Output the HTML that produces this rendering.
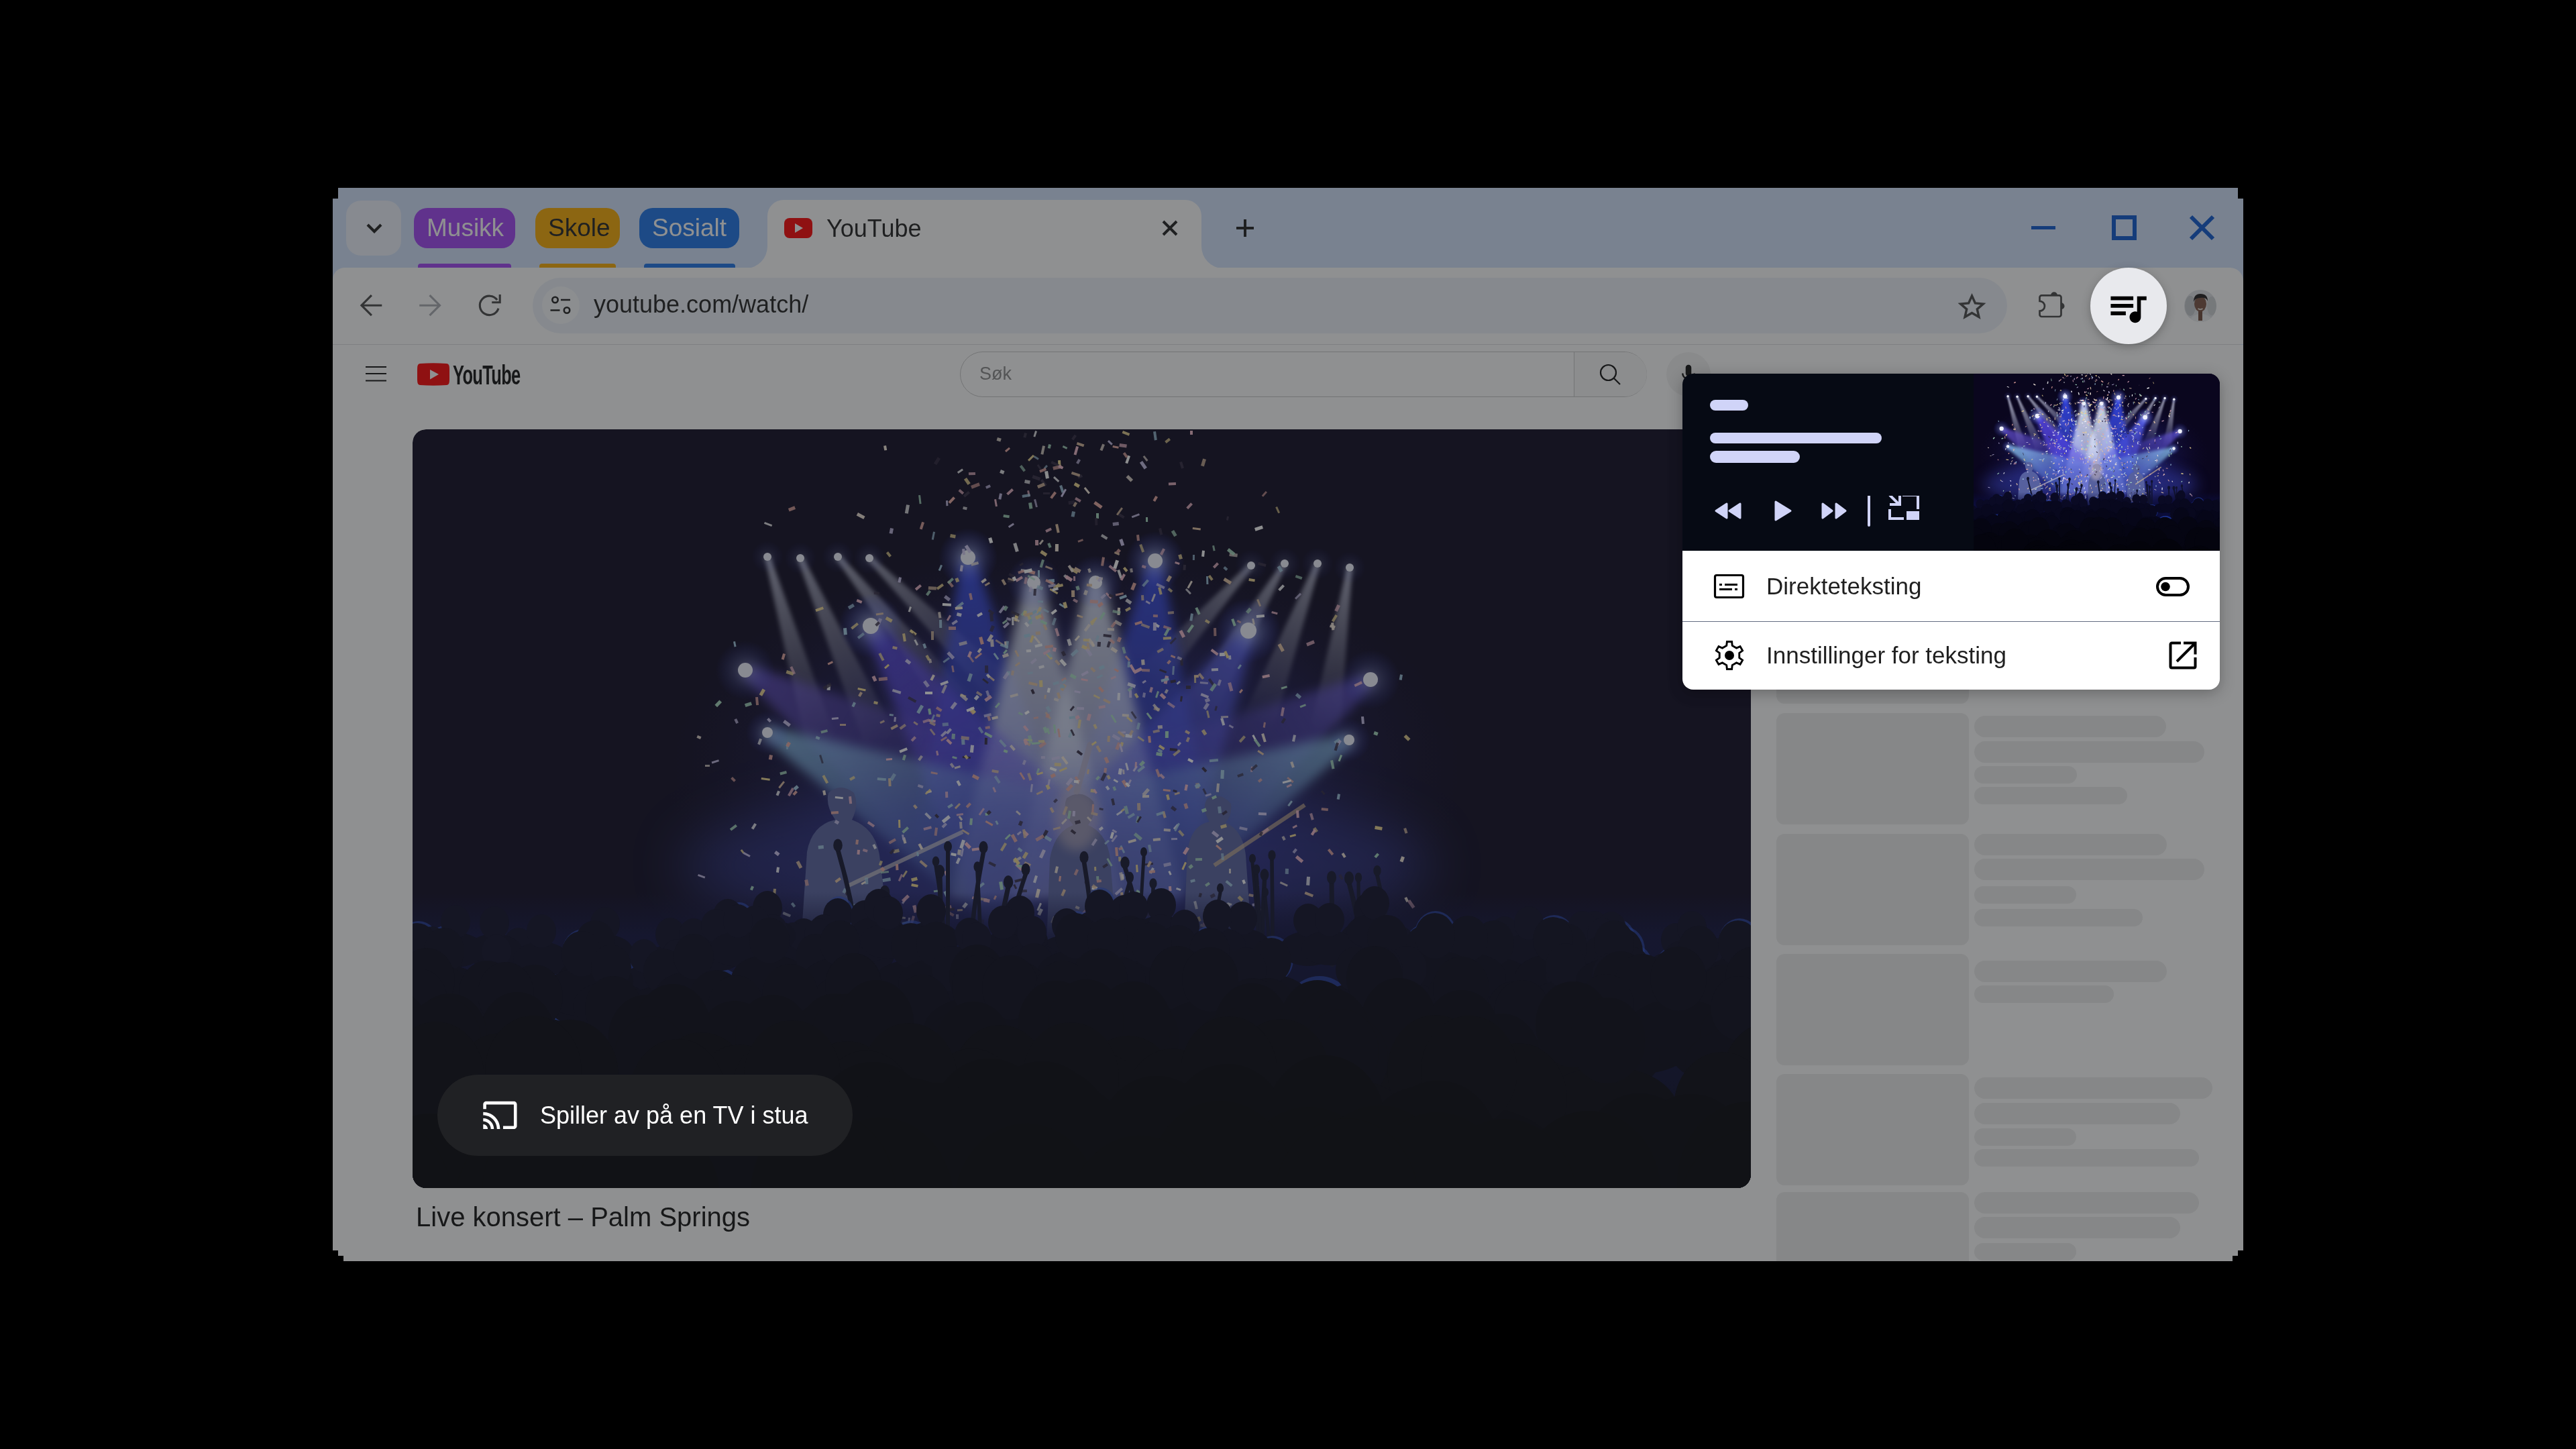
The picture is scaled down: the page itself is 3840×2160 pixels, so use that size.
<!DOCTYPE html>
<html><head><meta charset="utf-8"><style>
html,body{margin:0;padding:0;background:#000;-webkit-font-smoothing:antialiased;}
body{width:3840px;height:2160px;overflow:hidden;position:relative;}
#win{position:absolute;left:0;top:0;width:3840px;height:2160px;clip-path:polygon(504px 280px,3336px 280px,3336px 296px,3344px 296px,3344px 1864px,3336px 1864px,3336px 1872px,3328px 1872px,3328px 1880px,512px 1880px,512px 1872px,504px 1872px,504px 1864px,496px 1864px,496px 296px,504px 296px);}
</style></head><body>
<div id="win">
<div style="position:absolute;left:496px;top:280px;width:2848px;height:1600px;background:#d3e3fd"></div>
<div style="position:absolute;left:516px;top:299px;width:82px;height:82px;background:#eef2fc;border-radius:22px"></div>
<svg style="position:absolute;left:546px;top:333px;" width="24" height="16" viewBox="0 0 24 16"><path d="M2 2 L12 12 L22 2" fill="none" stroke="#1f1f1f" stroke-width="4.2"/></svg>
<div style="position:absolute;left:617px;top:310px;width:151px;height:60px;background:#a142f4;border-radius:20px"></div>
<div style="position:absolute;left:636px;top:321.18px;font-family:'Liberation Sans', sans-serif;font-size:37px;line-height:37px;color:#ffffff;font-weight:400;white-space:nowrap;will-change:transform;">Musikk</div>
<div style="position:absolute;left:623px;top:393px;width:139px;height:8px;background:#a142f4;border-radius:4px 4px 0 0"></div>
<div style="position:absolute;left:798px;top:310px;width:126px;height:60px;background:#f9ab00;border-radius:20px"></div>
<div style="position:absolute;left:817px;top:321.18px;font-family:'Liberation Sans', sans-serif;font-size:37px;line-height:37px;color:#1f1f1f;font-weight:400;white-space:nowrap;will-change:transform;">Skole</div>
<div style="position:absolute;left:804px;top:393px;width:114px;height:8px;background:#f9ab00;border-radius:4px 4px 0 0"></div>
<div style="position:absolute;left:953px;top:310px;width:149px;height:60px;background:#1a73e8;border-radius:20px"></div>
<div style="position:absolute;left:972px;top:321.18px;font-family:'Liberation Sans', sans-serif;font-size:37px;line-height:37px;color:#ffffff;font-weight:400;white-space:nowrap;will-change:transform;">Sosialt</div>
<div style="position:absolute;left:960px;top:393px;width:136px;height:8px;background:#1a73e8;border-radius:4px 4px 0 0"></div>
<svg style="position:absolute;left:1112px;top:298px;" width="711" height="102" viewBox="0 0 711 102"><path d="M0 102 A32 33 0 0 0 32 69 V24 A24 24 0 0 1 56 0 H655 A24 24 0 0 1 679 24 V69 A32 33 0 0 0 711 102 Z" fill="#ffffff"/></svg>
<svg style="position:absolute;left:1169px;top:325px;" width="42" height="30" viewBox="0 0 42 30"><rect x="0" y="0" width="42" height="30" rx="8" fill="#ff0000"/><path d="M16 8 L28 15 L16 22 Z" fill="#fff"/></svg>
<div style="position:absolute;left:1232px;top:322.53px;font-family:'Liberation Sans', sans-serif;font-size:36px;line-height:36px;color:#1f1f1f;font-weight:400;white-space:nowrap;will-change:transform;">YouTube</div>
<svg style="position:absolute;left:1732px;top:328px;" width="24" height="24" viewBox="0 0 24 24"><path d="M2 2 L22 22 M22 2 L2 22" stroke="#1f1f1f" stroke-width="4" fill="none"/></svg>
<svg style="position:absolute;left:1842px;top:326px;" width="28" height="28" viewBox="0 0 28 28"><path d="M14 1 V27 M1 14 H27" stroke="#1f1f1f" stroke-width="4" fill="none"/></svg>
<div style="position:absolute;left:3028px;top:337px;width:36px;height:5px;background:#0b57d0"></div>
<div style="position:absolute;left:3148px;top:321px;width:37px;height:37px;box-sizing:border-box;border:6px solid #0b57d0"></div>
<svg style="position:absolute;left:3263px;top:320px;" width="39" height="39" viewBox="0 0 39 39"><path d="M3 3 L36 36 M36 3 L3 36" stroke="#0b57d0" stroke-width="6" fill="none"/></svg>
<div style="position:absolute;left:496px;top:399px;width:2848px;height:114px;background:#ffffff;border-radius:18px 20px 0 0"></div>
<div style="position:absolute;left:496px;top:512.5px;width:2844px;height:1.5px;background:#dedfe0"></div>
<svg style="position:absolute;left:525px;top:430px;" width="240" height="50" viewBox="525 430 240 50"><path d="M569.3 455.2 H539 M553.9 440.2 L538.9 455.2 L553.9 470.1" fill="none" stroke="#474747" stroke-width="3.1"/><path d="M625.2 455.2 H655 M640.5 440.2 L655.5 455.2 L640.5 470.1" fill="none" stroke="#a8abb0" stroke-width="3.1"/><path d="M741.1 447.2 A14.2 14.2 0 1 0 743.0 459.7" fill="none" stroke="#474747" stroke-width="3.1"/><path d="M733.2 450.8 H745.2 V439" fill="none" stroke="#474747" stroke-width="3.1"/></svg>
<div style="position:absolute;left:794px;top:414px;width:2198px;height:83px;background:#ecf1f8;border-radius:41.5px"></div>
<div style="position:absolute;left:808px;top:427px;width:56px;height:56px;background:#f8fafd;border-radius:50%"></div>
<svg style="position:absolute;left:816px;top:435px;" width="40" height="40" viewBox="0 0 40 40"><circle cx="11.5" cy="12" r="4.2" fill="none" stroke="#1f1f1f" stroke-width="2.6"/><path d="M20 12 H34" stroke="#1f1f1f" stroke-width="2.6"/><path d="M4.5 27.5 H18.5" stroke="#1f1f1f" stroke-width="2.6"/><circle cx="29" cy="27.5" r="4.2" fill="none" stroke="#1f1f1f" stroke-width="2.6"/></svg>
<div style="position:absolute;left:885px;top:435.53px;font-family:'Liberation Sans', sans-serif;font-size:36px;line-height:36px;color:#1f1f1f;font-weight:400;white-space:nowrap;will-change:transform;">youtube.com/watch/</div>
<svg style="position:absolute;left:2918px;top:436px;" width="43" height="43" viewBox="0 0 24 24"><path d="M12 2.8l2.75 6.1 6.65.6-5.05 4.4 1.5 6.5L12 17 6.15 20.4l1.5-6.5L2.6 9.5l6.65-.6z" fill="none" stroke="#474747" stroke-width="1.9" stroke-linejoin="miter"/></svg>
<svg style="position:absolute;left:3030px;top:425px;" width="60" height="60" viewBox="0 0 60 60"><path d="M13.5 15.3 H39.5 A3 3 0 0 1 42.5 18.3 V44 A3 3 0 0 1 39.5 47 H13.5 A3 3 0 0 1 10.5 44 V38.7 A7.45 7.45 0 0 0 10.5 23.8 V18.3 A3 3 0 0 1 13.5 15.3 Z" fill="none" stroke="#474747" stroke-width="2.7"/><path d="M27 15.3 A5 5 0 0 1 37 15.3 Z" fill="#474747"/><path d="M42.5 26.2 A5 5 0 0 1 42.5 36.2 Z" fill="#474747"/></svg>
<svg style="position:absolute;left:3256px;top:432px;" width="48" height="48" viewBox="0 0 48 48"><defs><clipPath id="avc"><circle cx="24" cy="24" r="24"/></clipPath></defs><g clip-path="url(#avc)"><rect width="48" height="48" fill="#dfe1e4"/><ellipse cx="9" cy="24" rx="8" ry="15" fill="#c4c8cc"/><ellipse cx="41" cy="24" rx="7" ry="14" fill="#ccd0d3"/><path d="M6 48 Q10 38 22 36 L28 36 Q40 38 44 48 Z" fill="#eceef0"/><rect x="21" y="32" width="6" height="14" fill="#6e4838"/><ellipse cx="24" cy="21" rx="9" ry="11.5" fill="#7a5242"/><path d="M14 18 Q14 6 24 6 Q35 6 35 17 Q33 11 24 12 Q16 12 14 18 Z" fill="#1e1a1a"/><path d="M20.5 28 Q24 30.5 27.5 28" stroke="#e8e0d8" stroke-width="1.8" fill="none"/></g></svg>
<div style="position:absolute;left:496px;top:514px;width:2848px;height:1366px;background:#ffffff"></div>
<svg style="position:absolute;left:545px;top:545px;" width="31" height="24" viewBox="0 0 31 24"><path d="M0 2H31M0 12H31M0 22.4H31" stroke="#0f0f0f" stroke-width="2"/></svg>
<svg style="position:absolute;left:622px;top:541px;" width="48" height="34" viewBox="0 0 48 34"><path d="M4 1 Q24 -0.5 44 1 Q47.5 1.5 47.8 6 Q48.5 17 47.8 28 Q47.5 32.5 44 33 Q24 34.5 4 33 Q0.5 32.5 0.2 28 Q-0.5 17 0.2 6 Q0.5 1.5 4 1Z" fill="#ff0000"/><path d="M19 10 L32 17 L19 24.6Z" fill="#fff"/></svg>
<div style="position:absolute;left:675px;top:538.5px;font-family:'Liberation Sans', sans-serif;font-weight:700;font-size:41px;line-height:41px;color:#0f0f0f;transform:scaleX(0.62);transform-origin:0 0;letter-spacing:-1px;white-space:nowrap">YouTube</div>
<div style="position:absolute;left:1431px;top:524px;width:1024px;height:68px;box-sizing:border-box;border:1.5px solid #c6c6c6;border-radius:34px;background:#ffffff"></div>
<div style="position:absolute;left:2346px;top:525px;width:108px;height:66px;background:#f8f8f8;border-left:1.5px solid #c6c6c6;border-radius:0 33px 33px 0"></div>
<div style="position:absolute;left:1460px;top:544.14px;font-family:'Liberation Sans', sans-serif;font-size:27px;line-height:27px;color:#888888;font-weight:400;white-space:nowrap;will-change:transform;">Søk</div>
<svg style="position:absolute;left:2383px;top:541px;" width="34" height="34" viewBox="0 0 34 34"><circle cx="14.5" cy="14.5" r="11.5" fill="none" stroke="#0f0f0f" stroke-width="2.2"/><path d="M23 23 L32 32" stroke="#0f0f0f" stroke-width="2.2"/></svg>
<div style="position:absolute;left:2484px;top:525px;width:66px;height:66px;background:#f2f2f2;border-radius:50%"></div>
<svg style="position:absolute;left:2500px;top:541px;" width="34" height="34" viewBox="0 0 24 24"><path d="M12 14c1.66 0 3-1.34 3-3V5c0-1.66-1.34-3-3-3S9 3.34 9 5v6c0 1.66 1.34 3 3 3zm5.3-3c0 3-2.54 5.1-5.3 5.1S6.7 14 6.7 11H5c0 3.41 2.72 6.23 6 6.72V21h2v-3.28c3.28-.48 6-3.3 6-6.72h-1.7z" fill="#0f0f0f"/></svg>
<svg style="position:absolute;left:615px;top:640px;border-radius:20px" width="1995" height="1131" viewBox="0 0 1995 1131"><defs><clipPath id="vclip"><rect width="1995" height="1131" rx="20"/></clipPath><g id="scene"><defs><filter id="b3" x="-50%" y="-50%" width="200%" height="200%"><feGaussianBlur stdDeviation="3"/></filter><filter id="b8" x="-50%" y="-50%" width="200%" height="200%"><feGaussianBlur stdDeviation="8"/></filter><filter id="b16" x="-50%" y="-50%" width="200%" height="200%"><feGaussianBlur stdDeviation="16"/></filter><filter id="b40" x="-50%" y="-50%" width="200%" height="200%"><feGaussianBlur stdDeviation="40"/></filter><radialGradient id="haze" cx="50%" cy="50%" r="50%"><stop offset="0" stop-color="#4a54d8" stop-opacity="0.6"/><stop offset="0.6" stop-color="#3030a8" stop-opacity="0.3"/><stop offset="1" stop-color="#1a1250" stop-opacity="0"/></radialGradient><radialGradient id="glw" cx="50%" cy="50%" r="50%"><stop offset="0" stop-color="#ffffff" stop-opacity="1"/><stop offset="0.3" stop-color="#a0b0ff" stop-opacity="0.7"/><stop offset="1" stop-color="#3040ff" stop-opacity="0"/></radialGradient><linearGradient id="crowdg" x1="0" y1="0" x2="0" y2="1"><stop offset="0" stop-color="#0c0e40" stop-opacity="0"/><stop offset="0.15" stop-color="#0c0e40" stop-opacity="0.85"/><stop offset="0.5" stop-color="#090b34" stop-opacity="1"/><stop offset="1" stop-color="#05071e" stop-opacity="1"/></linearGradient><linearGradient id="bm0" gradientUnits="userSpaceOnUse" x1="529" y1="190" x2="610" y2="470"><stop offset="0" stop-color="#d8dcf4" stop-opacity="0.75"/><stop offset="1" stop-color="#d8dcf4" stop-opacity="0.0"/></linearGradient><linearGradient id="bm1" gradientUnits="userSpaceOnUse" x1="578" y1="192" x2="700" y2="470"><stop offset="0" stop-color="#d8dcf4" stop-opacity="0.7"/><stop offset="1" stop-color="#d8dcf4" stop-opacity="0.0"/></linearGradient><linearGradient id="bm2" gradientUnits="userSpaceOnUse" x1="634" y1="190" x2="820" y2="420"><stop offset="0" stop-color="#d8dcf4" stop-opacity="0.7"/><stop offset="1" stop-color="#d8dcf4" stop-opacity="0.0"/></linearGradient><linearGradient id="bm3" gradientUnits="userSpaceOnUse" x1="681" y1="192" x2="880" y2="390"><stop offset="0" stop-color="#d8dcf4" stop-opacity="0.65"/><stop offset="1" stop-color="#d8dcf4" stop-opacity="0.0"/></linearGradient><linearGradient id="bm4" gradientUnits="userSpaceOnUse" x1="1250" y1="203" x2="1090" y2="380"><stop offset="0" stop-color="#d8dcf4" stop-opacity="0.65"/><stop offset="1" stop-color="#d8dcf4" stop-opacity="0.0"/></linearGradient><linearGradient id="bm5" gradientUnits="userSpaceOnUse" x1="1300" y1="200" x2="1170" y2="420"><stop offset="0" stop-color="#d8dcf4" stop-opacity="0.7"/><stop offset="1" stop-color="#d8dcf4" stop-opacity="0.0"/></linearGradient><linearGradient id="bm6" gradientUnits="userSpaceOnUse" x1="1349" y1="200" x2="1260" y2="440"><stop offset="0" stop-color="#d8dcf4" stop-opacity="0.7"/><stop offset="1" stop-color="#d8dcf4" stop-opacity="0.0"/></linearGradient><linearGradient id="bm7" gradientUnits="userSpaceOnUse" x1="1397" y1="206" x2="1360" y2="450"><stop offset="0" stop-color="#d8dcf4" stop-opacity="0.75"/><stop offset="1" stop-color="#d8dcf4" stop-opacity="0.0"/></linearGradient><linearGradient id="bm8" gradientUnits="userSpaceOnUse" x1="828" y1="191" x2="860" y2="600"><stop offset="0" stop-color="#3a50ff" stop-opacity="0.85"/><stop offset="1" stop-color="#3a50ff" stop-opacity="0.15"/></linearGradient><linearGradient id="bm9" gradientUnits="userSpaceOnUse" x1="1107" y1="196" x2="1080" y2="600"><stop offset="0" stop-color="#3a50ff" stop-opacity="0.85"/><stop offset="1" stop-color="#3a50ff" stop-opacity="0.15"/></linearGradient><linearGradient id="bm10" gradientUnits="userSpaceOnUse" x1="926" y1="228" x2="930" y2="700"><stop offset="0" stop-color="#e4ecff" stop-opacity="0.9"/><stop offset="1" stop-color="#e4ecff" stop-opacity="0.35"/></linearGradient><linearGradient id="bm11" gradientUnits="userSpaceOnUse" x1="1018" y1="228" x2="1020" y2="700"><stop offset="0" stop-color="#e4ecff" stop-opacity="0.9"/><stop offset="1" stop-color="#e4ecff" stop-opacity="0.35"/></linearGradient><linearGradient id="bm12" gradientUnits="userSpaceOnUse" x1="683" y1="293" x2="950" y2="680"><stop offset="0" stop-color="#5a48f0" stop-opacity="0.85"/><stop offset="1" stop-color="#5a48f0" stop-opacity="0.15"/></linearGradient><linearGradient id="bm13" gradientUnits="userSpaceOnUse" x1="1246" y1="300" x2="1030" y2="680"><stop offset="0" stop-color="#5058f0" stop-opacity="0.8"/><stop offset="1" stop-color="#5058f0" stop-opacity="0.15"/></linearGradient><linearGradient id="bm14" gradientUnits="userSpaceOnUse" x1="496" y1="359" x2="820" y2="560"><stop offset="0" stop-color="#7058e8" stop-opacity="0.7"/><stop offset="1" stop-color="#7058e8" stop-opacity="0.05"/></linearGradient><linearGradient id="bm15" gradientUnits="userSpaceOnUse" x1="1428" y1="373" x2="1130" y2="560"><stop offset="0" stop-color="#6858e8" stop-opacity="0.7"/><stop offset="1" stop-color="#6858e8" stop-opacity="0.05"/></linearGradient><linearGradient id="bm16" gradientUnits="userSpaceOnUse" x1="529" y1="452" x2="950" y2="660"><stop offset="0" stop-color="#88c0f0" stop-opacity="0.85"/><stop offset="1" stop-color="#88c0f0" stop-opacity="0.1"/></linearGradient><linearGradient id="bm17" gradientUnits="userSpaceOnUse" x1="1396" y1="463" x2="1020" y2="650"><stop offset="0" stop-color="#88c0f0" stop-opacity="0.8"/><stop offset="1" stop-color="#88c0f0" stop-opacity="0.1"/></linearGradient></defs><rect width="1995" height="1131" fill="#0a061e"/><ellipse cx="975" cy="500" rx="600" ry="330" fill="url(#haze)"/><polygon points="525,191 588,476 632,464 533,189" fill="url(#bm0)" filter="url(#b3)"/><polygon points="574,194 677,480 723,460 582,190" fill="url(#bm1)" filter="url(#b3)"/><polygon points="631,193 801,436 839,404 637,187" fill="url(#bm2)" filter="url(#b3)"/><polygon points="678,195 864,406 896,374 684,189" fill="url(#bm3)" filter="url(#b3)"/><polygon points="1247,200 1073,365 1107,395 1253,206" fill="url(#bm4)" filter="url(#b3)"/><polygon points="1297,198 1148,407 1192,433 1303,202" fill="url(#bm5)" filter="url(#b3)"/><polygon points="1345,199 1237,431 1283,449 1353,201" fill="url(#bm6)" filter="url(#b3)"/><polygon points="1393,205 1338,447 1382,453 1401,207" fill="url(#bm7)" filter="url(#b3)"/><polygon points="818,192 750,609 970,591 838,190" fill="url(#bm8)" filter="url(#b8)"/><polygon points="1097,195 970,593 1190,607 1117,197" fill="url(#bm9)" filter="url(#b8)"/><polygon points="914,228 800,701 1060,699 938,228" fill="url(#bm10)" filter="url(#b8)"/><polygon points="1006,228 890,701 1150,699 1030,228" fill="url(#bm11)" filter="url(#b8)"/><polygon points="674,299 851,748 1049,612 692,287" fill="url(#bm12)" filter="url(#b8)"/><polygon points="1236,295 926,621 1134,739 1256,305" fill="url(#bm13)" filter="url(#b8)"/><polygon points="491,367 767,645 873,475 501,351" fill="url(#bm14)" filter="url(#b8)"/><polygon points="1423,365 1077,475 1183,645 1433,381" fill="url(#bm15)" filter="url(#b8)"/><polygon points="525,461 897,768 1003,552 533,443" fill="url(#bm16)" filter="url(#b8)"/><polygon points="1392,454 967,543 1073,757 1400,472" fill="url(#bm17)" filter="url(#b8)"/><circle cx="529" cy="190" r="24" fill="url(#glw)" opacity="0.21"/><circle cx="529" cy="190" r="6" fill="#f0f2ff"/><circle cx="578" cy="192" r="24" fill="url(#glw)" opacity="0.21"/><circle cx="578" cy="192" r="6" fill="#f0f2ff"/><circle cx="634" cy="190" r="24" fill="url(#glw)" opacity="0.21"/><circle cx="634" cy="190" r="6" fill="#f0f2ff"/><circle cx="681" cy="192" r="24" fill="url(#glw)" opacity="0.21"/><circle cx="681" cy="192" r="6" fill="#f0f2ff"/><circle cx="828" cy="191" r="44" fill="url(#glw)" opacity="0.70"/><circle cx="828" cy="191" r="11" fill="#f0f2ff"/><circle cx="926" cy="228" r="40" fill="url(#glw)" opacity="0.56"/><circle cx="926" cy="228" r="10" fill="#f0f2ff"/><circle cx="1018" cy="228" r="40" fill="url(#glw)" opacity="0.56"/><circle cx="1018" cy="228" r="10" fill="#f0f2ff"/><circle cx="1107" cy="196" r="44" fill="url(#glw)" opacity="0.70"/><circle cx="1107" cy="196" r="11" fill="#f0f2ff"/><circle cx="1250" cy="203" r="24" fill="url(#glw)" opacity="0.21"/><circle cx="1250" cy="203" r="6" fill="#f0f2ff"/><circle cx="1300" cy="200" r="24" fill="url(#glw)" opacity="0.21"/><circle cx="1300" cy="200" r="6" fill="#f0f2ff"/><circle cx="1349" cy="200" r="24" fill="url(#glw)" opacity="0.21"/><circle cx="1349" cy="200" r="6" fill="#f0f2ff"/><circle cx="1397" cy="206" r="24" fill="url(#glw)" opacity="0.21"/><circle cx="1397" cy="206" r="6" fill="#f0f2ff"/><circle cx="683" cy="293" r="48" fill="url(#glw)" opacity="0.70"/><circle cx="683" cy="293" r="12" fill="#f0f2ff"/><circle cx="1246" cy="300" r="48" fill="url(#glw)" opacity="0.70"/><circle cx="1246" cy="300" r="12" fill="#f0f2ff"/><circle cx="496" cy="359" r="44" fill="url(#glw)" opacity="0.42"/><circle cx="496" cy="359" r="11" fill="#f0f2ff"/><circle cx="1428" cy="373" r="44" fill="url(#glw)" opacity="0.42"/><circle cx="1428" cy="373" r="11" fill="#f0f2ff"/><circle cx="529" cy="452" r="32" fill="url(#glw)" opacity="0.42"/><circle cx="529" cy="452" r="8" fill="#f0f2ff"/><circle cx="1396" cy="463" r="32" fill="url(#glw)" opacity="0.42"/><circle cx="1396" cy="463" r="8" fill="#f0f2ff"/><ellipse cx="960" cy="650" rx="560" ry="120" fill="#3c48c8" opacity="0.45" filter="url(#b40)"/><g fill="#56609e"><g transform="translate(110,-10)"><path d="M470 760 L478 640 Q485 600 520 592 Q505 570 510 552 Q528 536 548 552 Q556 570 545 592 Q580 605 586 645 L600 760 Z"/></g><g transform="translate(105,-10)"><path d="M840 780 L845 650 Q852 610 880 600 Q862 580 870 560 Q892 545 910 565 Q914 585 902 600 Q930 612 935 650 L945 780 Z"/></g><g transform="translate(30,-10)"><path d="M1120 760 L1125 640 Q1130 600 1158 595 Q1145 575 1155 560 Q1175 550 1190 568 Q1192 585 1182 596 Q1208 608 1212 645 L1220 760 Z"/></g></g><ellipse cx="990" cy="580" rx="34" ry="48" fill="#c8b8c0" opacity="0.55" filter="url(#b8)"/><path d="M990 540 L1010 470" stroke="#b0a8c0" stroke-width="9" stroke-linecap="round" opacity="0.7"/><path d="M650 680 L820 600" stroke="#e0d8d0" stroke-width="6" opacity="0.6"/><path d="M1195 650 L1330 560" stroke="#e0c090" stroke-width="6" opacity="0.6"/><g><rect x="556" y="335" width="9" height="4" fill="#e8a8a0" opacity="0.94" transform="rotate(106 556 335)"/><rect x="806" y="352" width="10" height="3" fill="#e8a8a0" opacity="0.73" transform="rotate(80 806 352)"/><rect x="948" y="599" width="13" height="5" fill="#302840" opacity="0.90" transform="rotate(118 948 599)"/><rect x="912" y="461" width="12" height="3" fill="#f0d890" opacity="0.88" transform="rotate(6 912 461)"/><rect x="816" y="576" width="7" height="3" fill="#f2e6d8" opacity="0.90" transform="rotate(53 816 576)"/><rect x="1211" y="338" width="8" height="5" fill="#ffffff" opacity="0.91" transform="rotate(179 1211 338)"/><rect x="993" y="233" width="6" height="5" fill="#a8dcc0" opacity="0.82" transform="rotate(72 993 233)"/><rect x="1213" y="709" width="12" height="3" fill="#f2e6d8" opacity="0.84" transform="rotate(38 1213 709)"/><rect x="883" y="725" width="10" height="5" fill="#ffffff" opacity="0.79" transform="rotate(49 883 725)"/><rect x="1271" y="683" width="6" height="4" fill="#e0c0a0" opacity="0.76" transform="rotate(88 1271 683)"/><rect x="1220" y="377" width="13" height="5" fill="#f0b8c8" opacity="0.73" transform="rotate(75 1220 377)"/><rect x="1010" y="311" width="13" height="5" fill="#f2e6d8" opacity="0.76" transform="rotate(55 1010 311)"/><rect x="1120" y="292" width="12" height="4" fill="#e8a8a0" opacity="0.76" transform="rotate(18 1120 292)"/><rect x="988" y="431" width="9" height="4" fill="#a0c8e0" opacity="0.95" transform="rotate(173 988 431)"/><rect x="913" y="464" width="10" height="4" fill="#e0c0a0" opacity="0.76" transform="rotate(29 913 464)"/><rect x="1168" y="703" width="12" height="4" fill="#ffffff" opacity="0.73" transform="rotate(76 1168 703)"/><rect x="964" y="379" width="9" height="4" fill="#a0c8e0" opacity="0.79" transform="rotate(163 964 379)"/><rect x="1217" y="130" width="6" height="3" fill="#302840" opacity="0.88" transform="rotate(101 1217 130)"/><rect x="1073" y="207" width="6" height="4" fill="#f2e6d8" opacity="0.71" transform="rotate(80 1073 207)"/><rect x="919" y="209" width="10" height="5" fill="#e8a8a0" opacity="0.97" transform="rotate(17 919 209)"/><rect x="725" y="726" width="10" height="3" fill="#f2e6d8" opacity="0.84" transform="rotate(6 725 726)"/><rect x="744" y="265" width="8" height="3" fill="#ffffff" opacity="0.84" transform="rotate(108 744 265)"/><rect x="574" y="541" width="7" height="4" fill="#e8a8a0" opacity="0.94" transform="rotate(133 574 541)"/><rect x="822" y="260" width="12" height="4" fill="#a0c8e0" opacity="0.87" transform="rotate(142 822 260)"/><rect x="521" y="462" width="9" height="4" fill="#ffffff" opacity="0.73" transform="rotate(110 521 462)"/><rect x="1272" y="691" width="11" height="4" fill="#e0c0a0" opacity="0.73" transform="rotate(83 1272 691)"/><rect x="1312" y="555" width="9" height="3" fill="#a0c8e0" opacity="0.93" transform="rotate(126 1312 555)"/><rect x="1035" y="488" width="9" height="5" fill="#e8a8a0" opacity="0.90" transform="rotate(66 1035 488)"/><rect x="1135" y="150" width="9" height="5" fill="#a8dcc0" opacity="0.76" transform="rotate(59 1135 150)"/><rect x="1345" y="319" width="12" height="5" fill="#f0b8c8" opacity="0.77" transform="rotate(158 1345 319)"/><rect x="1013" y="681" width="8" height="5" fill="#ffffff" opacity="0.99" transform="rotate(7 1013 681)"/><rect x="1062" y="205" width="7" height="4" fill="#f0d890" opacity="0.95" transform="rotate(50 1062 205)"/><rect x="700" y="283" width="11" height="5" fill="#d0c8f0" opacity="0.72" transform="rotate(112 700 283)"/><rect x="952" y="23" width="6" height="4" fill="#a8dcc0" opacity="0.89" transform="rotate(103 952 23)"/><rect x="834" y="417" width="7" height="5" fill="#e8a8a0" opacity="0.94" transform="rotate(48 834 417)"/><rect x="742" y="728" width="7" height="3" fill="#d0c8f0" opacity="0.99" transform="rotate(96 742 728)"/><rect x="1061" y="507" width="7" height="3" fill="#f2e6d8" opacity="0.75" transform="rotate(85 1061 507)"/><rect x="1153" y="202" width="8" height="4" fill="#302840" opacity="1.00" transform="rotate(94 1153 202)"/><rect x="734" y="304" width="12" height="4" fill="#f0d890" opacity="0.89" transform="rotate(81 734 304)"/><rect x="713" y="673" width="12" height="5" fill="#a0c8e0" opacity="0.80" transform="rotate(170 713 673)"/><rect x="1243" y="727" width="7" height="5" fill="#ffffff" opacity="0.76" transform="rotate(144 1243 727)"/><rect x="903" y="397" width="12" height="4" fill="#f2e6d8" opacity="0.80" transform="rotate(164 903 397)"/><rect x="821" y="61" width="9" height="3" fill="#ffffff" opacity="0.83" transform="rotate(146 821 61)"/><rect x="1210" y="508" width="13" height="5" fill="#a0c8e0" opacity="0.98" transform="rotate(93 1210 508)"/><rect x="858" y="365" width="13" height="3" fill="#e0c0a0" opacity="0.87" transform="rotate(40 858 365)"/><rect x="826" y="615" width="10" height="5" fill="#f0b8c8" opacity="0.99" transform="rotate(46 826 615)"/><rect x="913" y="644" width="10" height="4" fill="#e0c0a0" opacity="0.86" transform="rotate(25 913 644)"/><rect x="1058" y="424" width="10" height="4" fill="#f2e6d8" opacity="0.85" transform="rotate(5 1058 424)"/><rect x="1198" y="296" width="12" height="4" fill="#e8a8a0" opacity="0.72" transform="rotate(88 1198 296)"/><rect x="515" y="399" width="12" height="4" fill="#e8a8a0" opacity="0.80" transform="rotate(85 515 399)"/><rect x="1338" y="667" width="13" height="5" fill="#ffffff" opacity="0.76" transform="rotate(94 1338 667)"/><rect x="1082" y="457" width="11" height="3" fill="#f0d890" opacity="0.70" transform="rotate(35 1082 457)"/><rect x="935" y="210" width="11" height="3" fill="#a0c8e0" opacity="0.92" transform="rotate(90 935 210)"/><rect x="964" y="392" width="9" height="4" fill="#e0c0a0" opacity="0.88" transform="rotate(74 964 392)"/><rect x="1148" y="398" width="8" height="3" fill="#302840" opacity="0.96" transform="rotate(98 1148 398)"/><rect x="827" y="172" width="12" height="5" fill="#d0c8f0" opacity="0.97" transform="rotate(57 827 172)"/><rect x="795" y="658" width="7" height="3" fill="#f0b8c8" opacity="0.95" transform="rotate(70 795 658)"/><rect x="1000" y="312" width="9" height="4" fill="#f0d890" opacity="0.87" transform="rotate(3 1000 312)"/><rect x="884" y="265" width="12" height="4" fill="#d0c8f0" opacity="0.85" transform="rotate(127 884 265)"/><rect x="1009" y="507" width="7" height="3" fill="#e0c0a0" opacity="0.97" transform="rotate(99 1009 507)"/><rect x="1047" y="356" width="7" height="3" fill="#e8a8a0" opacity="1.00" transform="rotate(31 1047 356)"/><rect x="1059" y="686" width="13" height="4" fill="#d0c8f0" opacity="0.82" transform="rotate(138 1059 686)"/><rect x="1014" y="316" width="8" height="3" fill="#f2e6d8" opacity="0.95" transform="rotate(67 1014 316)"/><rect x="1416" y="379" width="12" height="4" fill="#f0b8c8" opacity="0.87" transform="rotate(155 1416 379)"/><rect x="986" y="252" width="7" height="4" fill="#f0b8c8" opacity="0.74" transform="rotate(29 986 252)"/><rect x="833" y="244" width="10" height="4" fill="#e8a8a0" opacity="0.82" transform="rotate(78 833 244)"/><rect x="1180" y="535" width="9" height="3" fill="#302840" opacity="0.71" transform="rotate(64 1180 535)"/><rect x="1040" y="202" width="13" height="4" fill="#f0b8c8" opacity="0.87" transform="rotate(39 1040 202)"/><rect x="1025" y="519" width="6" height="4" fill="#a8dcc0" opacity="0.83" transform="rotate(133 1025 519)"/><rect x="953" y="563" width="8" height="4" fill="#e0c0a0" opacity="0.85" transform="rotate(61 953 563)"/><rect x="940" y="716" width="10" height="5" fill="#ffffff" opacity="0.86" transform="rotate(115 940 716)"/><rect x="1201" y="495" width="13" height="4" fill="#a0c8e0" opacity="0.86" transform="rotate(175 1201 495)"/><rect x="913" y="441" width="9" height="4" fill="#f0b8c8" opacity="0.88" transform="rotate(51 913 441)"/><rect x="916" y="271" width="10" height="4" fill="#a8dcc0" opacity="0.71" transform="rotate(129 916 271)"/><rect x="1341" y="572" width="10" height="4" fill="#f0b8c8" opacity="0.72" transform="rotate(74 1341 572)"/><rect x="792" y="233" width="11" height="4" fill="#f0d890" opacity="0.83" transform="rotate(144 792 233)"/><rect x="1136" y="353" width="13" height="3" fill="#a0c8e0" opacity="0.74" transform="rotate(94 1136 353)"/><rect x="989" y="710" width="6" height="4" fill="#f2e6d8" opacity="0.81" transform="rotate(21 989 710)"/><rect x="809" y="103" width="11" height="4" fill="#e8a8a0" opacity="0.99" transform="rotate(134 809 103)"/><rect x="1144" y="543" width="8" height="3" fill="#e0c0a0" opacity="0.89" transform="rotate(161 1144 543)"/><rect x="938" y="266" width="10" height="4" fill="#f0d890" opacity="0.76" transform="rotate(114 938 266)"/><rect x="1218" y="184" width="12" height="5" fill="#f2e6d8" opacity="0.70" transform="rotate(7 1218 184)"/><rect x="983" y="206" width="11" height="5" fill="#f0d890" opacity="0.89" transform="rotate(29 983 206)"/><rect x="850" y="276" width="8" height="4" fill="#ffffff" opacity="0.94" transform="rotate(151 850 276)"/><rect x="993" y="331" width="12" height="5" fill="#a0c8e0" opacity="0.83" transform="rotate(138 993 331)"/><rect x="1032" y="191" width="13" height="4" fill="#e8a8a0" opacity="0.83" transform="rotate(99 1032 191)"/><rect x="812" y="273" width="7" height="5" fill="#ffffff" opacity="0.83" transform="rotate(14 812 273)"/><rect x="1073" y="420" width="12" height="3" fill="#302840" opacity="0.72" transform="rotate(56 1073 420)"/><rect x="800" y="225" width="11" height="4" fill="#e8a8a0" opacity="0.77" transform="rotate(51 800 225)"/><rect x="736" y="486" width="8" height="4" fill="#a8dcc0" opacity="0.83" transform="rotate(107 736 486)"/><rect x="1481" y="594" width="8" height="4" fill="#e0c0a0" opacity="0.77" transform="rotate(72 1481 594)"/><rect x="860" y="268" width="9" height="4" fill="#302840" opacity="0.81" transform="rotate(35 860 268)"/><rect x="1108" y="289" width="7" height="4" fill="#ffffff" opacity="0.93" transform="rotate(32 1108 289)"/><rect x="963" y="652" width="10" height="4" fill="#f2e6d8" opacity="0.90" transform="rotate(102 963 652)"/><rect x="1030" y="595" width="6" height="4" fill="#ffffff" opacity="0.80" transform="rotate(142 1030 595)"/><rect x="1088" y="202" width="6" height="4" fill="#f0b8c8" opacity="0.77" transform="rotate(18 1088 202)"/><rect x="1058" y="163" width="10" height="5" fill="#d0c8f0" opacity="0.94" transform="rotate(71 1058 163)"/><rect x="1108" y="246" width="12" height="3" fill="#f2e6d8" opacity="0.82" transform="rotate(111 1108 246)"/><rect x="1209" y="611" width="11" height="5" fill="#ffffff" opacity="0.97" transform="rotate(145 1209 611)"/><rect x="750" y="709" width="11" height="5" fill="#f0b8c8" opacity="0.97" transform="rotate(76 750 709)"/><rect x="893" y="470" width="9" height="4" fill="#f2e6d8" opacity="0.84" transform="rotate(49 893 470)"/><rect x="774" y="541" width="8" height="3" fill="#f2e6d8" opacity="0.93" transform="rotate(166 774 541)"/><rect x="771" y="435" width="10" height="4" fill="#f0b8c8" opacity="0.75" transform="rotate(161 771 435)"/><rect x="806" y="561" width="8" height="4" fill="#a0c8e0" opacity="0.96" transform="rotate(147 806 561)"/><rect x="558" y="359" width="11" height="5" fill="#f0d890" opacity="0.82" transform="rotate(17 558 359)"/><rect x="1435" y="591" width="11" height="5" fill="#f0d890" opacity="0.97" transform="rotate(10 1435 591)"/><rect x="901" y="647" width="12" height="4" fill="#f0b8c8" opacity="0.88" transform="rotate(44 901 647)"/><rect x="1177" y="643" width="10" height="4" fill="#a8dcc0" opacity="0.85" transform="rotate(179 1177 643)"/><rect x="898" y="678" width="7" height="3" fill="#302840" opacity="0.91" transform="rotate(63 898 678)"/><rect x="826" y="72" width="10" height="5" fill="#f0d890" opacity="0.83" transform="rotate(55 826 72)"/><rect x="1015" y="678" width="7" height="5" fill="#e0c0a0" opacity="0.82" transform="rotate(38 1015 678)"/><rect x="1476" y="366" width="8" height="4" fill="#a0c8e0" opacity="0.90" transform="rotate(100 1476 366)"/><rect x="870" y="104" width="11" height="3" fill="#f0b8c8" opacity="0.91" transform="rotate(80 870 104)"/><rect x="711" y="352" width="8" height="3" fill="#f0d890" opacity="0.97" transform="rotate(139 711 352)"/><rect x="741" y="113" width="13" height="5" fill="#ffffff" opacity="0.78" transform="rotate(100 741 113)"/><rect x="717" y="148" width="8" height="5" fill="#d0c8f0" opacity="0.83" transform="rotate(101 717 148)"/><rect x="1183" y="283" width="7" height="4" fill="#f0d890" opacity="0.82" transform="rotate(32 1183 283)"/><rect x="1199" y="619" width="10" height="3" fill="#e8a8a0" opacity="1.00" transform="rotate(41 1199 619)"/><rect x="999" y="321" width="12" height="5" fill="#f0d890" opacity="0.93" transform="rotate(25 999 321)"/><rect x="734" y="608" width="9" height="4" fill="#f2e6d8" opacity="0.92" transform="rotate(74 734 608)"/><rect x="809" y="454" width="8" height="5" fill="#a8dcc0" opacity="0.80" transform="rotate(95 809 454)"/><rect x="1261" y="253" width="11" height="3" fill="#e0c0a0" opacity="0.80" transform="rotate(68 1261 253)"/><rect x="1189" y="217" width="8" height="4" fill="#f0d890" opacity="0.81" transform="rotate(54 1189 217)"/><rect x="1172" y="370" width="7" height="4" fill="#e0c0a0" opacity="1.00" transform="rotate(178 1172 370)"/><rect x="1267" y="523" width="6" height="4" fill="#e8a8a0" opacity="0.77" transform="rotate(140 1267 523)"/><rect x="863" y="427" width="11" height="4" fill="#d0c8f0" opacity="0.78" transform="rotate(167 863 427)"/><rect x="547" y="653" width="8" height="4" fill="#ffffff" opacity="0.87" transform="rotate(98 547 653)"/><rect x="1053" y="196" width="13" height="5" fill="#ffffff" opacity="0.98" transform="rotate(108 1053 196)"/><rect x="931" y="3" width="9" height="3" fill="#ffffff" opacity="0.84" transform="rotate(108 931 3)"/><rect x="810" y="299" width="11" height="5" fill="#e8a8a0" opacity="0.79" transform="rotate(180 810 299)"/><rect x="957" y="497" width="10" height="5" fill="#f0d890" opacity="0.82" transform="rotate(3 957 497)"/><rect x="1056" y="181" width="6" height="5" fill="#e8a8a0" opacity="0.82" transform="rotate(130 1056 181)"/><rect x="1127" y="368" width="12" height="5" fill="#f0b8c8" opacity="0.93" transform="rotate(102 1127 368)"/><rect x="1088" y="359" width="13" height="5" fill="#f0b8c8" opacity="0.95" transform="rotate(154 1088 359)"/><rect x="1304" y="385" width="9" height="3" fill="#a8dcc0" opacity="0.92" transform="rotate(163 1304 385)"/><rect x="932" y="666" width="11" height="4" fill="#ffffff" opacity="0.77" transform="rotate(107 932 666)"/><rect x="613" y="625" width="8" height="5" fill="#a0c8e0" opacity="0.91" transform="rotate(175 613 625)"/><rect x="987" y="389" width="9" height="3" fill="#d0c8f0" opacity="0.96" transform="rotate(12 987 389)"/><rect x="1139" y="312" width="12" height="3" fill="#302840" opacity="0.74" transform="rotate(134 1139 312)"/><rect x="908" y="53" width="10" height="4" fill="#a8dcc0" opacity="0.71" transform="rotate(53 908 53)"/><rect x="868" y="333" width="11" height="3" fill="#a0c8e0" opacity="0.97" transform="rotate(55 868 333)"/><rect x="957" y="228" width="9" height="5" fill="#a0c8e0" opacity="0.96" transform="rotate(176 957 228)"/><rect x="769" y="234" width="12" height="5" fill="#e0c0a0" opacity="0.76" transform="rotate(3 769 234)"/><rect x="1146" y="468" width="6" height="3" fill="#d0c8f0" opacity="0.99" transform="rotate(131 1146 468)"/><rect x="1293" y="203" width="9" height="5" fill="#a0c8e0" opacity="0.82" transform="rotate(60 1293 203)"/><rect x="1023" y="125" width="8" height="4" fill="#a8dcc0" opacity="0.94" transform="rotate(90 1023 125)"/><rect x="904" y="276" width="11" height="5" fill="#f0d890" opacity="0.99" transform="rotate(106 904 276)"/><rect x="1060" y="663" width="7" height="4" fill="#ffffff" opacity="0.83" transform="rotate(83 1060 663)"/><rect x="1113" y="391" width="10" height="3" fill="#a8dcc0" opacity="0.86" transform="rotate(108 1113 391)"/><rect x="870" y="313" width="13" height="3" fill="#e0c0a0" opacity="0.71" transform="rotate(32 870 313)"/><rect x="910" y="585" width="7" height="5" fill="#302840" opacity="0.82" transform="rotate(112 910 585)"/><rect x="795" y="688" width="10" height="4" fill="#a0c8e0" opacity="0.93" transform="rotate(65 795 688)"/><rect x="975" y="382" width="10" height="5" fill="#e0c0a0" opacity="0.92" transform="rotate(123 975 382)"/><rect x="671" y="393" width="7" height="4" fill="#e0c0a0" opacity="0.93" transform="rotate(120 671 393)"/><rect x="727" y="582" width="12" height="3" fill="#f0d890" opacity="0.96" transform="rotate(88 727 582)"/><rect x="964" y="446" width="13" height="3" fill="#e8a8a0" opacity="0.80" transform="rotate(81 964 446)"/><rect x="1127" y="450" width="10" height="5" fill="#a8dcc0" opacity="0.96" transform="rotate(91 1127 450)"/><rect x="1032" y="23" width="10" height="4" fill="#f2e6d8" opacity="0.79" transform="rotate(112 1032 23)"/><rect x="797" y="460" width="10" height="3" fill="#e8a8a0" opacity="0.81" transform="rotate(148 797 460)"/><rect x="761" y="488" width="8" height="4" fill="#f2e6d8" opacity="0.74" transform="rotate(126 761 488)"/><rect x="817" y="559" width="10" height="3" fill="#e0c0a0" opacity="0.92" transform="rotate(134 817 559)"/><rect x="1368" y="291" width="8" height="4" fill="#f2e6d8" opacity="0.90" transform="rotate(14 1368 291)"/><rect x="1311" y="531" width="8" height="3" fill="#f0b8c8" opacity="0.84" transform="rotate(154 1311 531)"/><rect x="916" y="690" width="9" height="4" fill="#302840" opacity="0.77" transform="rotate(177 916 690)"/><rect x="571" y="119" width="10" height="5" fill="#e8a8a0" opacity="0.84" transform="rotate(159 571 119)"/><rect x="665" y="291" width="12" height="4" fill="#f0d890" opacity="0.83" transform="rotate(141 665 291)"/><rect x="647" y="296" width="10" height="5" fill="#a0c8e0" opacity="1.00" transform="rotate(85 647 296)"/><rect x="1081" y="503" width="9" height="3" fill="#d0c8f0" opacity="0.98" transform="rotate(124 1081 503)"/><rect x="857" y="460" width="10" height="4" fill="#302840" opacity="0.98" transform="rotate(92 857 460)"/><rect x="948" y="529" width="7" height="5" fill="#f0d890" opacity="0.92" transform="rotate(65 948 529)"/><rect x="1240" y="671" width="6" height="4" fill="#ffffff" opacity="0.96" transform="rotate(69 1240 671)"/><rect x="960" y="282" width="11" height="4" fill="#a0c8e0" opacity="0.71" transform="rotate(109 960 282)"/><rect x="1111" y="101" width="8" height="4" fill="#e8a8a0" opacity="0.96" transform="rotate(120 1111 101)"/><rect x="689" y="618" width="7" height="4" fill="#ffffff" opacity="0.79" transform="rotate(64 689 618)"/><rect x="932" y="255" width="8" height="3" fill="#a0c8e0" opacity="0.87" transform="rotate(4 932 255)"/><rect x="1194" y="598" width="11" height="5" fill="#d0c8f0" opacity="0.90" transform="rotate(39 1194 598)"/><rect x="938" y="707" width="12" height="3" fill="#ffffff" opacity="0.94" transform="rotate(114 938 707)"/><rect x="816" y="89" width="8" height="4" fill="#f0b8c8" opacity="0.76" transform="rotate(40 816 89)"/><rect x="988" y="569" width="8" height="4" fill="#d0c8f0" opacity="0.97" transform="rotate(94 988 569)"/><rect x="774" y="595" width="12" height="4" fill="#f0b8c8" opacity="0.74" transform="rotate(165 774 595)"/><rect x="1005" y="673" width="12" height="4" fill="#302840" opacity="0.79" transform="rotate(68 1005 673)"/><rect x="1047" y="532" width="6" height="4" fill="#a8dcc0" opacity="0.78" transform="rotate(67 1047 532)"/><rect x="915" y="494" width="7" height="4" fill="#d0c8f0" opacity="0.71" transform="rotate(111 915 494)"/><rect x="995" y="523" width="6" height="4" fill="#ffffff" opacity="0.78" transform="rotate(110 995 523)"/><rect x="1079" y="614" width="12" height="4" fill="#f2e6d8" opacity="0.94" transform="rotate(164 1079 614)"/><rect x="935" y="506" width="9" height="3" fill="#a8dcc0" opacity="0.77" transform="rotate(109 935 506)"/><rect x="1253" y="503" width="8" height="3" fill="#f0b8c8" opacity="0.70" transform="rotate(98 1253 503)"/><rect x="1189" y="405" width="7" height="5" fill="#d0c8f0" opacity="0.78" transform="rotate(159 1189 405)"/><rect x="1044" y="596" width="7" height="3" fill="#d0c8f0" opacity="0.89" transform="rotate(29 1044 596)"/><rect x="1174" y="363" width="10" height="4" fill="#e0c0a0" opacity="0.85" transform="rotate(51 1174 363)"/><rect x="738" y="478" width="12" height="4" fill="#ffffff" opacity="0.95" transform="rotate(158 738 478)"/><rect x="1306" y="655" width="8" height="5" fill="#a0c8e0" opacity="0.71" transform="rotate(92 1306 655)"/><rect x="751" y="460" width="8" height="4" fill="#f0b8c8" opacity="0.78" transform="rotate(133 751 460)"/><rect x="1114" y="470" width="9" height="4" fill="#f0d890" opacity="0.95" transform="rotate(33 1114 470)"/><rect x="721" y="613" width="11" height="4" fill="#e8a8a0" opacity="0.74" transform="rotate(150 721 613)"/><rect x="896" y="279" width="11" height="3" fill="#f2e6d8" opacity="0.84" transform="rotate(33 896 279)"/><rect x="1116" y="513" width="8" height="4" fill="#f0b8c8" opacity="0.82" transform="rotate(45 1116 513)"/><rect x="443" y="503" width="7" height="3" fill="#f2e6d8" opacity="0.76" transform="rotate(180 443 503)"/><rect x="659" y="264" width="9" height="5" fill="#a0c8e0" opacity="0.75" transform="rotate(150 659 264)"/><rect x="860" y="644" width="11" height="4" fill="#302840" opacity="0.82" transform="rotate(26 860 644)"/><rect x="836" y="514" width="10" height="5" fill="#e8a8a0" opacity="0.95" transform="rotate(26 836 514)"/><rect x="1332" y="412" width="9" height="3" fill="#a8dcc0" opacity="0.87" transform="rotate(159 1332 412)"/><rect x="798" y="106" width="8" height="3" fill="#d0c8f0" opacity="0.87" transform="rotate(87 798 106)"/><rect x="990" y="414" width="11" height="4" fill="#d0c8f0" opacity="0.85" transform="rotate(1 990 414)"/><rect x="1004" y="738" width="7" height="5" fill="#f0b8c8" opacity="0.81" transform="rotate(87 1004 738)"/><rect x="833" y="414" width="10" height="5" fill="#f0d890" opacity="0.98" transform="rotate(45 833 414)"/><rect x="908" y="640" width="13" height="4" fill="#f2e6d8" opacity="0.75" transform="rotate(150 908 640)"/><rect x="1055" y="266" width="11" height="4" fill="#f2e6d8" opacity="0.97" transform="rotate(93 1055 266)"/><rect x="1181" y="181" width="9" height="4" fill="#ffffff" opacity="0.98" transform="rotate(96 1181 181)"/><rect x="1087" y="357" width="12" height="4" fill="#e8a8a0" opacity="0.77" transform="rotate(2 1087 357)"/><rect x="813" y="287" width="9" height="4" fill="#d0c8f0" opacity="0.89" transform="rotate(146 813 287)"/><rect x="947" y="333" width="11" height="4" fill="#f0d890" opacity="0.92" transform="rotate(48 947 333)"/><rect x="1028" y="156" width="10" height="4" fill="#ffffff" opacity="0.75" transform="rotate(32 1028 156)"/><rect x="991" y="276" width="9" height="3" fill="#e0c0a0" opacity="0.95" transform="rotate(17 991 276)"/><rect x="1024" y="564" width="6" height="3" fill="#302840" opacity="0.73" transform="rotate(12 1024 564)"/><rect x="1061" y="522" width="11" height="5" fill="#e8a8a0" opacity="0.93" transform="rotate(58 1061 522)"/><rect x="1127" y="389" width="6" height="4" fill="#f2e6d8" opacity="0.76" transform="rotate(119 1127 389)"/><rect x="1317" y="456" width="10" height="4" fill="#ffffff" opacity="0.74" transform="rotate(102 1317 456)"/><rect x="654" y="547" width="11" height="4" fill="#f0b8c8" opacity="0.85" transform="rotate(84 654 547)"/><rect x="922" y="278" width="12" height="4" fill="#a8dcc0" opacity="0.88" transform="rotate(81 922 278)"/><rect x="958" y="440" width="13" height="3" fill="#a8dcc0" opacity="0.92" transform="rotate(84 958 440)"/><rect x="932" y="232" width="9" height="5" fill="#a0c8e0" opacity="0.73" transform="rotate(23 932 232)"/><rect x="525" y="138" width="12" height="3" fill="#ffffff" opacity="0.85" transform="rotate(21 525 138)"/><rect x="1172" y="527" width="8" height="5" fill="#e0c0a0" opacity="0.70" transform="rotate(82 1172 527)"/><rect x="481" y="316" width="8" height="3" fill="#a0c8e0" opacity="0.96" transform="rotate(79 481 316)"/><rect x="1078" y="601" width="13" height="5" fill="#a8dcc0" opacity="0.74" transform="rotate(40 1078 601)"/><rect x="542" y="628" width="7" height="5" fill="#d0c8f0" opacity="0.96" transform="rotate(37 542 628)"/><rect x="615" y="538" width="7" height="4" fill="#f2e6d8" opacity="0.94" transform="rotate(78 615 538)"/><rect x="1305" y="518" width="11" height="3" fill="#e8a8a0" opacity="0.75" transform="rotate(38 1305 518)"/><rect x="531" y="430" width="6" height="4" fill="#d0c8f0" opacity="0.88" transform="rotate(47 531 430)"/><rect x="1170" y="265" width="11" height="4" fill="#a8dcc0" opacity="0.93" transform="rotate(65 1170 265)"/><rect x="1081" y="649" width="11" height="3" fill="#f0d890" opacity="0.92" transform="rotate(86 1081 649)"/><rect x="948" y="445" width="9" height="3" fill="#a8dcc0" opacity="0.88" transform="rotate(75 948 445)"/><rect x="937" y="487" width="6" height="4" fill="#d0c8f0" opacity="0.74" transform="rotate(3 937 487)"/><rect x="1384" y="663" width="8" height="4" fill="#302840" opacity="0.73" transform="rotate(61 1384 663)"/><rect x="820" y="487" width="12" height="3" fill="#302840" opacity="0.90" transform="rotate(5 820 487)"/><rect x="1010" y="254" width="12" height="5" fill="#e8a8a0" opacity="0.84" transform="rotate(4 1010 254)"/><rect x="820" y="268" width="11" height="4" fill="#f2e6d8" opacity="1.00" transform="rotate(175 820 268)"/><rect x="1011" y="292" width="12" height="4" fill="#f2e6d8" opacity="0.72" transform="rotate(126 1011 292)"/><rect x="737" y="342" width="8" height="5" fill="#d0c8f0" opacity="0.95" transform="rotate(38 737 342)"/><rect x="1153" y="382" width="7" height="5" fill="#302840" opacity="0.94" transform="rotate(1 1153 382)"/><rect x="589" y="671" width="9" height="5" fill="#e8a8a0" opacity="0.70" transform="rotate(78 589 671)"/><rect x="1026" y="699" width="8" height="4" fill="#ffffff" opacity="0.93" transform="rotate(96 1026 699)"/><rect x="957" y="70" width="10" height="3" fill="#ffffff" opacity="0.85" transform="rotate(43 957 70)"/><rect x="897" y="228" width="10" height="4" fill="#302840" opacity="0.84" transform="rotate(178 897 228)"/><rect x="1106" y="413" width="9" height="5" fill="#e0c0a0" opacity="0.75" transform="rotate(19 1106 413)"/><rect x="679" y="718" width="10" height="5" fill="#f0b8c8" opacity="0.95" transform="rotate(173 679 718)"/><rect x="950" y="169" width="7" height="4" fill="#a8dcc0" opacity="0.86" transform="rotate(68 950 169)"/><rect x="1054" y="21" width="11" height="5" fill="#f0b8c8" opacity="0.79" transform="rotate(8 1054 21)"/><rect x="537" y="486" width="7" height="5" fill="#e8a8a0" opacity="0.87" transform="rotate(101 537 486)"/><rect x="1189" y="371" width="12" height="4" fill="#302840" opacity="0.78" transform="rotate(54 1189 371)"/><rect x="787" y="272" width="9" height="4" fill="#f2e6d8" opacity="0.79" transform="rotate(81 787 272)"/><rect x="1079" y="393" width="7" height="4" fill="#f0d890" opacity="0.90" transform="rotate(58 1079 393)"/><rect x="1203" y="528" width="13" height="4" fill="#f2e6d8" opacity="0.81" transform="rotate(95 1203 528)"/><rect x="1018" y="439" width="7" height="4" fill="#f0d890" opacity="0.81" transform="rotate(64 1018 439)"/><rect x="846" y="443" width="10" height="4" fill="#a0c8e0" opacity="0.74" transform="rotate(57 846 443)"/><rect x="1133" y="561" width="8" height="5" fill="#302840" opacity="0.78" transform="rotate(38 1133 561)"/><rect x="513" y="589" width="9" height="4" fill="#ffffff" opacity="0.82" transform="rotate(122 513 589)"/><rect x="1054" y="209" width="13" height="4" fill="#ffffff" opacity="0.87" transform="rotate(71 1054 209)"/><rect x="936" y="686" width="13" height="5" fill="#f2e6d8" opacity="0.95" transform="rotate(104 936 686)"/><rect x="942" y="355" width="8" height="4" fill="#ffffff" opacity="0.75" transform="rotate(164 942 355)"/><rect x="947" y="62" width="11" height="5" fill="#ffffff" opacity="0.95" transform="rotate(80 947 62)"/><rect x="828" y="708" width="8" height="5" fill="#ffffff" opacity="0.82" transform="rotate(128 828 708)"/><rect x="907" y="511" width="12" height="3" fill="#e8a8a0" opacity="0.95" transform="rotate(58 907 511)"/><rect x="919" y="91" width="9" height="3" fill="#f0b8c8" opacity="0.76" transform="rotate(78 919 91)"/><rect x="713" y="520" width="12" height="4" fill="#e0c0a0" opacity="0.92" transform="rotate(87 713 520)"/><rect x="1085" y="438" width="10" height="4" fill="#a0c8e0" opacity="0.81" transform="rotate(103 1085 438)"/><rect x="1035" y="243" width="11" height="3" fill="#f0b8c8" opacity="0.87" transform="rotate(47 1035 243)"/><rect x="1156" y="530" width="9" height="4" fill="#f0b8c8" opacity="0.97" transform="rotate(101 1156 530)"/><rect x="831" y="337" width="11" height="3" fill="#e8a8a0" opacity="0.71" transform="rotate(55 831 337)"/><rect x="990" y="517" width="10" height="4" fill="#e8a8a0" opacity="0.83" transform="rotate(60 990 517)"/><rect x="820" y="718" width="8" height="3" fill="#e0c0a0" opacity="0.92" transform="rotate(177 820 718)"/><rect x="1094" y="255" width="7" height="3" fill="#d0c8f0" opacity="0.91" transform="rotate(30 1094 255)"/><rect x="1251" y="269" width="8" height="5" fill="#a8dcc0" opacity="0.73" transform="rotate(131 1251 269)"/><rect x="888" y="265" width="7" height="5" fill="#a8dcc0" opacity="0.78" transform="rotate(120 888 265)"/><rect x="988" y="205" width="10" height="5" fill="#e0c0a0" opacity="0.96" transform="rotate(29 988 205)"/><rect x="619" y="451" width="10" height="4" fill="#a8dcc0" opacity="0.79" transform="rotate(165 619 451)"/><rect x="889" y="316" width="11" height="4" fill="#a0c8e0" opacity="0.84" transform="rotate(98 889 316)"/><rect x="918" y="274" width="10" height="4" fill="#f0d890" opacity="0.72" transform="rotate(63 918 274)"/><rect x="461" y="407" width="10" height="5" fill="#a8dcc0" opacity="0.97" transform="rotate(134 461 407)"/><rect x="913" y="75" width="8" height="5" fill="#ffffff" opacity="0.74" transform="rotate(11 913 75)"/><rect x="936" y="306" width="7" height="5" fill="#e0c0a0" opacity="0.86" transform="rotate(175 936 306)"/><rect x="939" y="323" width="11" height="4" fill="#ffffff" opacity="0.83" transform="rotate(167 939 323)"/><rect x="897" y="360" width="7" height="4" fill="#e0c0a0" opacity="0.73" transform="rotate(100 897 360)"/><rect x="967" y="666" width="8" height="3" fill="#e8a8a0" opacity="0.96" transform="rotate(97 967 666)"/><rect x="1177" y="692" width="6" height="4" fill="#302840" opacity="0.88" transform="rotate(106 1177 692)"/><rect x="1063" y="454" width="10" height="5" fill="#ffffff" opacity="0.79" transform="rotate(6 1063 454)"/><rect x="945" y="223" width="13" height="4" fill="#e8a8a0" opacity="0.91" transform="rotate(27 945 223)"/><rect x="664" y="385" width="12" height="3" fill="#f0d890" opacity="0.99" transform="rotate(12 664 385)"/><rect x="757" y="617" width="9" height="4" fill="#f2e6d8" opacity="0.97" transform="rotate(62 757 617)"/><rect x="1122" y="179" width="10" height="4" fill="#f0b8c8" opacity="0.75" transform="rotate(117 1122 179)"/><rect x="1013" y="354" width="8" height="4" fill="#e0c0a0" opacity="0.87" transform="rotate(47 1013 354)"/><rect x="781" y="424" width="6" height="4" fill="#e0c0a0" opacity="0.80" transform="rotate(12 781 424)"/><rect x="773" y="538" width="10" height="3" fill="#f0d890" opacity="0.83" transform="rotate(137 773 538)"/><rect x="886" y="618" width="13" height="4" fill="#f0d890" opacity="0.80" transform="rotate(121 886 618)"/><rect x="819" y="585" width="10" height="4" fill="#f2e6d8" opacity="0.72" transform="rotate(86 819 585)"/><rect x="1044" y="24" width="9" height="3" fill="#e8a8a0" opacity="0.96" transform="rotate(12 1044 24)"/><rect x="1217" y="711" width="13" height="3" fill="#f2e6d8" opacity="0.76" transform="rotate(129 1217 711)"/><rect x="921" y="100" width="12" height="4" fill="#a0c8e0" opacity="0.81" transform="rotate(171 921 100)"/><rect x="1099" y="538" width="12" height="5" fill="#f2e6d8" opacity="0.74" transform="rotate(131 1099 538)"/><rect x="930" y="238" width="10" height="4" fill="#302840" opacity="0.83" transform="rotate(94 930 238)"/><rect x="966" y="595" width="11" height="3" fill="#e0c0a0" opacity="0.76" transform="rotate(166 966 595)"/><rect x="1103" y="714" width="10" height="3" fill="#302840" opacity="0.84" transform="rotate(87 1103 714)"/><rect x="1118" y="446" width="7" height="5" fill="#f2e6d8" opacity="0.83" transform="rotate(176 1118 446)"/><rect x="770" y="432" width="10" height="4" fill="#f0b8c8" opacity="0.92" transform="rotate(8 770 432)"/><rect x="1083" y="157" width="9" height="4" fill="#e8a8a0" opacity="0.80" transform="rotate(84 1083 157)"/><rect x="988" y="123" width="8" height="5" fill="#a0c8e0" opacity="0.78" transform="rotate(101 988 123)"/><rect x="1045" y="550" width="10" height="4" fill="#302840" opacity="0.84" transform="rotate(77 1045 550)"/><rect x="1060" y="246" width="12" height="3" fill="#e8a8a0" opacity="0.84" transform="rotate(168 1060 246)"/><rect x="1300" y="415" width="13" height="4" fill="#f0b8c8" opacity="0.75" transform="rotate(100 1300 415)"/><rect x="736" y="701" width="8" height="3" fill="#d0c8f0" opacity="0.84" transform="rotate(124 736 701)"/><rect x="968" y="83" width="11" height="4" fill="#a0c8e0" opacity="0.87" transform="rotate(72 968 83)"/><rect x="560" y="468" width="9" height="3" fill="#a0c8e0" opacity="0.72" transform="rotate(90 560 468)"/><rect x="1010" y="207" width="6" height="4" fill="#f2e6d8" opacity="0.78" transform="rotate(72 1010 207)"/><rect x="679" y="668" width="10" height="5" fill="#a0c8e0" opacity="0.75" transform="rotate(88 679 668)"/><rect x="970" y="234" width="11" height="4" fill="#f0d890" opacity="0.91" transform="rotate(167 970 234)"/><rect x="887" y="330" width="7" height="3" fill="#a8dcc0" opacity="0.94" transform="rotate(131 887 330)"/><rect x="1346" y="593" width="7" height="5" fill="#f0d890" opacity="0.71" transform="rotate(55 1346 593)"/><rect x="1347" y="598" width="9" height="4" fill="#f0b8c8" opacity="0.98" transform="rotate(122 1347 598)"/><rect x="882" y="477" width="6" height="4" fill="#a8dcc0" opacity="0.96" transform="rotate(20 882 477)"/><rect x="1079" y="230" width="11" height="5" fill="#e8a8a0" opacity="0.92" transform="rotate(112 1079 230)"/><rect x="1312" y="495" width="9" height="4" fill="#f2e6d8" opacity="0.87" transform="rotate(71 1312 495)"/><rect x="760" y="698" width="9" height="4" fill="#e8a8a0" opacity="0.85" transform="rotate(4 760 698)"/><rect x="712" y="725" width="8" height="4" fill="#e8a8a0" opacity="0.85" transform="rotate(21 712 725)"/><rect x="959" y="234" width="11" height="4" fill="#d0c8f0" opacity="0.80" transform="rotate(170 959 234)"/><rect x="817" y="394" width="9" height="3" fill="#f0d890" opacity="0.86" transform="rotate(20 817 394)"/><rect x="891" y="361" width="6" height="5" fill="#a0c8e0" opacity="0.93" transform="rotate(96 891 361)"/><rect x="858" y="389" width="9" height="4" fill="#d0c8f0" opacity="0.72" transform="rotate(72 858 389)"/><rect x="1383" y="263" width="10" height="5" fill="#f0b8c8" opacity="0.76" transform="rotate(115 1383 263)"/><rect x="1131" y="681" width="7" height="4" fill="#f0b8c8" opacity="0.93" transform="rotate(86 1131 681)"/><rect x="506" y="411" width="10" height="5" fill="#a8dcc0" opacity="0.88" transform="rotate(162 506 411)"/><rect x="1057" y="311" width="7" height="5" fill="#e8a8a0" opacity="0.87" transform="rotate(111 1057 311)"/><rect x="980" y="202" width="11" height="4" fill="#f2e6d8" opacity="0.91" transform="rotate(57 980 202)"/><rect x="889" y="338" width="9" height="5" fill="#f2e6d8" opacity="0.87" transform="rotate(160 889 338)"/><rect x="1481" y="455" width="9" height="5" fill="#f0d890" opacity="0.90" transform="rotate(44 1481 455)"/><rect x="425" y="456" width="6" height="4" fill="#f2e6d8" opacity="0.87" transform="rotate(23 425 456)"/><rect x="743" y="298" width="11" height="4" fill="#f0d890" opacity="0.96" transform="rotate(37 743 298)"/><rect x="1201" y="360" width="10" height="4" fill="#ffffff" opacity="0.80" transform="rotate(177 1201 360)"/><rect x="630" y="547" width="12" height="3" fill="#ffffff" opacity="0.91" transform="rotate(6 630 547)"/><rect x="834" y="332" width="9" height="4" fill="#f0b8c8" opacity="0.96" transform="rotate(112 834 332)"/><rect x="1159" y="460" width="7" height="4" fill="#e0c0a0" opacity="0.84" transform="rotate(113 1159 460)"/><rect x="1379" y="278" width="11" height="4" fill="#f0d890" opacity="0.79" transform="rotate(121 1379 278)"/><rect x="569" y="536" width="13" height="4" fill="#f0b8c8" opacity="0.76" transform="rotate(120 569 536)"/><rect x="917" y="221" width="10" height="4" fill="#f0b8c8" opacity="0.71" transform="rotate(101 917 221)"/><rect x="927" y="308" width="11" height="4" fill="#f0d890" opacity="0.96" transform="rotate(110 927 308)"/><rect x="1247" y="222" width="9" height="4" fill="#f0d890" opacity="0.95" transform="rotate(9 1247 222)"/><rect x="890" y="290" width="10" height="4" fill="#d0c8f0" opacity="0.87" transform="rotate(137 890 290)"/><rect x="610" y="730" width="7" height="5" fill="#e0c0a0" opacity="0.99" transform="rotate(58 610 730)"/><rect x="790" y="203" width="9" height="3" fill="#a0c8e0" opacity="0.90" transform="rotate(113 790 203)"/><rect x="890" y="214" width="12" height="4" fill="#302840" opacity="0.71" transform="rotate(26 890 214)"/><rect x="773" y="342" width="6" height="4" fill="#f2e6d8" opacity="0.72" transform="rotate(78 773 342)"/><rect x="910" y="222" width="11" height="4" fill="#f0b8c8" opacity="0.91" transform="rotate(149 910 222)"/><rect x="868" y="294" width="9" height="5" fill="#302840" opacity="0.77" transform="rotate(113 868 294)"/><rect x="1021" y="132" width="11" height="4" fill="#302840" opacity="0.71" transform="rotate(88 1021 132)"/><rect x="1051" y="606" width="12" height="3" fill="#d0c8f0" opacity="0.80" transform="rotate(127 1051 606)"/><rect x="1037" y="650" width="8" height="4" fill="#302840" opacity="0.78" transform="rotate(146 1037 650)"/><rect x="1206" y="374" width="9" height="4" fill="#d0c8f0" opacity="0.75" transform="rotate(108 1206 374)"/><rect x="804" y="714" width="9" height="5" fill="#e8a8a0" opacity="0.84" transform="rotate(165 804 714)"/><rect x="1180" y="447" width="8" height="5" fill="#f0d890" opacity="0.84" transform="rotate(57 1180 447)"/><rect x="787" y="44" width="11" height="5" fill="#302840" opacity="0.71" transform="rotate(122 787 44)"/><rect x="987" y="240" width="10" height="5" fill="#e0c0a0" opacity="0.96" transform="rotate(89 987 240)"/><rect x="996" y="46" width="7" height="4" fill="#d0c8f0" opacity="0.72" transform="rotate(120 996 46)"/><rect x="1007" y="577" width="8" height="3" fill="#f2e6d8" opacity="0.77" transform="rotate(45 1007 577)"/><rect x="973" y="216" width="8" height="4" fill="#ffffff" opacity="0.75" transform="rotate(48 973 216)"/><rect x="999" y="71" width="7" height="4" fill="#302840" opacity="0.94" transform="rotate(158 999 71)"/><rect x="946" y="329" width="12" height="4" fill="#a0c8e0" opacity="0.86" transform="rotate(48 946 329)"/><rect x="819" y="394" width="12" height="5" fill="#f2e6d8" opacity="0.79" transform="rotate(40 819 394)"/><rect x="943" y="290" width="9" height="4" fill="#e0c0a0" opacity="0.91" transform="rotate(66 943 290)"/><rect x="920" y="512" width="11" height="4" fill="#e0c0a0" opacity="0.77" transform="rotate(72 920 512)"/><rect x="721" y="429" width="7" height="3" fill="#d0c8f0" opacity="0.86" transform="rotate(96 721 429)"/><rect x="623" y="381" width="8" height="5" fill="#ffffff" opacity="0.86" transform="rotate(93 623 381)"/><rect x="1138" y="83" width="11" height="4" fill="#f0b8c8" opacity="0.88" transform="rotate(178 1138 83)"/><rect x="688" y="405" width="6" height="4" fill="#f0d890" opacity="0.90" transform="rotate(12 688 405)"/><rect x="1066" y="428" width="10" height="3" fill="#f0d890" opacity="0.88" transform="rotate(40 1066 428)"/><rect x="938" y="180" width="10" height="5" fill="#f0d890" opacity="0.94" transform="rotate(33 938 180)"/><rect x="1119" y="536" width="11" height="3" fill="#e8a8a0" opacity="0.94" transform="rotate(6 1119 536)"/><rect x="945" y="469" width="11" height="5" fill="#e8a8a0" opacity="0.80" transform="rotate(145 945 469)"/><rect x="1111" y="506" width="12" height="4" fill="#e8a8a0" opacity="0.82" transform="rotate(70 1111 506)"/><rect x="825" y="485" width="6" height="4" fill="#f0d890" opacity="0.90" transform="rotate(49 825 485)"/><rect x="1158" y="625" width="11" height="5" fill="#f0b8c8" opacity="0.98" transform="rotate(121 1158 625)"/><rect x="1154" y="237" width="10" height="3" fill="#ffffff" opacity="0.71" transform="rotate(46 1154 237)"/><rect x="988" y="727" width="9" height="4" fill="#302840" opacity="0.89" transform="rotate(27 988 727)"/><rect x="985" y="450" width="11" height="4" fill="#a0c8e0" opacity="0.76" transform="rotate(113 985 450)"/><rect x="1011" y="536" width="7" height="5" fill="#f0d890" opacity="0.82" transform="rotate(6 1011 536)"/><rect x="1044" y="269" width="12" height="4" fill="#a8dcc0" opacity="0.75" transform="rotate(12 1044 269)"/><rect x="491" y="626" width="6" height="3" fill="#f0d890" opacity="0.84" transform="rotate(52 491 626)"/><rect x="716" y="323" width="7" height="4" fill="#e0c0a0" opacity="0.94" transform="rotate(13 716 323)"/><rect x="747" y="303" width="7" height="3" fill="#302840" opacity="0.71" transform="rotate(55 747 303)"/><rect x="1277" y="597" width="13" height="4" fill="#f0b8c8" opacity="0.79" transform="rotate(142 1277 597)"/><rect x="924" y="212" width="12" height="5" fill="#ffffff" opacity="0.97" transform="rotate(166 924 212)"/><rect x="975" y="217" width="11" height="5" fill="#f0b8c8" opacity="0.96" transform="rotate(33 975 217)"/><rect x="663" y="253" width="8" height="4" fill="#f0b8c8" opacity="0.96" transform="rotate(22 663 253)"/><rect x="613" y="268" width="12" height="4" fill="#f0d890" opacity="0.95" transform="rotate(160 613 268)"/><rect x="609" y="485" width="13" height="3" fill="#302840" opacity="0.73" transform="rotate(73 609 485)"/><rect x="821" y="575" width="10" height="3" fill="#f0b8c8" opacity="0.76" transform="rotate(172 821 575)"/><rect x="800" y="331" width="12" height="5" fill="#d0c8f0" opacity="0.85" transform="rotate(47 800 331)"/><rect x="804" y="448" width="9" height="4" fill="#ffffff" opacity="0.70" transform="rotate(132 804 448)"/><rect x="1211" y="204" width="6" height="4" fill="#a0c8e0" opacity="0.75" transform="rotate(42 1211 204)"/><rect x="960" y="343" width="9" height="4" fill="#e0c0a0" opacity="0.82" transform="rotate(48 960 343)"/><rect x="965" y="231" width="11" height="3" fill="#f0d890" opacity="0.74" transform="rotate(141 965 231)"/><rect x="724" y="443" width="11" height="4" fill="#e0c0a0" opacity="0.92" transform="rotate(152 724 443)"/><rect x="711" y="424" width="6" height="3" fill="#a0c8e0" opacity="0.90" transform="rotate(6 711 424)"/><rect x="1220" y="337" width="6" height="4" fill="#ffffff" opacity="0.71" transform="rotate(86 1220 337)"/><rect x="1176" y="393" width="12" height="4" fill="#d0c8f0" opacity="0.97" transform="rotate(22 1176 393)"/><rect x="1188" y="410" width="10" height="5" fill="#d0c8f0" opacity="0.79" transform="rotate(122 1188 410)"/><rect x="781" y="573" width="6" height="4" fill="#302840" opacity="0.97" transform="rotate(47 781 573)"/><rect x="845" y="399" width="7" height="5" fill="#ffffff" opacity="0.84" transform="rotate(131 845 399)"/><rect x="1128" y="374" width="12" height="4" fill="#a0c8e0" opacity="0.98" transform="rotate(166 1128 374)"/><rect x="1035" y="505" width="7" height="4" fill="#e8a8a0" opacity="0.83" transform="rotate(96 1035 505)"/><rect x="904" y="421" width="7" height="3" fill="#a8dcc0" opacity="0.79" transform="rotate(27 904 421)"/><rect x="1230" y="284" width="6" height="3" fill="#e8a8a0" opacity="0.74" transform="rotate(26 1230 284)"/><rect x="738" y="659" width="11" height="3" fill="#f0d890" opacity="0.80" transform="rotate(122 738 659)"/><rect x="951" y="522" width="9" height="3" fill="#d0c8f0" opacity="0.84" transform="rotate(100 951 522)"/><rect x="1023" y="666" width="6" height="4" fill="#a8dcc0" opacity="0.79" transform="rotate(85 1023 666)"/><rect x="849" y="309" width="11" height="5" fill="#e8a8a0" opacity="0.98" transform="rotate(75 849 309)"/><rect x="818" y="457" width="12" height="5" fill="#e0c0a0" opacity="0.77" transform="rotate(7 818 457)"/><rect x="1367" y="625" width="10" height="4" fill="#e8a8a0" opacity="0.87" transform="rotate(51 1367 625)"/><rect x="1115" y="235" width="11" height="4" fill="#f0d890" opacity="0.84" transform="rotate(76 1115 235)"/><rect x="1054" y="125" width="9" height="4" fill="#302840" opacity="0.88" transform="rotate(32 1054 125)"/><rect x="831" y="95" width="10" height="4" fill="#302840" opacity="0.94" transform="rotate(139 831 95)"/><rect x="802" y="579" width="13" height="5" fill="#ffffff" opacity="0.89" transform="rotate(141 802 579)"/><rect x="1030" y="261" width="8" height="5" fill="#e8a8a0" opacity="0.95" transform="rotate(144 1030 261)"/><rect x="887" y="286" width="8" height="3" fill="#a8dcc0" opacity="0.88" transform="rotate(144 887 286)"/><rect x="837" y="471" width="11" height="5" fill="#ffffff" opacity="0.86" transform="rotate(96 837 471)"/><rect x="860" y="575" width="6" height="4" fill="#a8dcc0" opacity="0.98" transform="rotate(170 860 575)"/><rect x="983" y="596" width="8" height="4" fill="#302840" opacity="0.94" transform="rotate(38 983 596)"/><rect x="1007" y="241" width="7" height="5" fill="#f2e6d8" opacity="0.77" transform="rotate(109 1007 241)"/><rect x="1070" y="346" width="9" height="4" fill="#a0c8e0" opacity="0.81" transform="rotate(93 1070 346)"/><rect x="553" y="719" width="12" height="4" fill="#ffffff" opacity="0.75" transform="rotate(23 553 719)"/><rect x="1386" y="486" width="10" height="3" fill="#a8dcc0" opacity="1.00" transform="rotate(111 1386 486)"/><rect x="1418" y="428" width="11" height="4" fill="#d0c8f0" opacity="0.90" transform="rotate(85 1418 428)"/><rect x="674" y="306" width="11" height="4" fill="#a0c8e0" opacity="0.73" transform="rotate(142 674 306)"/><rect x="931" y="344" width="10" height="4" fill="#d0c8f0" opacity="0.73" transform="rotate(140 931 344)"/><rect x="795" y="247" width="9" height="5" fill="#d0c8f0" opacity="0.78" transform="rotate(38 795 247)"/><rect x="1121" y="569" width="10" height="4" fill="#e0c0a0" opacity="0.90" transform="rotate(74 1121 569)"/><rect x="1041" y="317" width="9" height="4" fill="#302840" opacity="0.86" transform="rotate(107 1041 317)"/><rect x="995" y="430" width="6" height="5" fill="#f0b8c8" opacity="0.89" transform="rotate(150 995 430)"/><rect x="858" y="352" width="11" height="5" fill="#302840" opacity="0.76" transform="rotate(89 858 352)"/><rect x="823" y="178" width="9" height="4" fill="#d0c8f0" opacity="0.94" transform="rotate(84 823 178)"/><rect x="708" y="374" width="13" height="5" fill="#e8a8a0" opacity="0.75" transform="rotate(175 708 374)"/><rect x="526" y="389" width="10" height="5" fill="#f0d890" opacity="0.95" transform="rotate(120 526 389)"/><rect x="938" y="273" width="10" height="5" fill="#e8a8a0" opacity="0.76" transform="rotate(69 938 273)"/><rect x="1065" y="252" width="9" height="5" fill="#ffffff" opacity="0.76" transform="rotate(34 1065 252)"/><rect x="896" y="280" width="12" height="3" fill="#ffffff" opacity="0.84" transform="rotate(88 896 280)"/><rect x="996" y="587" width="8" height="5" fill="#302840" opacity="0.80" transform="rotate(166 996 587)"/><rect x="1319" y="393" width="8" height="5" fill="#a0c8e0" opacity="0.79" transform="rotate(40 1319 393)"/><rect x="1192" y="327" width="12" height="4" fill="#f0b8c8" opacity="0.96" transform="rotate(37 1192 327)"/><rect x="1138" y="377" width="8" height="4" fill="#302840" opacity="0.96" transform="rotate(170 1138 377)"/><rect x="1024" y="308" width="9" height="4" fill="#a0c8e0" opacity="0.77" transform="rotate(108 1024 308)"/><rect x="1036" y="296" width="10" height="4" fill="#f2e6d8" opacity="0.80" transform="rotate(3 1036 296)"/><rect x="858" y="364" width="6" height="4" fill="#ffffff" opacity="0.77" transform="rotate(54 858 364)"/><rect x="1120" y="595" width="10" height="4" fill="#f2e6d8" opacity="0.83" transform="rotate(5 1120 595)"/><rect x="1072" y="389" width="11" height="4" fill="#d0c8f0" opacity="0.82" transform="rotate(89 1072 389)"/><rect x="808" y="717" width="7" height="4" fill="#302840" opacity="0.95" transform="rotate(172 808 717)"/><rect x="625" y="382" width="13" height="5" fill="#302840" opacity="0.86" transform="rotate(150 625 382)"/><rect x="1200" y="413" width="7" height="3" fill="#302840" opacity="0.78" transform="rotate(105 1200 413)"/><rect x="731" y="664" width="11" height="3" fill="#f0b8c8" opacity="0.70" transform="rotate(114 731 664)"/><rect x="941" y="166" width="8" height="3" fill="#f2e6d8" opacity="0.88" transform="rotate(128 941 166)"/><rect x="477" y="518" width="7" height="4" fill="#e8a8a0" opacity="0.73" transform="rotate(45 477 518)"/><rect x="1106" y="655" width="9" height="4" fill="#ffffff" opacity="0.75" transform="rotate(121 1106 655)"/><rect x="937" y="284" width="10" height="4" fill="#a8dcc0" opacity="0.98" transform="rotate(24 937 284)"/><rect x="1424" y="689" width="8" height="3" fill="#a0c8e0" opacity="0.88" transform="rotate(83 1424 689)"/><rect x="790" y="259" width="13" height="4" fill="#ffffff" opacity="0.98" transform="rotate(3 790 259)"/><rect x="805" y="487" width="7" height="3" fill="#a8dcc0" opacity="0.86" transform="rotate(15 805 487)"/><rect x="900" y="329" width="10" height="3" fill="#e0c0a0" opacity="0.93" transform="rotate(63 900 329)"/><rect x="861" y="446" width="7" height="4" fill="#e8a8a0" opacity="0.77" transform="rotate(171 861 446)"/><rect x="519" y="711" width="13" height="5" fill="#d0c8f0" opacity="0.87" transform="rotate(151 519 711)"/><rect x="947" y="55" width="6" height="3" fill="#a0c8e0" opacity="0.71" transform="rotate(132 947 55)"/><rect x="555" y="433" width="11" height="5" fill="#d0c8f0" opacity="0.91" transform="rotate(36 555 433)"/><rect x="931" y="272" width="12" height="4" fill="#a0c8e0" opacity="0.98" transform="rotate(144 931 272)"/><rect x="942" y="608" width="13" height="5" fill="#e8a8a0" opacity="0.77" transform="rotate(150 942 608)"/><rect x="866" y="308" width="11" height="5" fill="#f2e6d8" opacity="0.90" transform="rotate(122 866 308)"/><rect x="1072" y="523" width="7" height="3" fill="#d0c8f0" opacity="0.90" transform="rotate(115 1072 523)"/><rect x="1070" y="40" width="12" height="4" fill="#ffffff" opacity="0.99" transform="rotate(109 1070 40)"/><rect x="1268" y="601" width="6" height="4" fill="#302840" opacity="0.81" transform="rotate(115 1268 601)"/><rect x="966" y="46" width="8" height="4" fill="#f0d890" opacity="0.96" transform="rotate(87 966 46)"/><rect x="1261" y="571" width="12" height="4" fill="#d0c8f0" opacity="0.98" transform="rotate(2 1261 571)"/><rect x="1300" y="234" width="10" height="4" fill="#ffffff" opacity="0.88" transform="rotate(134 1300 234)"/><rect x="1131" y="313" width="12" height="4" fill="#f0d890" opacity="0.87" transform="rotate(176 1131 313)"/><rect x="881" y="223" width="9" height="4" fill="#e0c0a0" opacity="0.88" transform="rotate(61 881 223)"/><rect x="1239" y="516" width="9" height="4" fill="#302840" opacity="0.74" transform="rotate(161 1239 516)"/><rect x="861" y="230" width="8" height="3" fill="#e0c0a0" opacity="0.93" transform="rotate(150 861 230)"/><rect x="877" y="462" width="13" height="4" fill="#a0c8e0" opacity="0.82" transform="rotate(48 877 462)"/><rect x="933" y="52" width="8" height="3" fill="#302840" opacity="0.83" transform="rotate(54 933 52)"/><rect x="1319" y="627" width="7" height="4" fill="#d0c8f0" opacity="0.73" transform="rotate(129 1319 627)"/><rect x="933" y="431" width="7" height="3" fill="#e8a8a0" opacity="0.77" transform="rotate(171 933 431)"/><rect x="576" y="534" width="7" height="5" fill="#a0c8e0" opacity="0.96" transform="rotate(139 576 534)"/><rect x="779" y="367" width="9" height="4" fill="#f2e6d8" opacity="0.98" transform="rotate(117 779 367)"/><rect x="1260" y="502" width="11" height="4" fill="#302840" opacity="0.74" transform="rotate(139 1260 502)"/><rect x="1199" y="381" width="12" height="5" fill="#a8dcc0" opacity="0.80" transform="rotate(124 1199 381)"/><rect x="863" y="571" width="6" height="5" fill="#302840" opacity="0.85" transform="rotate(135 863 571)"/><rect x="1072" y="350" width="12" height="4" fill="#f0b8c8" opacity="0.99" transform="rotate(60 1072 350)"/><rect x="988" y="219" width="7" height="3" fill="#f0b8c8" opacity="0.82" transform="rotate(89 988 219)"/><rect x="1127" y="406" width="12" height="4" fill="#f0b8c8" opacity="0.73" transform="rotate(34 1127 406)"/><rect x="660" y="520" width="8" height="4" fill="#f0d890" opacity="0.77" transform="rotate(150 660 520)"/><rect x="1289" y="115" width="10" height="3" fill="#f0d890" opacity="0.72" transform="rotate(66 1289 115)"/><rect x="898" y="219" width="6" height="5" fill="#ffffff" opacity="0.96" transform="rotate(64 898 219)"/><rect x="1062" y="34" width="8" height="4" fill="#e8a8a0" opacity="0.83" transform="rotate(54 1062 34)"/><rect x="913" y="598" width="8" height="5" fill="#f0b8c8" opacity="0.95" transform="rotate(44 913 598)"/><rect x="922" y="332" width="7" height="4" fill="#ffffff" opacity="0.84" transform="rotate(176 922 332)"/><rect x="907" y="208" width="11" height="4" fill="#ffffff" opacity="0.72" transform="rotate(9 907 208)"/><rect x="942" y="467" width="9" height="4" fill="#f0d890" opacity="0.75" transform="rotate(177 942 467)"/><rect x="1134" y="537" width="6" height="3" fill="#302840" opacity="0.95" transform="rotate(15 1134 537)"/><rect x="928" y="308" width="13" height="3" fill="#f2e6d8" opacity="0.88" transform="rotate(51 928 308)"/><rect x="1112" y="476" width="7" height="4" fill="#a0c8e0" opacity="0.86" transform="rotate(26 1112 476)"/><rect x="564" y="468" width="7" height="5" fill="#e8a8a0" opacity="0.95" transform="rotate(119 564 468)"/><rect x="1039" y="614" width="8" height="3" fill="#a0c8e0" opacity="0.83" transform="rotate(138 1039 614)"/><rect x="1184" y="569" width="7" height="5" fill="#a8dcc0" opacity="0.89" transform="rotate(159 1184 569)"/><rect x="953" y="47" width="13" height="4" fill="#302840" opacity="0.86" transform="rotate(26 953 47)"/><rect x="1281" y="271" width="9" height="3" fill="#f0b8c8" opacity="0.84" transform="rotate(15 1281 271)"/><rect x="960" y="326" width="6" height="5" fill="#f0b8c8" opacity="0.95" transform="rotate(103 960 326)"/><rect x="951" y="503" width="10" height="4" fill="#ffffff" opacity="0.95" transform="rotate(20 951 503)"/><rect x="854" y="451" width="12" height="4" fill="#a8dcc0" opacity="0.97" transform="rotate(29 854 451)"/><rect x="1254" y="455" width="10" height="3" fill="#ffffff" opacity="0.95" transform="rotate(62 1254 455)"/><rect x="847" y="698" width="10" height="4" fill="#e0c0a0" opacity="0.80" transform="rotate(8 847 698)"/><rect x="672" y="625" width="7" height="4" fill="#f0b8c8" opacity="0.75" transform="rotate(17 672 625)"/><rect x="709" y="182" width="8" height="4" fill="#f0d890" opacity="0.78" transform="rotate(52 709 182)"/><rect x="576" y="643" width="11" height="5" fill="#e0c0a0" opacity="0.87" transform="rotate(62 576 643)"/><rect x="891" y="29" width="8" height="3" fill="#e8a8a0" opacity="0.97" transform="rotate(140 891 29)"/><rect x="1131" y="346" width="6" height="4" fill="#e8a8a0" opacity="0.88" transform="rotate(131 1131 346)"/><rect x="798" y="461" width="9" height="4" fill="#f0b8c8" opacity="0.96" transform="rotate(44 798 461)"/><rect x="867" y="533" width="8" height="3" fill="#f0b8c8" opacity="0.74" transform="rotate(66 867 533)"/><rect x="820" y="596" width="12" height="3" fill="#e0c0a0" opacity="0.88" transform="rotate(31 820 596)"/><rect x="1317" y="217" width="10" height="4" fill="#a8dcc0" opacity="0.71" transform="rotate(19 1317 217)"/><rect x="1165" y="293" width="13" height="4" fill="#a8dcc0" opacity="0.95" transform="rotate(125 1165 293)"/><rect x="916" y="6" width="7" height="4" fill="#302840" opacity="0.94" transform="rotate(105 916 6)"/><rect x="835" y="580" width="10" height="4" fill="#a8dcc0" opacity="0.92" transform="rotate(95 835 580)"/><rect x="997" y="433" width="13" height="4" fill="#f0d890" opacity="0.79" transform="rotate(99 997 433)"/><rect x="702" y="276" width="11" height="3" fill="#e0c0a0" opacity="0.85" transform="rotate(172 702 276)"/><rect x="1175" y="737" width="10" height="4" fill="#f2e6d8" opacity="0.80" transform="rotate(16 1175 737)"/><rect x="1085" y="557" width="11" height="5" fill="#e0c0a0" opacity="0.81" transform="rotate(88 1085 557)"/><rect x="818" y="627" width="8" height="5" fill="#f2e6d8" opacity="0.83" transform="rotate(99 818 627)"/><rect x="799" y="718" width="10" height="4" fill="#e8a8a0" opacity="0.75" transform="rotate(30 799 718)"/><rect x="993" y="527" width="7" height="4" fill="#ffffff" opacity="0.90" transform="rotate(179 993 527)"/><rect x="849" y="335" width="12" height="3" fill="#e8a8a0" opacity="0.96" transform="rotate(141 849 335)"/><rect x="938" y="273" width="8" height="5" fill="#a0c8e0" opacity="0.95" transform="rotate(110 938 273)"/><rect x="852" y="731" width="11" height="4" fill="#302840" opacity="0.71" transform="rotate(93 852 731)"/><rect x="783" y="479" width="7" height="3" fill="#f0b8c8" opacity="0.81" transform="rotate(79 783 479)"/><rect x="993" y="657" width="9" height="4" fill="#e8a8a0" opacity="0.77" transform="rotate(114 993 657)"/><rect x="720" y="723" width="8" height="4" fill="#a8dcc0" opacity="0.88" transform="rotate(79 720 723)"/><rect x="915" y="461" width="9" height="5" fill="#f0b8c8" opacity="0.87" transform="rotate(71 915 461)"/><rect x="716" y="387" width="13" height="4" fill="#ffffff" opacity="0.70" transform="rotate(17 716 387)"/><rect x="927" y="39" width="8" height="3" fill="#a0c8e0" opacity="0.73" transform="rotate(32 927 39)"/><rect x="1148" y="341" width="11" height="4" fill="#302840" opacity="0.89" transform="rotate(85 1148 341)"/><rect x="918" y="632" width="10" height="5" fill="#f0d890" opacity="0.84" transform="rotate(121 918 632)"/><rect x="941" y="267" width="9" height="3" fill="#a0c8e0" opacity="0.78" transform="rotate(28 941 267)"/><rect x="748" y="435" width="7" height="3" fill="#e0c0a0" opacity="0.82" transform="rotate(34 748 435)"/><rect x="1019" y="652" width="6" height="3" fill="#f0d890" opacity="0.85" transform="rotate(87 1019 652)"/><rect x="1031" y="401" width="11" height="4" fill="#e0c0a0" opacity="0.89" transform="rotate(27 1031 401)"/><rect x="1120" y="329" width="10" height="4" fill="#e0c0a0" opacity="0.77" transform="rotate(151 1120 329)"/><rect x="1083" y="577" width="10" height="3" fill="#a8dcc0" opacity="0.70" transform="rotate(101 1083 577)"/><rect x="1033" y="274" width="12" height="4" fill="#a8dcc0" opacity="0.93" transform="rotate(122 1033 274)"/><rect x="890" y="364" width="11" height="5" fill="#d0c8f0" opacity="0.72" transform="rotate(124 890 364)"/><rect x="1057" y="620" width="12" height="3" fill="#a0c8e0" opacity="0.79" transform="rotate(64 1057 620)"/><rect x="633" y="614" width="12" height="3" fill="#e0c0a0" opacity="0.83" transform="rotate(57 633 614)"/><rect x="1058" y="506" width="9" height="5" fill="#ffffff" opacity="0.85" transform="rotate(99 1058 506)"/><rect x="983" y="447" width="10" height="3" fill="#302840" opacity="0.89" transform="rotate(64 983 447)"/><rect x="1274" y="94" width="9" height="3" fill="#e8a8a0" opacity="0.71" transform="rotate(132 1274 94)"/><rect x="1062" y="567" width="6" height="3" fill="#f0d890" opacity="0.84" transform="rotate(140 1062 567)"/><rect x="933" y="165" width="8" height="5" fill="#f0b8c8" opacity="0.89" transform="rotate(89 933 165)"/><rect x="838" y="417" width="12" height="4" fill="#ffffff" opacity="0.95" transform="rotate(158 838 417)"/><rect x="766" y="571" width="11" height="4" fill="#ffffff" opacity="0.72" transform="rotate(45 766 571)"/><rect x="912" y="213" width="9" height="4" fill="#e8a8a0" opacity="0.79" transform="rotate(162 912 213)"/><rect x="870" y="516" width="12" height="4" fill="#a0c8e0" opacity="0.72" transform="rotate(56 870 516)"/><rect x="1012" y="425" width="10" height="5" fill="#f0b8c8" opacity="0.83" transform="rotate(105 1012 425)"/><rect x="951" y="331" width="11" height="4" fill="#f0b8c8" opacity="0.77" transform="rotate(149 951 331)"/><rect x="783" y="594" width="12" height="4" fill="#e8a8a0" opacity="0.72" transform="rotate(97 783 594)"/><rect x="1079" y="738" width="7" height="4" fill="#e8a8a0" opacity="0.72" transform="rotate(143 1079 738)"/><rect x="1211" y="221" width="12" height="5" fill="#e0c0a0" opacity="0.97" transform="rotate(32 1211 221)"/><rect x="833" y="559" width="8" height="4" fill="#e8a8a0" opacity="0.84" transform="rotate(133 833 559)"/><rect x="1321" y="568" width="11" height="4" fill="#f0b8c8" opacity="0.92" transform="rotate(86 1321 568)"/><rect x="945" y="421" width="12" height="3" fill="#e0c0a0" opacity="0.72" transform="rotate(53 945 421)"/><rect x="758" y="642" width="13" height="4" fill="#e0c0a0" opacity="0.89" transform="rotate(41 758 642)"/><rect x="1209" y="632" width="10" height="4" fill="#a0c8e0" opacity="0.71" transform="rotate(85 1209 632)"/><rect x="661" y="408" width="7" height="4" fill="#a0c8e0" opacity="0.92" transform="rotate(115 661 408)"/><rect x="1129" y="298" width="12" height="4" fill="#a8dcc0" opacity="0.90" transform="rotate(119 1129 298)"/><rect x="957" y="733" width="7" height="4" fill="#ffffff" opacity="0.92" transform="rotate(72 957 733)"/><rect x="886" y="280" width="7" height="4" fill="#d0c8f0" opacity="0.78" transform="rotate(17 886 280)"/><rect x="1096" y="131" width="7" height="3" fill="#a8dcc0" opacity="0.97" transform="rotate(89 1096 131)"/><rect x="647" y="688" width="6" height="4" fill="#302840" opacity="0.81" transform="rotate(59 647 688)"/><rect x="1179" y="717" width="9" height="5" fill="#f2e6d8" opacity="0.89" transform="rotate(2 1179 717)"/><rect x="923" y="109" width="9" height="5" fill="#a8dcc0" opacity="0.86" transform="rotate(81 923 109)"/><rect x="803" y="631" width="8" height="4" fill="#ffffff" opacity="0.95" transform="rotate(11 803 631)"/><rect x="1056" y="468" width="11" height="5" fill="#e8a8a0" opacity="0.81" transform="rotate(112 1056 468)"/><rect x="721" y="515" width="11" height="5" fill="#a0c8e0" opacity="0.72" transform="rotate(121 721 515)"/><rect x="1019" y="220" width="10" height="4" fill="#f2e6d8" opacity="0.82" transform="rotate(5 1019 220)"/><rect x="665" y="612" width="7" height="4" fill="#e8a8a0" opacity="0.91" transform="rotate(97 665 612)"/><rect x="1064" y="337" width="9" height="3" fill="#e8a8a0" opacity="0.84" transform="rotate(48 1064 337)"/><rect x="881" y="127" width="9" height="4" fill="#a8dcc0" opacity="0.87" transform="rotate(8 881 127)"/><rect x="797" y="589" width="8" height="4" fill="#d0c8f0" opacity="0.82" transform="rotate(135 797 589)"/><rect x="835" y="696" width="10" height="4" fill="#f0b8c8" opacity="0.94" transform="rotate(19 835 696)"/><rect x="1383" y="464" width="9" height="4" fill="#a0c8e0" opacity="0.83" transform="rotate(148 1383 464)"/><rect x="1238" y="389" width="6" height="3" fill="#e8a8a0" opacity="0.99" transform="rotate(129 1238 389)"/><rect x="1007" y="717" width="10" height="4" fill="#f0b8c8" opacity="0.82" transform="rotate(134 1007 717)"/><rect x="749" y="559" width="6" height="4" fill="#e0c0a0" opacity="0.91" transform="rotate(49 749 559)"/><rect x="1164" y="652" width="6" height="5" fill="#a8dcc0" opacity="0.85" transform="rotate(141 1164 652)"/><rect x="1030" y="305" width="12" height="4" fill="#302840" opacity="0.91" transform="rotate(7 1030 305)"/><rect x="1087" y="289" width="13" height="4" fill="#e0c0a0" opacity="0.75" transform="rotate(20 1087 289)"/><rect x="802" y="156" width="8" height="5" fill="#f0d890" opacity="0.78" transform="rotate(11 802 156)"/><rect x="1064" y="704" width="9" height="4" fill="#e0c0a0" opacity="0.84" transform="rotate(167 1064 704)"/><rect x="962" y="553" width="6" height="4" fill="#302840" opacity="0.72" transform="rotate(135 962 553)"/><rect x="943" y="25" width="13" height="4" fill="#f2e6d8" opacity="0.81" transform="rotate(102 943 25)"/><rect x="896" y="91" width="11" height="4" fill="#f0b8c8" opacity="0.91" transform="rotate(138 896 91)"/><rect x="951" y="237" width="13" height="3" fill="#f0d890" opacity="0.93" transform="rotate(29 951 237)"/><rect x="1261" y="198" width="12" height="4" fill="#302840" opacity="0.95" transform="rotate(15 1261 198)"/><rect x="1205" y="562" width="10" height="5" fill="#a0c8e0" opacity="0.75" transform="rotate(83 1205 562)"/><rect x="814" y="723" width="7" height="4" fill="#d0c8f0" opacity="0.93" transform="rotate(89 814 723)"/><rect x="1132" y="220" width="9" height="5" fill="#e0c0a0" opacity="0.93" transform="rotate(119 1132 220)"/><rect x="821" y="203" width="9" height="4" fill="#d0c8f0" opacity="0.98" transform="rotate(99 821 203)"/><rect x="648" y="686" width="7" height="5" fill="#a0c8e0" opacity="0.71" transform="rotate(117 648 686)"/><rect x="566" y="353" width="12" height="4" fill="#f0b8c8" opacity="0.72" transform="rotate(65 566 353)"/><rect x="925" y="387" width="7" height="4" fill="#302840" opacity="1.00" transform="rotate(66 925 387)"/><rect x="1173" y="726" width="7" height="4" fill="#f0d890" opacity="0.98" transform="rotate(67 1173 726)"/><rect x="765" y="374" width="10" height="5" fill="#d0c8f0" opacity="0.81" transform="rotate(54 765 374)"/><rect x="1137" y="197" width="7" height="3" fill="#f0b8c8" opacity="0.93" transform="rotate(17 1137 197)"/><rect x="1117" y="393" width="9" height="5" fill="#f0b8c8" opacity="0.96" transform="rotate(44 1117 393)"/><rect x="813" y="221" width="6" height="5" fill="#f0d890" opacity="0.84" transform="rotate(68 813 221)"/><rect x="1265" y="717" width="11" height="3" fill="#d0c8f0" opacity="0.73" transform="rotate(165 1265 717)"/><rect x="1100" y="457" width="10" height="4" fill="#e8a8a0" opacity="0.98" transform="rotate(84 1100 457)"/><rect x="853" y="678" width="11" height="4" fill="#a0c8e0" opacity="0.87" transform="rotate(141 853 678)"/><rect x="877" y="60" width="6" height="5" fill="#ffffff" opacity="0.84" transform="rotate(22 877 60)"/><rect x="1041" y="312" width="8" height="4" fill="#e8a8a0" opacity="0.80" transform="rotate(39 1041 312)"/><rect x="929" y="104" width="12" height="3" fill="#d0c8f0" opacity="0.72" transform="rotate(76 929 104)"/><rect x="772" y="435" width="9" height="4" fill="#e0c0a0" opacity="0.81" transform="rotate(26 772 435)"/><rect x="759" y="234" width="10" height="4" fill="#f0b8c8" opacity="0.91" transform="rotate(140 759 234)"/><rect x="1091" y="39" width="9" height="3" fill="#f2e6d8" opacity="0.73" transform="rotate(52 1091 39)"/><rect x="1027" y="675" width="7" height="4" fill="#e8a8a0" opacity="0.85" transform="rotate(173 1027 675)"/><rect x="1262" y="679" width="8" height="4" fill="#f2e6d8" opacity="0.88" transform="rotate(103 1262 679)"/><rect x="1217" y="177" width="12" height="5" fill="#a8dcc0" opacity="0.90" transform="rotate(38 1217 177)"/><rect x="1033" y="415" width="10" height="4" fill="#f0b8c8" opacity="0.77" transform="rotate(170 1033 415)"/><rect x="1104" y="649" width="13" height="3" fill="#302840" opacity="0.88" transform="rotate(174 1104 649)"/><rect x="866" y="313" width="11" height="5" fill="#f2e6d8" opacity="0.83" transform="rotate(86 866 313)"/><rect x="1032" y="356" width="8" height="5" fill="#a0c8e0" opacity="1.00" transform="rotate(159 1032 356)"/><rect x="1131" y="336" width="7" height="3" fill="#e8a8a0" opacity="0.94" transform="rotate(23 1131 336)"/><rect x="885" y="316" width="8" height="3" fill="#f2e6d8" opacity="0.88" transform="rotate(86 885 316)"/><rect x="909" y="673" width="11" height="4" fill="#302840" opacity="0.94" transform="rotate(165 909 673)"/><rect x="542" y="685" width="9" height="4" fill="#f0d890" opacity="0.76" transform="rotate(95 542 685)"/><rect x="851" y="371" width="10" height="3" fill="#302840" opacity="0.94" transform="rotate(38 851 371)"/><rect x="1278" y="369" width="11" height="4" fill="#f0b8c8" opacity="0.99" transform="rotate(168 1278 369)"/><rect x="839" y="68" width="10" height="4" fill="#f0b8c8" opacity="0.78" transform="rotate(178 839 68)"/><rect x="726" y="630" width="9" height="5" fill="#f0d890" opacity="0.71" transform="rotate(166 726 630)"/><rect x="707" y="279" width="10" height="5" fill="#f0d890" opacity="0.88" transform="rotate(29 707 279)"/><rect x="710" y="661" width="12" height="3" fill="#a8dcc0" opacity="0.74" transform="rotate(174 710 661)"/><rect x="1074" y="386" width="8" height="4" fill="#a8dcc0" opacity="0.73" transform="rotate(137 1074 386)"/><rect x="920" y="422" width="7" height="4" fill="#ffffff" opacity="0.96" transform="rotate(147 920 422)"/><rect x="945" y="61" width="10" height="4" fill="#e8a8a0" opacity="0.85" transform="rotate(158 945 61)"/><rect x="871" y="696" width="6" height="3" fill="#e8a8a0" opacity="0.86" transform="rotate(115 871 696)"/><rect x="1189" y="736" width="8" height="4" fill="#ffffff" opacity="0.88" transform="rotate(108 1189 736)"/><rect x="1017" y="536" width="7" height="3" fill="#f0b8c8" opacity="0.98" transform="rotate(57 1017 536)"/><rect x="950" y="425" width="6" height="5" fill="#e8a8a0" opacity="0.85" transform="rotate(109 950 425)"/><rect x="959" y="517" width="7" height="5" fill="#e8a8a0" opacity="0.99" transform="rotate(154 959 517)"/><rect x="1000" y="166" width="8" height="3" fill="#e8a8a0" opacity="0.73" transform="rotate(160 1000 166)"/><rect x="900" y="169" width="13" height="5" fill="#ffffff" opacity="0.86" transform="rotate(73 900 169)"/><rect x="698" y="333" width="12" height="4" fill="#f0d890" opacity="0.77" transform="rotate(63 698 333)"/><rect x="871" y="583" width="6" height="3" fill="#a0c8e0" opacity="0.95" transform="rotate(63 871 583)"/><rect x="1061" y="324" width="10" height="4" fill="#a8dcc0" opacity="0.73" transform="rotate(74 1061 324)"/><rect x="768" y="336" width="8" height="4" fill="#f0d890" opacity="0.80" transform="rotate(61 768 336)"/><rect x="1048" y="284" width="11" height="5" fill="#f2e6d8" opacity="0.74" transform="rotate(28 1048 284)"/><rect x="1174" y="376" width="12" height="3" fill="#d0c8f0" opacity="0.75" transform="rotate(5 1174 376)"/><rect x="688" y="242" width="8" height="4" fill="#302840" opacity="0.76" transform="rotate(3 688 242)"/><rect x="1128" y="236" width="7" height="4" fill="#f0d890" opacity="0.73" transform="rotate(40 1128 236)"/><rect x="1208" y="430" width="11" height="4" fill="#ffffff" opacity="0.85" transform="rotate(73 1208 430)"/><rect x="1479" y="638" width="8" height="5" fill="#f2e6d8" opacity="0.97" transform="rotate(110 1479 638)"/><rect x="970" y="487" width="13" height="4" fill="#f2e6d8" opacity="1.00" transform="rotate(54 970 487)"/><rect x="817" y="504" width="9" height="3" fill="#f2e6d8" opacity="0.82" transform="rotate(164 817 504)"/><rect x="1388" y="631" width="7" height="4" fill="#f2e6d8" opacity="0.94" transform="rotate(58 1388 631)"/><rect x="935" y="469" width="12" height="3" fill="#a8dcc0" opacity="0.97" transform="rotate(175 935 469)"/><rect x="777" y="301" width="13" height="4" fill="#e0c0a0" opacity="0.80" transform="rotate(90 777 301)"/><rect x="484" y="592" width="11" height="4" fill="#a8dcc0" opacity="0.86" transform="rotate(143 484 592)"/><rect x="1084" y="128" width="12" height="3" fill="#d0c8f0" opacity="0.85" transform="rotate(159 1084 128)"/><rect x="1213" y="330" width="11" height="4" fill="#f0d890" opacity="0.98" transform="rotate(66 1213 330)"/><rect x="985" y="522" width="12" height="5" fill="#d0c8f0" opacity="0.87" transform="rotate(128 985 522)"/><rect x="1034" y="708" width="12" height="3" fill="#f0b8c8" opacity="0.84" transform="rotate(79 1034 708)"/><rect x="567" y="705" width="7" height="4" fill="#a0c8e0" opacity="0.91" transform="rotate(53 567 705)"/><rect x="635" y="432" width="10" height="3" fill="#d0c8f0" opacity="0.92" transform="rotate(174 635 432)"/><rect x="1191" y="545" width="9" height="3" fill="#d0c8f0" opacity="0.73" transform="rotate(162 1191 545)"/><rect x="1129" y="658" width="6" height="3" fill="#ffffff" opacity="0.89" transform="rotate(64 1129 658)"/><rect x="1009" y="318" width="11" height="4" fill="#e0c0a0" opacity="0.77" transform="rotate(89 1009 318)"/><rect x="555" y="526" width="12" height="3" fill="#e0c0a0" opacity="0.93" transform="rotate(128 555 526)"/><rect x="754" y="529" width="8" height="4" fill="#d0c8f0" opacity="0.75" transform="rotate(18 754 529)"/><rect x="1224" y="282" width="11" height="4" fill="#a8dcc0" opacity="0.95" transform="rotate(70 1224 282)"/><rect x="939" y="74" width="11" height="4" fill="#302840" opacity="0.96" transform="rotate(53 939 74)"/><rect x="944" y="628" width="13" height="5" fill="#d0c8f0" opacity="0.97" transform="rotate(115 944 628)"/><rect x="1258" y="710" width="6" height="4" fill="#d0c8f0" opacity="0.89" transform="rotate(169 1258 710)"/><rect x="1167" y="674" width="7" height="4" fill="#a0c8e0" opacity="0.90" transform="rotate(164 1167 674)"/><rect x="976" y="506" width="12" height="3" fill="#f0d890" opacity="0.92" transform="rotate(157 976 506)"/><rect x="944" y="443" width="9" height="5" fill="#a8dcc0" opacity="0.87" transform="rotate(68 944 443)"/><rect x="925" y="529" width="12" height="3" fill="#d0c8f0" opacity="0.82" transform="rotate(97 925 529)"/><rect x="944" y="203" width="11" height="3" fill="#e0c0a0" opacity="0.85" transform="rotate(21 944 203)"/><rect x="1181" y="730" width="10" height="3" fill="#e0c0a0" opacity="0.71" transform="rotate(73 1181 730)"/><rect x="1142" y="590" width="9" height="3" fill="#ffffff" opacity="0.77" transform="rotate(132 1142 590)"/><rect x="1131" y="650" width="11" height="5" fill="#d0c8f0" opacity="0.72" transform="rotate(167 1131 650)"/><rect x="987" y="414" width="8" height="3" fill="#302840" opacity="0.94" transform="rotate(130 987 414)"/><rect x="693" y="519" width="13" height="4" fill="#a0c8e0" opacity="0.90" transform="rotate(5 693 519)"/><rect x="1127" y="544" width="8" height="4" fill="#f0d890" opacity="0.93" transform="rotate(76 1127 544)"/><rect x="1215" y="705" width="7" height="3" fill="#ffffff" opacity="0.80" transform="rotate(18 1215 705)"/><rect x="856" y="225" width="8" height="4" fill="#f2e6d8" opacity="0.97" transform="rotate(143 856 225)"/><rect x="943" y="84" width="11" height="5" fill="#e0c0a0" opacity="0.84" transform="rotate(157 943 84)"/><rect x="1233" y="592" width="12" height="4" fill="#d0c8f0" opacity="0.75" transform="rotate(12 1233 592)"/><rect x="494" y="630" width="11" height="3" fill="#d0c8f0" opacity="0.89" transform="rotate(28 494 630)"/><rect x="1059" y="118" width="13" height="3" fill="#e0c0a0" opacity="0.83" transform="rotate(126 1059 118)"/><rect x="925" y="68" width="12" height="5" fill="#302840" opacity="0.97" transform="rotate(19 925 68)"/><rect x="993" y="26" width="13" height="4" fill="#f0b8c8" opacity="0.97" transform="rotate(106 993 26)"/><rect x="948" y="412" width="9" height="5" fill="#a0c8e0" opacity="0.75" transform="rotate(61 948 412)"/><rect x="938" y="280" width="9" height="5" fill="#f0d890" opacity="0.91" transform="rotate(155 938 280)"/><rect x="779" y="426" width="11" height="3" fill="#a0c8e0" opacity="0.78" transform="rotate(112 779 426)"/><rect x="1091" y="343" width="8" height="5" fill="#f2e6d8" opacity="0.90" transform="rotate(85 1091 343)"/><rect x="1053" y="143" width="9" height="5" fill="#d0c8f0" opacity="0.75" transform="rotate(174 1053 143)"/><rect x="1088" y="289" width="11" height="4" fill="#e8a8a0" opacity="0.96" transform="rotate(163 1088 289)"/><rect x="779" y="153" width="12" height="3" fill="#a0c8e0" opacity="0.78" transform="rotate(101 779 153)"/><rect x="918" y="217" width="12" height="3" fill="#a8dcc0" opacity="0.74" transform="rotate(30 918 217)"/><rect x="1135" y="275" width="9" height="4" fill="#e0c0a0" opacity="0.73" transform="rotate(176 1135 275)"/><rect x="1065" y="250" width="11" height="4" fill="#a0c8e0" opacity="0.98" transform="rotate(160 1065 250)"/><rect x="975" y="373" width="7" height="4" fill="#e8a8a0" opacity="0.84" transform="rotate(151 975 373)"/><rect x="977" y="563" width="13" height="4" fill="#e0c0a0" opacity="0.74" transform="rotate(111 977 563)"/><rect x="637" y="439" width="9" height="3" fill="#e0c0a0" opacity="0.86" transform="rotate(0 637 439)"/><rect x="1097" y="720" width="6" height="4" fill="#302840" opacity="0.74" transform="rotate(58 1097 720)"/><rect x="509" y="682" width="6" height="4" fill="#a8dcc0" opacity="0.90" transform="rotate(113 509 682)"/><rect x="1090" y="730" width="8" height="4" fill="#f2e6d8" opacity="0.96" transform="rotate(128 1090 730)"/><rect x="732" y="604" width="8" height="3" fill="#d0c8f0" opacity="0.87" transform="rotate(80 732 604)"/><rect x="749" y="726" width="12" height="4" fill="#f0b8c8" opacity="0.80" transform="rotate(106 749 726)"/><rect x="982" y="569" width="12" height="4" fill="#a8dcc0" opacity="0.83" transform="rotate(100 982 569)"/><rect x="558" y="513" width="10" height="4" fill="#a8dcc0" opacity="0.84" transform="rotate(166 558 513)"/><rect x="915" y="287" width="7" height="4" fill="#ffffff" opacity="0.75" transform="rotate(50 915 287)"/><rect x="729" y="221" width="8" height="4" fill="#d0c8f0" opacity="0.89" transform="rotate(102 729 221)"/><rect x="992" y="478" width="9" height="4" fill="#302840" opacity="0.98" transform="rotate(37 992 478)"/><rect x="700" y="652" width="6" height="5" fill="#e8a8a0" opacity="0.90" transform="rotate(40 700 652)"/><rect x="955" y="325" width="12" height="4" fill="#e8a8a0" opacity="0.89" transform="rotate(172 955 325)"/><rect x="1077" y="575" width="11" height="4" fill="#a0c8e0" opacity="0.79" transform="rotate(149 1077 575)"/><rect x="911" y="201" width="6" height="3" fill="#302840" opacity="0.79" transform="rotate(146 911 201)"/><rect x="982" y="364" width="9" height="5" fill="#a8dcc0" opacity="0.94" transform="rotate(28 982 364)"/><rect x="1106" y="409" width="12" height="4" fill="#f2e6d8" opacity="0.77" transform="rotate(49 1106 409)"/><rect x="1247" y="692" width="7" height="4" fill="#e0c0a0" opacity="0.77" transform="rotate(12 1247 692)"/><rect x="1087" y="171" width="12" height="4" fill="#f0d890" opacity="0.71" transform="rotate(70 1087 171)"/><rect x="842" y="390" width="9" height="4" fill="#e0c0a0" opacity="0.74" transform="rotate(33 842 390)"/><rect x="1139" y="683" width="7" height="3" fill="#ffffff" opacity="0.81" transform="rotate(19 1139 683)"/><rect x="1115" y="613" width="11" height="4" fill="#f2e6d8" opacity="0.88" transform="rotate(175 1115 613)"/><rect x="757" y="98" width="13" height="3" fill="#a8dcc0" opacity="0.81" transform="rotate(83 757 98)"/><rect x="852" y="699" width="9" height="5" fill="#f0b8c8" opacity="0.96" transform="rotate(12 852 699)"/><rect x="940" y="513" width="9" height="3" fill="#f0d890" opacity="0.93" transform="rotate(162 940 513)"/><rect x="807" y="224" width="10" height="4" fill="#a8dcc0" opacity="0.80" transform="rotate(137 807 224)"/><rect x="968" y="342" width="11" height="5" fill="#ffffff" opacity="0.93" transform="rotate(48 968 342)"/><rect x="958" y="727" width="10" height="3" fill="#f2e6d8" opacity="0.84" transform="rotate(114 958 727)"/><rect x="1141" y="338" width="7" height="4" fill="#d0c8f0" opacity="0.71" transform="rotate(25 1141 338)"/><rect x="988" y="79" width="8" height="5" fill="#f0d890" opacity="0.96" transform="rotate(29 988 79)"/><rect x="1383" y="544" width="8" height="4" fill="#a0c8e0" opacity="0.91" transform="rotate(100 1383 544)"/><rect x="1043" y="425" width="13" height="3" fill="#a8dcc0" opacity="0.93" transform="rotate(59 1043 425)"/><rect x="1347" y="736" width="11" height="3" fill="#f2e6d8" opacity="0.96" transform="rotate(109 1347 736)"/><rect x="1147" y="48" width="10" height="4" fill="#302840" opacity="0.93" transform="rotate(73 1147 48)"/><rect x="1008" y="363" width="11" height="4" fill="#d0c8f0" opacity="0.93" transform="rotate(152 1008 363)"/><rect x="919" y="376" width="13" height="4" fill="#e0c0a0" opacity="0.99" transform="rotate(13 919 376)"/><rect x="1294" y="319" width="12" height="5" fill="#e0c0a0" opacity="0.98" transform="rotate(61 1294 319)"/><rect x="772" y="416" width="9" height="4" fill="#a8dcc0" opacity="0.93" transform="rotate(80 772 416)"/><rect x="942" y="195" width="12" height="4" fill="#a8dcc0" opacity="0.80" transform="rotate(107 942 195)"/><rect x="844" y="201" width="11" height="4" fill="#f2e6d8" opacity="0.77" transform="rotate(166 844 201)"/><rect x="908" y="601" width="7" height="3" fill="#d0c8f0" opacity="0.85" transform="rotate(141 908 601)"/><rect x="983" y="63" width="13" height="4" fill="#e0c0a0" opacity="0.87" transform="rotate(18 983 63)"/><rect x="1055" y="393" width="11" height="4" fill="#ffffff" opacity="0.78" transform="rotate(93 1055 393)"/><rect x="1270" y="280" width="12" height="4" fill="#ffffff" opacity="0.93" transform="rotate(175 1270 280)"/><rect x="987" y="111" width="9" height="5" fill="#302840" opacity="0.76" transform="rotate(172 987 111)"/><rect x="940" y="541" width="10" height="3" fill="#e0c0a0" opacity="0.85" transform="rotate(155 940 541)"/><rect x="916" y="705" width="13" height="4" fill="#f2e6d8" opacity="0.92" transform="rotate(102 916 705)"/><rect x="1059" y="2" width="11" height="4" fill="#f0d890" opacity="0.90" transform="rotate(21 1059 2)"/><rect x="896" y="603" width="12" height="5" fill="#e8a8a0" opacity="0.88" transform="rotate(61 896 603)"/><rect x="823" y="462" width="8" height="5" fill="#a0c8e0" opacity="0.86" transform="rotate(86 823 462)"/><rect x="971" y="330" width="7" height="5" fill="#302840" opacity="0.88" transform="rotate(62 971 330)"/><rect x="1166" y="187" width="8" height="3" fill="#a0c8e0" opacity="0.77" transform="rotate(91 1166 187)"/><rect x="1163" y="112" width="10" height="4" fill="#f0b8c8" opacity="0.87" transform="rotate(133 1163 112)"/><rect x="1065" y="561" width="12" height="5" fill="#a8dcc0" opacity="0.72" transform="rotate(76 1065 561)"/><rect x="872" y="12" width="6" height="5" fill="#f2e6d8" opacity="0.81" transform="rotate(17 872 12)"/><rect x="1047" y="182" width="8" height="3" fill="#e0c0a0" opacity="0.92" transform="rotate(24 1047 182)"/><rect x="965" y="735" width="8" height="4" fill="#f0b8c8" opacity="0.92" transform="rotate(50 965 735)"/><rect x="1441" y="634" width="7" height="4" fill="#a8dcc0" opacity="0.94" transform="rotate(131 1441 634)"/><rect x="775" y="395" width="11" height="4" fill="#ffffff" opacity="0.99" transform="rotate(180 775 395)"/><rect x="1269" y="453" width="13" height="4" fill="#f2e6d8" opacity="0.93" transform="rotate(73 1269 453)"/><rect x="963" y="239" width="9" height="4" fill="#ffffff" opacity="0.95" transform="rotate(164 963 239)"/><rect x="990" y="10" width="8" height="4" fill="#302840" opacity="0.90" transform="rotate(126 990 10)"/><rect x="1310" y="525" width="13" height="3" fill="#ffffff" opacity="0.91" transform="rotate(166 1310 525)"/><rect x="676" y="676" width="7" height="3" fill="#f2e6d8" opacity="0.94" transform="rotate(152 676 676)"/><rect x="1331" y="689" width="13" height="4" fill="#e0c0a0" opacity="0.91" transform="rotate(22 1331 689)"/><rect x="1021" y="282" width="12" height="3" fill="#f0d890" opacity="0.74" transform="rotate(142 1021 282)"/><rect x="1482" y="697" width="7" height="4" fill="#f2e6d8" opacity="0.94" transform="rotate(64 1482 697)"/><rect x="1109" y="481" width="9" height="5" fill="#a8dcc0" opacity="0.92" transform="rotate(10 1109 481)"/><rect x="1038" y="16" width="8" height="3" fill="#d0c8f0" opacity="0.89" transform="rotate(44 1038 16)"/><rect x="1199" y="549" width="7" height="4" fill="#a8dcc0" opacity="0.93" transform="rotate(155 1199 549)"/><rect x="862" y="86" width="7" height="4" fill="#d0c8f0" opacity="0.76" transform="rotate(156 862 86)"/><rect x="1022" y="471" width="10" height="4" fill="#e0c0a0" opacity="0.91" transform="rotate(60 1022 471)"/><rect x="1109" y="288" width="12" height="5" fill="#d0c8f0" opacity="0.95" transform="rotate(91 1109 288)"/><rect x="667" y="627" width="7" height="4" fill="#f0b8c8" opacity="0.97" transform="rotate(95 667 627)"/><rect x="1037" y="639" width="13" height="3" fill="#a8dcc0" opacity="0.80" transform="rotate(60 1037 639)"/><rect x="916" y="271" width="7" height="5" fill="#f0d890" opacity="0.83" transform="rotate(100 916 271)"/><rect x="1020" y="467" width="8" height="3" fill="#f0d890" opacity="0.98" transform="rotate(144 1020 467)"/><rect x="1385" y="465" width="10" height="4" fill="#d0c8f0" opacity="0.87" transform="rotate(124 1385 465)"/><rect x="855" y="583" width="12" height="3" fill="#e8a8a0" opacity="0.95" transform="rotate(29 855 583)"/><rect x="963" y="171" width="11" height="5" fill="#f2e6d8" opacity="0.99" transform="rotate(91 963 171)"/><rect x="1065" y="526" width="7" height="4" fill="#ffffff" opacity="0.94" transform="rotate(46 1065 526)"/><rect x="974" y="687" width="10" height="4" fill="#e0c0a0" opacity="0.93" transform="rotate(114 974 687)"/><rect x="1102" y="645" width="9" height="4" fill="#e0c0a0" opacity="0.90" transform="rotate(117 1102 645)"/><rect x="1319" y="592" width="7" height="3" fill="#f0b8c8" opacity="0.86" transform="rotate(152 1319 592)"/><rect x="901" y="648" width="10" height="4" fill="#a8dcc0" opacity="0.87" transform="rotate(13 901 648)"/><rect x="1090" y="247" width="8" height="4" fill="#e0c0a0" opacity="0.76" transform="rotate(87 1090 247)"/><rect x="1065" y="497" width="11" height="3" fill="#ffffff" opacity="0.82" transform="rotate(75 1065 497)"/><rect x="1144" y="588" width="13" height="3" fill="#a0c8e0" opacity="0.85" transform="rotate(118 1144 588)"/><rect x="970" y="24" width="7" height="3" fill="#a8dcc0" opacity="0.88" transform="rotate(26 970 24)"/><rect x="1107" y="661" width="9" height="4" fill="#e8a8a0" opacity="0.92" transform="rotate(176 1107 661)"/><rect x="961" y="296" width="12" height="4" fill="#f0b8c8" opacity="0.86" transform="rotate(73 961 296)"/><rect x="1060" y="467" width="6" height="4" fill="#f0d890" opacity="0.87" transform="rotate(103 1060 467)"/><rect x="1058" y="660" width="12" height="5" fill="#f2e6d8" opacity="0.72" transform="rotate(78 1058 660)"/><rect x="1019" y="284" width="10" height="4" fill="#f0d890" opacity="0.73" transform="rotate(122 1019 284)"/><rect x="1220" y="655" width="7" height="3" fill="#f2e6d8" opacity="0.82" transform="rotate(90 1220 655)"/><rect x="966" y="380" width="7" height="5" fill="#a0c8e0" opacity="0.90" transform="rotate(16 966 380)"/><rect x="893" y="270" width="13" height="4" fill="#302840" opacity="0.84" transform="rotate(24 893 270)"/><rect x="1098" y="549" width="10" height="4" fill="#f2e6d8" opacity="0.89" transform="rotate(179 1098 549)"/><rect x="1175" y="532" width="8" height="5" fill="#a0c8e0" opacity="0.90" transform="rotate(155 1175 532)"/><rect x="1059" y="626" width="6" height="4" fill="#e8a8a0" opacity="0.81" transform="rotate(163 1059 626)"/><rect x="1254" y="282" width="9" height="3" fill="#f2e6d8" opacity="0.84" transform="rotate(78 1254 282)"/><rect x="951" y="386" width="7" height="4" fill="#ffffff" opacity="0.93" transform="rotate(102 951 386)"/><rect x="1346" y="735" width="13" height="3" fill="#f0d890" opacity="0.72" transform="rotate(32 1346 735)"/><rect x="542" y="714" width="11" height="5" fill="#a8dcc0" opacity="0.92" transform="rotate(48 542 714)"/><rect x="1145" y="377" width="6" height="3" fill="#ffffff" opacity="0.78" transform="rotate(141 1145 377)"/><rect x="1067" y="68" width="10" height="5" fill="#f2e6d8" opacity="0.85" transform="rotate(45 1067 68)"/><rect x="788" y="689" width="11" height="3" fill="#a8dcc0" opacity="0.80" transform="rotate(174 788 689)"/><rect x="1028" y="222" width="7" height="4" fill="#d0c8f0" opacity="0.83" transform="rotate(124 1028 222)"/><rect x="1012" y="570" width="10" height="4" fill="#e0c0a0" opacity="0.77" transform="rotate(14 1012 570)"/><rect x="1261" y="478" width="10" height="3" fill="#e0c0a0" opacity="0.95" transform="rotate(34 1261 478)"/><rect x="1236" y="352" width="7" height="3" fill="#a0c8e0" opacity="0.91" transform="rotate(125 1236 352)"/><rect x="457" y="495" width="11" height="3" fill="#d0c8f0" opacity="0.88" transform="rotate(162 457 495)"/><rect x="812" y="409" width="11" height="5" fill="#d0c8f0" opacity="0.95" transform="rotate(127 812 409)"/><rect x="635" y="573" width="11" height="4" fill="#e8a8a0" opacity="0.91" transform="rotate(176 635 573)"/><rect x="1218" y="440" width="7" height="3" fill="#d0c8f0" opacity="0.78" transform="rotate(29 1218 440)"/><rect x="968" y="58" width="13" height="5" fill="#e8a8a0" opacity="0.75" transform="rotate(168 968 58)"/><rect x="801" y="342" width="11" height="3" fill="#a0c8e0" opacity="0.72" transform="rotate(144 801 342)"/><rect x="975" y="90" width="13" height="3" fill="#d0c8f0" opacity="0.96" transform="rotate(120 975 90)"/><rect x="989" y="101" width="9" height="4" fill="#f0b8c8" opacity="0.78" transform="rotate(30 989 101)"/><rect x="1043" y="324" width="10" height="5" fill="#f2e6d8" opacity="0.90" transform="rotate(34 1043 324)"/><rect x="1040" y="457" width="9" height="4" fill="#e0c0a0" opacity="0.89" transform="rotate(94 1040 457)"/><rect x="689" y="367" width="8" height="5" fill="#f0b8c8" opacity="0.92" transform="rotate(65 689 367)"/><rect x="1427" y="739" width="8" height="5" fill="#f2e6d8" opacity="0.82" transform="rotate(60 1427 739)"/><rect x="782" y="413" width="9" height="4" fill="#e8a8a0" opacity="0.80" transform="rotate(32 782 413)"/><rect x="631" y="582" width="6" height="5" fill="#d0c8f0" opacity="0.82" transform="rotate(29 631 582)"/><rect x="835" y="365" width="12" height="5" fill="#a0c8e0" opacity="0.87" transform="rotate(108 835 365)"/><rect x="1051" y="623" width="13" height="4" fill="#e8a8a0" opacity="0.92" transform="rotate(85 1051 623)"/><rect x="876" y="409" width="9" height="3" fill="#a8dcc0" opacity="0.86" transform="rotate(131 876 409)"/><rect x="814" y="523" width="8" height="4" fill="#ffffff" opacity="0.91" transform="rotate(62 814 523)"/><rect x="1096" y="422" width="11" height="3" fill="#a8dcc0" opacity="0.94" transform="rotate(53 1096 422)"/><rect x="1116" y="147" width="10" height="4" fill="#302840" opacity="0.81" transform="rotate(77 1116 147)"/><rect x="798" y="540" width="9" height="4" fill="#f0b8c8" opacity="0.78" transform="rotate(88 798 540)"/><rect x="1098" y="226" width="12" height="4" fill="#a0c8e0" opacity="0.77" transform="rotate(131 1098 226)"/><rect x="426" y="663" width="11" height="3" fill="#d0c8f0" opacity="0.86" transform="rotate(20 426 663)"/><rect x="879" y="674" width="12" height="5" fill="#a8dcc0" opacity="0.94" transform="rotate(80 879 674)"/><rect x="1067" y="377" width="12" height="5" fill="#ffffff" opacity="0.76" transform="rotate(19 1067 377)"/><rect x="1100" y="619" width="11" height="4" fill="#a0c8e0" opacity="0.74" transform="rotate(80 1100 619)"/><rect x="853" y="566" width="12" height="3" fill="#f0b8c8" opacity="0.72" transform="rotate(125 853 566)"/><rect x="906" y="349" width="8" height="3" fill="#e0c0a0" opacity="0.84" transform="rotate(143 906 349)"/><rect x="639" y="671" width="9" height="4" fill="#e0c0a0" opacity="0.98" transform="rotate(144 639 671)"/><rect x="1340" y="717" width="10" height="5" fill="#f0d890" opacity="0.79" transform="rotate(35 1340 717)"/><rect x="924" y="235" width="8" height="4" fill="#d0c8f0" opacity="0.71" transform="rotate(101 924 235)"/><rect x="1049" y="370" width="8" height="3" fill="#f0b8c8" opacity="0.72" transform="rotate(156 1049 370)"/><rect x="1056" y="469" width="12" height="3" fill="#d0c8f0" opacity="0.96" transform="rotate(74 1056 469)"/><rect x="1016" y="395" width="10" height="3" fill="#f0d890" opacity="0.81" transform="rotate(26 1016 395)"/><rect x="773" y="446" width="11" height="3" fill="#e0c0a0" opacity="0.77" transform="rotate(53 773 446)"/><rect x="888" y="221" width="9" height="3" fill="#e0c0a0" opacity="0.71" transform="rotate(17 888 221)"/><rect x="960" y="95" width="11" height="4" fill="#e8a8a0" opacity="0.92" transform="rotate(127 960 95)"/><rect x="1046" y="601" width="10" height="4" fill="#ffffff" opacity="0.95" transform="rotate(106 1046 601)"/><rect x="773" y="242" width="8" height="4" fill="#a8dcc0" opacity="0.80" transform="rotate(127 773 242)"/><rect x="873" y="431" width="9" height="4" fill="#f2e6d8" opacity="0.94" transform="rotate(167 873 431)"/><rect x="804" y="497" width="7" height="4" fill="#f2e6d8" opacity="0.71" transform="rotate(55 804 497)"/><rect x="762" y="727" width="10" height="4" fill="#a8dcc0" opacity="1.00" transform="rotate(102 762 727)"/><rect x="863" y="161" width="8" height="5" fill="#ffffff" opacity="0.98" transform="rotate(73 863 161)"/><rect x="1104" y="385" width="8" height="4" fill="#f0b8c8" opacity="0.83" transform="rotate(106 1104 385)"/><rect x="1012" y="739" width="9" height="4" fill="#f2e6d8" opacity="0.78" transform="rotate(134 1012 739)"/><rect x="953" y="150" width="9" height="4" fill="#f0b8c8" opacity="0.86" transform="rotate(154 953 150)"/><rect x="548" y="540" width="7" height="4" fill="#ffffff" opacity="0.83" transform="rotate(113 548 540)"/><rect x="864" y="400" width="11" height="5" fill="#f0b8c8" opacity="0.89" transform="rotate(145 864 400)"/><rect x="736" y="442" width="10" height="4" fill="#e0c0a0" opacity="0.76" transform="rotate(144 736 442)"/><rect x="1005" y="230" width="8" height="4" fill="#e0c0a0" opacity="0.91" transform="rotate(3 1005 230)"/><rect x="975" y="375" width="7" height="4" fill="#a0c8e0" opacity="0.74" transform="rotate(136 975 375)"/><rect x="1049" y="289" width="9" height="4" fill="#e8a8a0" opacity="0.79" transform="rotate(127 1049 289)"/><rect x="658" y="707" width="7" height="4" fill="#a0c8e0" opacity="0.99" transform="rotate(45 658 707)"/><rect x="1216" y="430" width="11" height="3" fill="#f2e6d8" opacity="0.73" transform="rotate(177 1216 430)"/><rect x="1147" y="299" width="11" height="5" fill="#f0b8c8" opacity="0.97" transform="rotate(63 1147 299)"/><rect x="1039" y="245" width="7" height="4" fill="#302840" opacity="0.89" transform="rotate(23 1039 245)"/><rect x="1080" y="496" width="8" height="3" fill="#f0b8c8" opacity="0.87" transform="rotate(94 1080 496)"/><rect x="1372" y="493" width="13" height="4" fill="#a8dcc0" opacity="0.86" transform="rotate(79 1372 493)"/><rect x="1154" y="646" width="12" height="3" fill="#f0d890" opacity="0.98" transform="rotate(114 1154 646)"/><rect x="1144" y="597" width="10" height="4" fill="#f0d890" opacity="0.73" transform="rotate(49 1144 597)"/><rect x="1038" y="515" width="6" height="4" fill="#f0d890" opacity="0.76" transform="rotate(62 1038 515)"/><rect x="1186" y="219" width="12" height="3" fill="#a0c8e0" opacity="0.89" transform="rotate(88 1186 219)"/><rect x="991" y="110" width="7" height="4" fill="#e0c0a0" opacity="0.82" transform="rotate(120 991 110)"/><rect x="1114" y="451" width="10" height="4" fill="#e0c0a0" opacity="0.76" transform="rotate(168 1114 451)"/><rect x="1163" y="146" width="12" height="3" fill="#e0c0a0" opacity="0.98" transform="rotate(7 1163 146)"/><rect x="921" y="309" width="9" height="5" fill="#a0c8e0" opacity="0.99" transform="rotate(167 921 309)"/><rect x="706" y="24" width="7" height="4" fill="#f2e6d8" opacity="1.00" transform="rotate(80 706 24)"/><rect x="991" y="19" width="11" height="4" fill="#e0c0a0" opacity="0.92" transform="rotate(19 991 19)"/><rect x="1129" y="475" width="11" height="4" fill="#302840" opacity="0.96" transform="rotate(5 1129 475)"/><rect x="664" y="124" width="12" height="5" fill="#f2e6d8" opacity="0.95" transform="rotate(28 664 124)"/><rect x="1268" y="148" width="12" height="5" fill="#ffffff" opacity="0.99" transform="rotate(162 1268 148)"/><rect x="1140" y="612" width="9" height="3" fill="#d0c8f0" opacity="0.82" transform="rotate(179 1140 612)"/><rect x="614" y="515" width="13" height="4" fill="#f0d890" opacity="0.83" transform="rotate(62 614 515)"/><rect x="1487" y="701" width="13" height="5" fill="#f0b8c8" opacity="0.70" transform="rotate(55 1487 701)"/><rect x="740" y="398" width="13" height="4" fill="#302840" opacity="0.82" transform="rotate(29 740 398)"/><rect x="455" y="713" width="13" height="3" fill="#f2e6d8" opacity="0.85" transform="rotate(9 455 713)"/><rect x="1302" y="432" width="8" height="4" fill="#302840" opacity="0.77" transform="rotate(121 1302 432)"/><rect x="846" y="84" width="13" height="5" fill="#e8a8a0" opacity="0.70" transform="rotate(159 846 84)"/><rect x="821" y="115" width="6" height="4" fill="#ffffff" opacity="0.72" transform="rotate(13 821 115)"/><rect x="783" y="696" width="11" height="4" fill="#302840" opacity="0.94" transform="rotate(112 783 696)"/><rect x="520" y="519" width="13" height="3" fill="#f0d890" opacity="0.98" transform="rotate(8 520 519)"/><rect x="1214" y="593" width="9" height="5" fill="#f0d890" opacity="0.85" transform="rotate(164 1214 593)"/><rect x="1189" y="678" width="7" height="4" fill="#a8dcc0" opacity="0.82" transform="rotate(145 1189 678)"/><rect x="789" y="284" width="12" height="4" fill="#a0c8e0" opacity="0.87" transform="rotate(89 789 284)"/><rect x="750" y="313" width="9" height="3" fill="#ffffff" opacity="0.82" transform="rotate(63 750 313)"/><rect x="944" y="605" width="11" height="5" fill="#a0c8e0" opacity="0.82" transform="rotate(32 944 605)"/><rect x="741" y="697" width="12" height="5" fill="#f0b8c8" opacity="0.87" transform="rotate(136 741 697)"/><rect x="719" y="628" width="8" height="4" fill="#302840" opacity="0.81" transform="rotate(134 719 628)"/><rect x="754" y="630" width="6" height="3" fill="#a0c8e0" opacity="0.94" transform="rotate(81 754 630)"/><rect x="1299" y="606" width="6" height="4" fill="#f2e6d8" opacity="0.71" transform="rotate(63 1299 606)"/><rect x="1110" y="229" width="13" height="4" fill="#d0c8f0" opacity="0.78" transform="rotate(26 1110 229)"/><rect x="1036" y="531" width="6" height="4" fill="#ffffff" opacity="0.78" transform="rotate(55 1036 531)"/><rect x="1233" y="695" width="8" height="5" fill="#f0d890" opacity="0.81" transform="rotate(44 1233 695)"/><rect x="865" y="274" width="12" height="5" fill="#302840" opacity="0.82" transform="rotate(84 865 274)"/><rect x="892" y="605" width="10" height="3" fill="#a8dcc0" opacity="0.95" transform="rotate(135 892 605)"/><rect x="1056" y="637" width="7" height="4" fill="#f0d890" opacity="0.73" transform="rotate(86 1056 637)"/><rect x="680" y="584" width="11" height="4" fill="#f0b8c8" opacity="0.80" transform="rotate(34 680 584)"/><rect x="1063" y="453" width="8" height="3" fill="#d0c8f0" opacity="0.89" transform="rotate(175 1063 453)"/><rect x="740" y="595" width="11" height="4" fill="#a8dcc0" opacity="0.88" transform="rotate(137 740 595)"/><rect x="1186" y="419" width="11" height="3" fill="#f0d890" opacity="0.71" transform="rotate(77 1186 419)"/><rect x="763" y="139" width="11" height="4" fill="#e8a8a0" opacity="0.88" transform="rotate(108 763 139)"/><rect x="927" y="40" width="11" height="3" fill="#f0d890" opacity="0.93" transform="rotate(136 927 40)"/><rect x="1257" y="461" width="13" height="4" fill="#a8dcc0" opacity="0.90" transform="rotate(54 1257 461)"/><rect x="1059" y="690" width="12" height="4" fill="#e0c0a0" opacity="0.96" transform="rotate(84 1059 690)"/><rect x="1021" y="612" width="11" height="4" fill="#d0c8f0" opacity="0.79" transform="rotate(123 1021 612)"/><rect x="1434" y="450" width="6" height="5" fill="#a8dcc0" opacity="0.96" transform="rotate(19 1434 450)"/><rect x="976" y="582" width="10" height="3" fill="#f2e6d8" opacity="0.76" transform="rotate(134 976 582)"/><rect x="849" y="328" width="7" height="4" fill="#f2e6d8" opacity="0.96" transform="rotate(126 849 328)"/><rect x="1319" y="635" width="12" height="5" fill="#f0b8c8" opacity="0.93" transform="rotate(40 1319 635)"/><rect x="897" y="142" width="9" height="3" fill="#d0c8f0" opacity="0.90" transform="rotate(147 897 142)"/><rect x="797" y="382" width="13" height="4" fill="#f2e6d8" opacity="0.72" transform="rotate(114 797 382)"/><rect x="1157" y="490" width="8" height="4" fill="#ffffff" opacity="1.00" transform="rotate(27 1157 490)"/><rect x="688" y="719" width="8" height="4" fill="#d0c8f0" opacity="0.92" transform="rotate(52 688 719)"/><rect x="1373" y="288" width="11" height="4" fill="#f2e6d8" opacity="0.95" transform="rotate(83 1373 288)"/><rect x="1325" y="246" width="11" height="3" fill="#d0c8f0" opacity="0.71" transform="rotate(136 1325 246)"/><rect x="1087" y="578" width="10" height="3" fill="#302840" opacity="0.97" transform="rotate(122 1087 578)"/><rect x="627" y="348" width="8" height="3" fill="#e8a8a0" opacity="0.97" transform="rotate(154 627 348)"/><rect x="1150" y="733" width="9" height="4" fill="#ffffff" opacity="0.85" transform="rotate(83 1150 733)"/><rect x="1114" y="357" width="11" height="3" fill="#302840" opacity="0.93" transform="rotate(21 1114 357)"/><rect x="1215" y="571" width="8" height="4" fill="#302840" opacity="0.90" transform="rotate(145 1215 571)"/><rect x="945" y="396" width="6" height="3" fill="#e0c0a0" opacity="0.84" transform="rotate(97 945 396)"/><rect x="1146" y="186" width="7" height="5" fill="#f0d890" opacity="0.81" transform="rotate(74 1146 186)"/><rect x="1154" y="557" width="8" height="5" fill="#e8a8a0" opacity="0.83" transform="rotate(71 1154 557)"/><rect x="704" y="436" width="7" height="3" fill="#e0c0a0" opacity="0.80" transform="rotate(155 704 436)"/><rect x="899" y="638" width="11" height="5" fill="#f0d890" opacity="0.98" transform="rotate(51 899 638)"/><rect x="1317" y="606" width="9" height="3" fill="#f0d890" opacity="0.97" transform="rotate(165 1317 606)"/><rect x="1202" y="201" width="9" height="4" fill="#f0b8c8" opacity="0.86" transform="rotate(134 1202 201)"/><rect x="822" y="625" width="12" height="3" fill="#d0c8f0" opacity="0.85" transform="rotate(101 822 625)"/><rect x="1063" y="217" width="10" height="4" fill="#f0b8c8" opacity="0.94" transform="rotate(120 1063 217)"/><rect x="1120" y="573" width="11" height="4" fill="#a0c8e0" opacity="0.86" transform="rotate(161 1120 573)"/><rect x="1093" y="393" width="7" height="4" fill="#d0c8f0" opacity="0.71" transform="rotate(99 1093 393)"/><rect x="1214" y="672" width="11" height="4" fill="#a0c8e0" opacity="0.92" transform="rotate(39 1214 672)"/><rect x="1080" y="686" width="8" height="4" fill="#a8dcc0" opacity="0.87" transform="rotate(30 1080 686)"/><rect x="1272" y="437" width="8" height="3" fill="#e8a8a0" opacity="0.74" transform="rotate(100 1272 437)"/><rect x="924" y="284" width="7" height="4" fill="#a0c8e0" opacity="0.85" transform="rotate(116 924 284)"/><rect x="753" y="672" width="9" height="5" fill="#f0d890" opacity="0.93" transform="rotate(165 753 672)"/><rect x="1355" y="564" width="10" height="4" fill="#e8a8a0" opacity="0.78" transform="rotate(6 1355 564)"/><rect x="675" y="735" width="6" height="3" fill="#f0d890" opacity="0.89" transform="rotate(134 675 735)"/><rect x="1034" y="248" width="8" height="4" fill="#d0c8f0" opacity="0.74" transform="rotate(139 1034 248)"/><rect x="997" y="371" width="10" height="3" fill="#f0b8c8" opacity="0.95" transform="rotate(11 997 371)"/><rect x="674" y="727" width="12" height="5" fill="#f0d890" opacity="0.75" transform="rotate(97 674 727)"/><rect x="1163" y="2" width="6" height="4" fill="#f0b8c8" opacity="0.99" transform="rotate(90 1163 2)"/><rect x="1197" y="696" width="7" height="5" fill="#302840" opacity="0.76" transform="rotate(153 1197 696)"/><rect x="1018" y="107" width="13" height="5" fill="#e8a8a0" opacity="0.98" transform="rotate(35 1018 107)"/><rect x="1081" y="712" width="11" height="4" fill="#f0d890" opacity="0.86" transform="rotate(157 1081 712)"/><rect x="962" y="141" width="13" height="4" fill="#e0c0a0" opacity="0.95" transform="rotate(78 962 141)"/><rect x="1026" y="317" width="7" height="5" fill="#302840" opacity="0.87" transform="rotate(94 1026 317)"/><rect x="675" y="707" width="10" height="4" fill="#f0b8c8" opacity="0.78" transform="rotate(17 675 707)"/><rect x="904" y="623" width="7" height="4" fill="#a0c8e0" opacity="0.88" transform="rotate(38 904 623)"/><rect x="1071" y="268" width="8" height="4" fill="#f0d890" opacity="0.86" transform="rotate(151 1071 268)"/><rect x="901" y="568" width="8" height="3" fill="#f2e6d8" opacity="0.80" transform="rotate(42 901 568)"/><rect x="1113" y="700" width="9" height="4" fill="#ffffff" opacity="0.80" transform="rotate(53 1113 700)"/><rect x="1104" y="276" width="7" height="4" fill="#e8a8a0" opacity="0.81" transform="rotate(2 1104 276)"/><rect x="961" y="271" width="9" height="4" fill="#ffffff" opacity="0.99" transform="rotate(143 961 271)"/><rect x="1075" y="450" width="8" height="4" fill="#e0c0a0" opacity="0.78" transform="rotate(119 1075 450)"/><rect x="1007" y="326" width="12" height="5" fill="#d0c8f0" opacity="0.74" transform="rotate(56 1007 326)"/><rect x="1189" y="739" width="11" height="4" fill="#f0b8c8" opacity="0.86" transform="rotate(177 1189 739)"/><rect x="1058" y="571" width="9" height="3" fill="#ffffff" opacity="0.75" transform="rotate(147 1058 571)"/><rect x="1016" y="559" width="12" height="3" fill="#e8a8a0" opacity="0.86" transform="rotate(93 1016 559)"/><rect x="724" y="648" width="9" height="4" fill="#e8a8a0" opacity="0.92" transform="rotate(87 724 648)"/><rect x="985" y="532" width="11" height="5" fill="#e8a8a0" opacity="0.85" transform="rotate(134 985 532)"/><rect x="879" y="96" width="9" height="4" fill="#d0c8f0" opacity="0.87" transform="rotate(101 879 96)"/><rect x="860" y="427" width="7" height="4" fill="#e8a8a0" opacity="0.78" transform="rotate(70 860 427)"/><rect x="939" y="374" width="10" height="5" fill="#f0d890" opacity="0.93" transform="rotate(87 939 374)"/><rect x="922" y="456" width="12" height="5" fill="#a8dcc0" opacity="0.74" transform="rotate(80 922 456)"/><rect x="965" y="259" width="11" height="3" fill="#a0c8e0" opacity="0.96" transform="rotate(31 965 259)"/><rect x="1045" y="454" width="12" height="5" fill="#d0c8f0" opacity="0.74" transform="rotate(31 1045 454)"/><rect x="964" y="53" width="7" height="4" fill="#f0b8c8" opacity="0.99" transform="rotate(25 964 53)"/><rect x="1046" y="521" width="7" height="3" fill="#ffffff" opacity="0.86" transform="rotate(30 1046 521)"/><rect x="1092" y="504" width="12" height="4" fill="#a0c8e0" opacity="0.92" transform="rotate(142 1092 504)"/><rect x="847" y="627" width="13" height="4" fill="#f0b8c8" opacity="0.95" transform="rotate(172 847 627)"/><rect x="799" y="378" width="12" height="4" fill="#ffffff" opacity="0.90" transform="rotate(159 799 378)"/><rect x="1183" y="45" width="11" height="5" fill="#e0c0a0" opacity="0.78" transform="rotate(107 1183 45)"/><rect x="995" y="309" width="9" height="3" fill="#f2e6d8" opacity="0.97" transform="rotate(132 995 309)"/><rect x="1153" y="448" width="7" height="4" fill="#e0c0a0" opacity="0.93" transform="rotate(29 1153 448)"/><rect x="803" y="278" width="9" height="3" fill="#f0b8c8" opacity="0.85" transform="rotate(120 803 278)"/><rect x="925" y="276" width="13" height="4" fill="#e0c0a0" opacity="0.88" transform="rotate(164 925 276)"/><rect x="827" y="320" width="12" height="5" fill="#f2e6d8" opacity="0.72" transform="rotate(165 827 320)"/><rect x="744" y="677" width="10" height="4" fill="#f0d890" opacity="0.99" transform="rotate(11 744 677)"/><rect x="957" y="400" width="7" height="4" fill="#f2e6d8" opacity="0.70" transform="rotate(19 957 400)"/><rect x="602" y="457" width="6" height="4" fill="#a0c8e0" opacity="0.94" transform="rotate(22 602 457)"/><rect x="773" y="510" width="10" height="3" fill="#e8a8a0" opacity="0.83" transform="rotate(11 773 510)"/><rect x="741" y="736" width="11" height="3" fill="#a0c8e0" opacity="0.89" transform="rotate(171 741 736)"/><rect x="965" y="491" width="12" height="4" fill="#d0c8f0" opacity="0.78" transform="rotate(168 965 491)"/><rect x="764" y="319" width="7" height="4" fill="#a0c8e0" opacity="0.91" transform="rotate(70 764 319)"/><rect x="950" y="97" width="10" height="3" fill="#302840" opacity="0.86" transform="rotate(180 950 97)"/><rect x="824" y="613" width="13" height="5" fill="#ffffff" opacity="0.87" transform="rotate(108 824 613)"/><rect x="1025" y="383" width="9" height="4" fill="#e8a8a0" opacity="0.99" transform="rotate(49 1025 383)"/><rect x="1179" y="503" width="8" height="4" fill="#302840" opacity="0.98" transform="rotate(47 1179 503)"/><rect x="1294" y="674" width="12" height="3" fill="#f2e6d8" opacity="0.75" transform="rotate(25 1294 674)"/><rect x="1168" y="370" width="8" height="3" fill="#f0d890" opacity="0.73" transform="rotate(89 1168 370)"/><rect x="817" y="640" width="9" height="4" fill="#ffffff" opacity="0.82" transform="rotate(114 817 640)"/><rect x="1242" y="459" width="11" height="4" fill="#f0d890" opacity="0.71" transform="rotate(132 1242 459)"/><rect x="799" y="442" width="9" height="5" fill="#a0c8e0" opacity="0.71" transform="rotate(175 799 442)"/><rect x="1094" y="376" width="6" height="3" fill="#d0c8f0" opacity="0.87" transform="rotate(146 1094 376)"/><rect x="697" y="289" width="7" height="4" fill="#302840" opacity="0.83" transform="rotate(135 697 289)"/><rect x="1163" y="227" width="12" height="3" fill="#f2e6d8" opacity="0.95" transform="rotate(119 1163 227)"/><rect x="1130" y="16" width="8" height="4" fill="#f0d890" opacity="0.76" transform="rotate(142 1130 16)"/><rect x="1164" y="275" width="11" height="4" fill="#a0c8e0" opacity="0.87" transform="rotate(99 1164 275)"/><rect x="1435" y="717" width="11" height="4" fill="#d0c8f0" opacity="0.76" transform="rotate(129 1435 717)"/><rect x="1195" y="173" width="8" height="3" fill="#a8dcc0" opacity="0.77" transform="rotate(78 1195 173)"/><rect x="1092" y="497" width="8" height="5" fill="#a8dcc0" opacity="0.91" transform="rotate(133 1092 497)"/><rect x="1003" y="86" width="11" height="3" fill="#f2e6d8" opacity="0.99" transform="rotate(51 1003 86)"/><rect x="1050" y="739" width="12" height="4" fill="#a0c8e0" opacity="0.98" transform="rotate(24 1050 739)"/><rect x="762" y="413" width="13" height="5" fill="#a0c8e0" opacity="0.97" transform="rotate(120 762 413)"/><rect x="797" y="452" width="10" height="4" fill="#d0c8f0" opacity="0.93" transform="rotate(137 797 452)"/><rect x="1213" y="706" width="7" height="4" fill="#ffffff" opacity="0.84" transform="rotate(17 1213 706)"/><rect x="864" y="507" width="10" height="4" fill="#e0c0a0" opacity="0.82" transform="rotate(10 864 507)"/><rect x="925" y="364" width="8" height="3" fill="#a0c8e0" opacity="0.74" transform="rotate(169 925 364)"/><rect x="877" y="319" width="12" height="4" fill="#a0c8e0" opacity="0.84" transform="rotate(20 877 319)"/><rect x="1145" y="480" width="12" height="4" fill="#f0d890" opacity="0.74" transform="rotate(141 1145 480)"/><rect x="974" y="257" width="9" height="5" fill="#f0d890" opacity="0.94" transform="rotate(74 974 257)"/><rect x="980" y="312" width="10" height="5" fill="#ffffff" opacity="0.81" transform="rotate(73 980 312)"/><rect x="1035" y="514" width="12" height="5" fill="#302840" opacity="0.76" transform="rotate(116 1035 514)"/><rect x="1029" y="368" width="9" height="3" fill="#a0c8e0" opacity="0.85" transform="rotate(156 1029 368)"/><rect x="913" y="596" width="13" height="4" fill="#e0c0a0" opacity="0.85" transform="rotate(81 913 596)"/><rect x="1088" y="47" width="12" height="5" fill="#d0c8f0" opacity="0.91" transform="rotate(55 1088 47)"/><rect x="715" y="493" width="9" height="3" fill="#f0b8c8" opacity="0.99" transform="rotate(176 715 493)"/><rect x="1053" y="449" width="12" height="4" fill="#e0c0a0" opacity="0.83" transform="rotate(37 1053 449)"/><rect x="701" y="644" width="7" height="4" fill="#f0d890" opacity="0.74" transform="rotate(110 701 644)"/><rect x="483" y="431" width="7" height="4" fill="#d0c8f0" opacity="0.74" transform="rotate(65 483 431)"/><rect x="1381" y="468" width="12" height="4" fill="#302840" opacity="0.85" transform="rotate(107 1381 468)"/><rect x="1108" y="3" width="13" height="4" fill="#a0c8e0" opacity="0.82" transform="rotate(82 1108 3)"/><rect x="1356" y="538" width="7" height="3" fill="#302840" opacity="0.74" transform="rotate(47 1356 538)"/></g><rect x="0" y="690" width="1995" height="441" fill="url(#crowdg)"/><g><path d="M1102 782 Q1102 733 1104 684" fill="none" stroke="#10122e" stroke-width="5.6" stroke-linecap="round"/><ellipse cx="1104" cy="677" rx="5.6" ry="7.8" fill="#10122e"/><path d="M1083 778 Q1085 708 1090 637" fill="none" stroke="#10122e" stroke-width="5.0" stroke-linecap="round"/><ellipse cx="1090" cy="630" rx="5.0" ry="7.0" fill="#10122e"/><path d="M869 795 Q875 739 888 682" fill="none" stroke="#10122e" stroke-width="7.2" stroke-linecap="round"/><ellipse cx="888" cy="675" rx="7.2" ry="10.0" fill="#10122e"/><path d="M1412 795 Q1411 735 1410 675" fill="none" stroke="#10122e" stroke-width="5.2" stroke-linecap="round"/><ellipse cx="1410" cy="668" rx="5.2" ry="7.3" fill="#10122e"/><path d="M831 775 Q837 703 851 630" fill="none" stroke="#10122e" stroke-width="6.6" stroke-linecap="round"/><ellipse cx="851" cy="623" rx="6.6" ry="9.2" fill="#10122e"/><path d="M1262 782 Q1259 715 1252 647" fill="none" stroke="#10122e" stroke-width="5.0" stroke-linecap="round"/><ellipse cx="1252" cy="640" rx="5.0" ry="7.0" fill="#10122e"/><path d="M1041 800 Q1049 738 1069 675" fill="none" stroke="#10122e" stroke-width="6.0" stroke-linecap="round"/><ellipse cx="1069" cy="668" rx="6.0" ry="8.4" fill="#10122e"/><path d="M794 771 Q790 711 780 651" fill="none" stroke="#10122e" stroke-width="5.3" stroke-linecap="round"/><ellipse cx="780" cy="644" rx="5.3" ry="7.4" fill="#10122e"/><path d="M848 803 Q846 731 842 659" fill="none" stroke="#10122e" stroke-width="5.6" stroke-linecap="round"/><ellipse cx="842" cy="652" rx="5.6" ry="7.8" fill="#10122e"/><path d="M1017 778 Q1012 712 1001 645" fill="none" stroke="#10122e" stroke-width="6.6" stroke-linecap="round"/><ellipse cx="1001" cy="638" rx="6.6" ry="9.2" fill="#10122e"/><path d="M1266 776 Q1267 723 1270 671" fill="none" stroke="#10122e" stroke-width="6.4" stroke-linecap="round"/><ellipse cx="1270" cy="664" rx="6.4" ry="9.0" fill="#10122e"/><path d="M1371 798 Q1371 736 1370 675" fill="none" stroke="#10122e" stroke-width="7.0" stroke-linecap="round"/><ellipse cx="1370" cy="668" rx="7.0" ry="9.8" fill="#10122e"/><path d="M1089 770 Q1081 711 1062 653" fill="none" stroke="#10122e" stroke-width="6.7" stroke-linecap="round"/><ellipse cx="1062" cy="646" rx="6.7" ry="9.3" fill="#10122e"/><path d="M1278 790 Q1276 744 1271 697" fill="none" stroke="#10122e" stroke-width="5.0" stroke-linecap="round"/><ellipse cx="1271" cy="690" rx="5.0" ry="7.1" fill="#10122e"/><path d="M1189 795 Q1193 743 1204 691" fill="none" stroke="#10122e" stroke-width="5.1" stroke-linecap="round"/><ellipse cx="1204" cy="684" rx="5.1" ry="7.2" fill="#10122e"/><path d="M693 802 Q696 749 704 697" fill="none" stroke="#10122e" stroke-width="7.3" stroke-linecap="round"/><ellipse cx="704" cy="690" rx="7.3" ry="10.3" fill="#10122e"/><path d="M1265 783 Q1263 723 1258 663" fill="none" stroke="#10122e" stroke-width="5.4" stroke-linecap="round"/><ellipse cx="1258" cy="656" rx="5.4" ry="7.5" fill="#10122e"/><path d="M1282 786 Q1282 714 1281 642" fill="none" stroke="#10122e" stroke-width="5.6" stroke-linecap="round"/><ellipse cx="1281" cy="635" rx="5.6" ry="7.8" fill="#10122e"/><path d="M798 770 Q798 700 798 629" fill="none" stroke="#10122e" stroke-width="6.0" stroke-linecap="round"/><ellipse cx="798" cy="622" rx="6.0" ry="8.3" fill="#10122e"/><path d="M1458 780 Q1452 722 1438 665" fill="none" stroke="#10122e" stroke-width="5.7" stroke-linecap="round"/><ellipse cx="1438" cy="658" rx="5.7" ry="8.0" fill="#10122e"/><path d="M788 785 Q788 726 786 666" fill="none" stroke="#10122e" stroke-width="7.1" stroke-linecap="round"/><ellipse cx="786" cy="659" rx="7.1" ry="9.9" fill="#10122e"/><path d="M883 789 Q892 726 914 663" fill="none" stroke="#10122e" stroke-width="6.5" stroke-linecap="round"/><ellipse cx="914" cy="656" rx="6.5" ry="9.1" fill="#10122e"/><path d="M1416 779 Q1410 728 1396 676" fill="none" stroke="#10122e" stroke-width="7.0" stroke-linecap="round"/><ellipse cx="1396" cy="669" rx="7.0" ry="9.9" fill="#10122e"/><path d="M665 777 Q656 702 634 627" fill="none" stroke="#10122e" stroke-width="6.8" stroke-linecap="round"/><ellipse cx="634" cy="620" rx="6.8" ry="9.5" fill="#10122e"/></g><g><ellipse cx="636" cy="722" rx="22" ry="26" fill="#2a4cc8" opacity="0.6"/><ellipse cx="1012" cy="742" rx="22" ry="26" fill="#2a4cc8" opacity="0.6"/><ellipse cx="395" cy="784" rx="22" ry="26" fill="#2a4cc8" opacity="0.6"/><ellipse cx="1026" cy="709" rx="22" ry="26" fill="#2a4cc8" opacity="0.6"/><ellipse cx="487" cy="731" rx="22" ry="26" fill="#2a4cc8" opacity="0.6"/><ellipse cx="1201" cy="799" rx="31" ry="35" fill="#2a4cc8" opacity="0.6"/><ellipse cx="2029" cy="776" rx="31" ry="35" fill="#2a4cc8" opacity="0.6"/><ellipse cx="1408" cy="803" rx="31" ry="35" fill="#2a4cc8" opacity="0.6"/><ellipse cx="9" cy="768" rx="31" ry="35" fill="#2a4cc8" opacity="0.6"/><ellipse cx="1778" cy="790" rx="31" ry="35" fill="#2a4cc8" opacity="0.6"/><ellipse cx="1806" cy="776" rx="31" ry="35" fill="#2a4cc8" opacity="0.6"/><ellipse cx="1773" cy="787" rx="31" ry="35" fill="#2a4cc8" opacity="0.6"/><ellipse cx="534" cy="760" rx="31" ry="35" fill="#2a4cc8" opacity="0.6"/><ellipse cx="1071" cy="757" rx="31" ry="35" fill="#2a4cc8" opacity="0.6"/><ellipse cx="1282" cy="790" rx="31" ry="35" fill="#2a4cc8" opacity="0.6"/><ellipse cx="842" cy="806" rx="31" ry="35" fill="#2a4cc8" opacity="0.6"/><ellipse cx="744" cy="767" rx="31" ry="35" fill="#2a4cc8" opacity="0.6"/><ellipse cx="261" cy="797" rx="31" ry="35" fill="#2a4cc8" opacity="0.6"/><ellipse cx="1510" cy="772" rx="31" ry="35" fill="#2a4cc8" opacity="0.6"/><ellipse cx="1525" cy="753" rx="31" ry="35" fill="#2a4cc8" opacity="0.6"/><ellipse cx="376" cy="806" rx="31" ry="35" fill="#2a4cc8" opacity="0.6"/><ellipse cx="929" cy="798" rx="31" ry="35" fill="#2a4cc8" opacity="0.6"/><ellipse cx="421" cy="784" rx="31" ry="35" fill="#2a4cc8" opacity="0.6"/><ellipse cx="1484" cy="802" rx="31" ry="35" fill="#2a4cc8" opacity="0.6"/><ellipse cx="49" cy="775" rx="31" ry="35" fill="#2a4cc8" opacity="0.6"/><ellipse cx="1189" cy="775" rx="31" ry="35" fill="#2a4cc8" opacity="0.6"/><ellipse cx="1245" cy="804" rx="31" ry="35" fill="#2a4cc8" opacity="0.6"/><ellipse cx="254" cy="780" rx="31" ry="35" fill="#2a4cc8" opacity="0.6"/><ellipse cx="1702" cy="759" rx="31" ry="35" fill="#2a4cc8" opacity="0.6"/><ellipse cx="1104" cy="767" rx="31" ry="35" fill="#2a4cc8" opacity="0.6"/><ellipse cx="1976" cy="808" rx="31" ry="35" fill="#2a4cc8" opacity="0.6"/><ellipse cx="298" cy="800" rx="31" ry="35" fill="#2a4cc8" opacity="0.6"/><ellipse cx="1978" cy="764" rx="31" ry="35" fill="#2a4cc8" opacity="0.6"/><ellipse cx="1818" cy="802" rx="31" ry="35" fill="#2a4cc8" opacity="0.6"/><ellipse cx="1721" cy="809" rx="31" ry="35" fill="#2a4cc8" opacity="0.6"/><ellipse cx="1793" cy="764" rx="31" ry="35" fill="#2a4cc8" opacity="0.6"/><ellipse cx="990" cy="753" rx="31" ry="35" fill="#2a4cc8" opacity="0.6"/><ellipse cx="1790" cy="811" rx="31" ry="35" fill="#2a4cc8" opacity="0.6"/><ellipse cx="1038" cy="760" rx="31" ry="35" fill="#2a4cc8" opacity="0.6"/><ellipse cx="660" cy="826" rx="43" ry="49" fill="#2a4cc8" opacity="0.6"/><ellipse cx="185" cy="843" rx="43" ry="49" fill="#2a4cc8" opacity="0.6"/><ellipse cx="1278" cy="863" rx="43" ry="49" fill="#2a4cc8" opacity="0.6"/><ellipse cx="654" cy="868" rx="43" ry="49" fill="#2a4cc8" opacity="0.6"/><ellipse cx="2038" cy="855" rx="43" ry="49" fill="#2a4cc8" opacity="0.6"/><ellipse cx="302" cy="860" rx="43" ry="49" fill="#2a4cc8" opacity="0.6"/><ellipse cx="1804" cy="823" rx="43" ry="49" fill="#2a4cc8" opacity="0.6"/><ellipse cx="762" cy="858" rx="43" ry="49" fill="#2a4cc8" opacity="0.6"/><ellipse cx="1143" cy="815" rx="43" ry="49" fill="#2a4cc8" opacity="0.6"/><ellipse cx="932" cy="862" rx="43" ry="49" fill="#2a4cc8" opacity="0.6"/><ellipse cx="47" cy="844" rx="43" ry="49" fill="#2a4cc8" opacity="0.6"/><ellipse cx="24" cy="819" rx="43" ry="49" fill="#2a4cc8" opacity="0.6"/><ellipse cx="848" cy="828" rx="43" ry="49" fill="#2a4cc8" opacity="0.6"/><ellipse cx="565" cy="842" rx="43" ry="49" fill="#2a4cc8" opacity="0.6"/><ellipse cx="1991" cy="832" rx="43" ry="49" fill="#2a4cc8" opacity="0.6"/><ellipse cx="1957" cy="843" rx="43" ry="49" fill="#2a4cc8" opacity="0.6"/><ellipse cx="98" cy="868" rx="43" ry="49" fill="#2a4cc8" opacity="0.6"/><ellipse cx="1657" cy="866" rx="43" ry="49" fill="#2a4cc8" opacity="0.6"/><ellipse cx="1890" cy="816" rx="43" ry="49" fill="#2a4cc8" opacity="0.6"/><ellipse cx="1556" cy="849" rx="43" ry="49" fill="#2a4cc8" opacity="0.6"/><ellipse cx="456" cy="852" rx="43" ry="49" fill="#2a4cc8" opacity="0.6"/><ellipse cx="141" cy="839" rx="43" ry="49" fill="#2a4cc8" opacity="0.6"/><ellipse cx="894" cy="829" rx="43" ry="49" fill="#2a4cc8" opacity="0.6"/><ellipse cx="1782" cy="857" rx="43" ry="49" fill="#2a4cc8" opacity="0.6"/><ellipse cx="-42" cy="864" rx="43" ry="49" fill="#2a4cc8" opacity="0.6"/><ellipse cx="12" cy="849" rx="43" ry="49" fill="#2a4cc8" opacity="0.6"/><ellipse cx="1979" cy="860" rx="43" ry="49" fill="#2a4cc8" opacity="0.6"/><ellipse cx="1596" cy="929" rx="57" ry="66" fill="#2a4cc8" opacity="0.6"/><ellipse cx="1477" cy="904" rx="57" ry="66" fill="#2a4cc8" opacity="0.6"/><ellipse cx="483" cy="912" rx="57" ry="66" fill="#2a4cc8" opacity="0.6"/><ellipse cx="634" cy="901" rx="57" ry="66" fill="#2a4cc8" opacity="0.6"/><ellipse cx="160" cy="900" rx="57" ry="66" fill="#2a4cc8" opacity="0.6"/><ellipse cx="1445" cy="919" rx="57" ry="66" fill="#2a4cc8" opacity="0.6"/><ellipse cx="-28" cy="895" rx="57" ry="66" fill="#2a4cc8" opacity="0.6"/><ellipse cx="1352" cy="881" rx="57" ry="66" fill="#2a4cc8" opacity="0.6"/><ellipse cx="655" cy="901" rx="57" ry="66" fill="#2a4cc8" opacity="0.6"/><ellipse cx="1733" cy="883" rx="57" ry="66" fill="#2a4cc8" opacity="0.6"/><ellipse cx="839" cy="913" rx="57" ry="66" fill="#2a4cc8" opacity="0.6"/><ellipse cx="58" cy="901" rx="57" ry="66" fill="#2a4cc8" opacity="0.6"/><ellipse cx="1221" cy="930" rx="57" ry="66" fill="#2a4cc8" opacity="0.6"/><ellipse cx="1089" cy="904" rx="57" ry="66" fill="#2a4cc8" opacity="0.6"/><ellipse cx="352" cy="903" rx="57" ry="66" fill="#2a4cc8" opacity="0.6"/><ellipse cx="962" cy="882" rx="57" ry="66" fill="#2a4cc8" opacity="0.6"/><ellipse cx="359" cy="935" rx="57" ry="66" fill="#2a4cc8" opacity="0.6"/><ellipse cx="694" cy="881" rx="57" ry="66" fill="#2a4cc8" opacity="0.6"/><ellipse cx="1401" cy="935" rx="57" ry="66" fill="#2a4cc8" opacity="0.6"/><ellipse cx="1388" cy="924" rx="57" ry="66" fill="#2a4cc8" opacity="0.6"/><ellipse cx="49" cy="907" rx="57" ry="66" fill="#2a4cc8" opacity="0.6"/><ellipse cx="1239" cy="922" rx="57" ry="66" fill="#2a4cc8" opacity="0.6"/><ellipse cx="1654" cy="993" rx="73" ry="84" fill="#2a4cc8" opacity="0.6"/><ellipse cx="1071" cy="982" rx="73" ry="84" fill="#2a4cc8" opacity="0.6"/><ellipse cx="1138" cy="1001" rx="73" ry="84" fill="#2a4cc8" opacity="0.6"/><ellipse cx="1029" cy="1007" rx="73" ry="84" fill="#2a4cc8" opacity="0.6"/><ellipse cx="240" cy="958" rx="73" ry="84" fill="#2a4cc8" opacity="0.6"/><ellipse cx="135" cy="977" rx="73" ry="84" fill="#2a4cc8" opacity="0.6"/><ellipse cx="40" cy="961" rx="73" ry="84" fill="#2a4cc8" opacity="0.6"/><ellipse cx="838" cy="1001" rx="73" ry="84" fill="#2a4cc8" opacity="0.6"/><ellipse cx="1324" cy="1006" rx="73" ry="84" fill="#2a4cc8" opacity="0.6"/><ellipse cx="986" cy="962" rx="73" ry="84" fill="#2a4cc8" opacity="0.6"/><ellipse cx="492" cy="995" rx="73" ry="84" fill="#2a4cc8" opacity="0.6"/><ellipse cx="2028" cy="962" rx="73" ry="84" fill="#2a4cc8" opacity="0.6"/><ellipse cx="1299" cy="957" rx="73" ry="84" fill="#2a4cc8" opacity="0.6"/><ellipse cx="185" cy="952" rx="73" ry="84" fill="#2a4cc8" opacity="0.6"/><ellipse cx="744" cy="963" rx="73" ry="84" fill="#2a4cc8" opacity="0.6"/><ellipse cx="1579" cy="952" rx="73" ry="84" fill="#2a4cc8" opacity="0.6"/><ellipse cx="681" cy="1004" rx="73" ry="84" fill="#2a4cc8" opacity="0.6"/><ellipse cx="1222" cy="953" rx="73" ry="84" fill="#2a4cc8" opacity="0.6"/><ellipse cx="988" cy="1076" rx="92" ry="105" fill="#2a4cc8" opacity="0.6"/><ellipse cx="943" cy="1039" rx="92" ry="105" fill="#2a4cc8" opacity="0.6"/><ellipse cx="691" cy="1040" rx="92" ry="105" fill="#2a4cc8" opacity="0.6"/><ellipse cx="696" cy="1067" rx="92" ry="105" fill="#2a4cc8" opacity="0.6"/><ellipse cx="2050" cy="1079" rx="92" ry="105" fill="#2a4cc8" opacity="0.6"/><ellipse cx="908" cy="1073" rx="92" ry="105" fill="#2a4cc8" opacity="0.6"/><ellipse cx="1834" cy="1087" rx="92" ry="105" fill="#2a4cc8" opacity="0.6"/><ellipse cx="630" cy="1087" rx="92" ry="105" fill="#2a4cc8" opacity="0.6"/><ellipse cx="1508" cy="1077" rx="92" ry="105" fill="#2a4cc8" opacity="0.6"/><ellipse cx="959" cy="1048" rx="92" ry="105" fill="#2a4cc8" opacity="0.6"/><ellipse cx="745" cy="1064" rx="92" ry="105" fill="#2a4cc8" opacity="0.6"/><ellipse cx="1221" cy="1042" rx="92" ry="105" fill="#2a4cc8" opacity="0.6"/><ellipse cx="1759" cy="1133" rx="110" ry="126" fill="#2a4cc8" opacity="0.6"/><ellipse cx="1342" cy="1126" rx="110" ry="126" fill="#2a4cc8" opacity="0.6"/><ellipse cx="1447" cy="1125" rx="110" ry="126" fill="#2a4cc8" opacity="0.6"/><ellipse cx="2000" cy="1119" rx="110" ry="126" fill="#2a4cc8" opacity="0.6"/><ellipse cx="704" cy="1143" rx="110" ry="126" fill="#2a4cc8" opacity="0.6"/><ellipse cx="1210" cy="1117" rx="110" ry="126" fill="#2a4cc8" opacity="0.6"/><ellipse cx="1398" cy="1143" rx="110" ry="126" fill="#2a4cc8" opacity="0.6"/><ellipse cx="219" cy="1127" rx="110" ry="126" fill="#2a4cc8" opacity="0.6"/><ellipse cx="1091" cy="1169" rx="110" ry="126" fill="#2a4cc8" opacity="0.6"/><ellipse cx="358" cy="1144" rx="110" ry="126" fill="#2a4cc8" opacity="0.6"/><ellipse cx="-43" cy="1143" rx="110" ry="126" fill="#2a4cc8" opacity="0.6"/></g><g><ellipse cx="773" cy="760" rx="42" ry="26" fill="#080820"/><ellipse cx="773" cy="718" rx="22" ry="25" fill="#0a0a24"/><ellipse cx="1762" cy="785" rx="42" ry="26" fill="#080820"/><ellipse cx="1762" cy="743" rx="22" ry="25" fill="#0a0a24"/><ellipse cx="1116" cy="751" rx="42" ry="26" fill="#080820"/><ellipse cx="1116" cy="709" rx="22" ry="25" fill="#0a0a24"/><ellipse cx="634" cy="766" rx="42" ry="26" fill="#080820"/><ellipse cx="634" cy="724" rx="22" ry="25" fill="#0a0a24"/><ellipse cx="975" cy="780" rx="42" ry="26" fill="#080820"/><ellipse cx="975" cy="739" rx="22" ry="25" fill="#0a0a24"/><ellipse cx="1425" cy="778" rx="42" ry="26" fill="#080820"/><ellipse cx="1425" cy="736" rx="22" ry="25" fill="#0a0a24"/><ellipse cx="1890" cy="824" rx="42" ry="26" fill="#080820"/><ellipse cx="1890" cy="782" rx="22" ry="25" fill="#0a0a24"/><ellipse cx="676" cy="785" rx="42" ry="26" fill="#080820"/><ellipse cx="676" cy="743" rx="22" ry="25" fill="#0a0a24"/><ellipse cx="905" cy="762" rx="42" ry="26" fill="#080820"/><ellipse cx="905" cy="720" rx="22" ry="25" fill="#0a0a24"/><ellipse cx="158" cy="810" rx="42" ry="26" fill="#080820"/><ellipse cx="158" cy="768" rx="22" ry="25" fill="#0a0a24"/><ellipse cx="2022" cy="788" rx="42" ry="26" fill="#080820"/><ellipse cx="2022" cy="746" rx="22" ry="25" fill="#0a0a24"/><ellipse cx="122" cy="778" rx="42" ry="26" fill="#080820"/><ellipse cx="122" cy="736" rx="22" ry="25" fill="#0a0a24"/><ellipse cx="674" cy="769" rx="42" ry="26" fill="#080820"/><ellipse cx="674" cy="727" rx="22" ry="25" fill="#0a0a24"/><ellipse cx="1425" cy="758" rx="42" ry="26" fill="#080820"/><ellipse cx="1425" cy="716" rx="22" ry="25" fill="#0a0a24"/><ellipse cx="-10" cy="827" rx="42" ry="26" fill="#080820"/><ellipse cx="-10" cy="786" rx="22" ry="25" fill="#0a0a24"/><ellipse cx="880" cy="777" rx="42" ry="26" fill="#080820"/><ellipse cx="880" cy="735" rx="22" ry="25" fill="#0a0a24"/><ellipse cx="1883" cy="803" rx="42" ry="26" fill="#080820"/><ellipse cx="1883" cy="761" rx="22" ry="25" fill="#0a0a24"/><ellipse cx="1789" cy="811" rx="42" ry="26" fill="#080820"/><ellipse cx="1789" cy="770" rx="22" ry="25" fill="#0a0a24"/><ellipse cx="192" cy="790" rx="42" ry="26" fill="#080820"/><ellipse cx="192" cy="748" rx="22" ry="25" fill="#0a0a24"/><ellipse cx="1026" cy="763" rx="42" ry="26" fill="#080820"/><ellipse cx="1026" cy="721" rx="22" ry="25" fill="#0a0a24"/><ellipse cx="384" cy="795" rx="42" ry="26" fill="#080820"/><ellipse cx="384" cy="753" rx="22" ry="25" fill="#0a0a24"/><ellipse cx="613" cy="789" rx="42" ry="26" fill="#080820"/><ellipse cx="613" cy="748" rx="22" ry="25" fill="#0a0a24"/><ellipse cx="1628" cy="793" rx="42" ry="26" fill="#080820"/><ellipse cx="1628" cy="751" rx="22" ry="25" fill="#0a0a24"/><ellipse cx="1709" cy="796" rx="42" ry="26" fill="#080820"/><ellipse cx="1709" cy="754" rx="22" ry="25" fill="#0a0a24"/><ellipse cx="1907" cy="785" rx="42" ry="26" fill="#080820"/><ellipse cx="1907" cy="743" rx="22" ry="25" fill="#0a0a24"/><ellipse cx="1787" cy="786" rx="42" ry="26" fill="#080820"/><ellipse cx="1787" cy="744" rx="22" ry="25" fill="#0a0a24"/><ellipse cx="583" cy="796" rx="42" ry="26" fill="#080820"/><ellipse cx="583" cy="754" rx="22" ry="25" fill="#0a0a24"/><ellipse cx="1942" cy="824" rx="42" ry="26" fill="#080820"/><ellipse cx="1942" cy="783" rx="22" ry="25" fill="#0a0a24"/><ellipse cx="-33" cy="809" rx="42" ry="26" fill="#080820"/><ellipse cx="-33" cy="767" rx="22" ry="25" fill="#0a0a24"/><ellipse cx="567" cy="802" rx="42" ry="26" fill="#080820"/><ellipse cx="567" cy="760" rx="22" ry="25" fill="#0a0a24"/><ellipse cx="1061" cy="760" rx="42" ry="26" fill="#080820"/><ellipse cx="1061" cy="719" rx="22" ry="25" fill="#0a0a24"/><ellipse cx="1075" cy="756" rx="42" ry="26" fill="#080820"/><ellipse cx="1075" cy="714" rx="22" ry="25" fill="#0a0a24"/><ellipse cx="529" cy="755" rx="42" ry="26" fill="#080820"/><ellipse cx="529" cy="713" rx="22" ry="25" fill="#0a0a24"/><ellipse cx="830" cy="795" rx="42" ry="26" fill="#080820"/><ellipse cx="830" cy="753" rx="22" ry="25" fill="#0a0a24"/><ellipse cx="1115" cy="790" rx="42" ry="26" fill="#080820"/><ellipse cx="1115" cy="748" rx="22" ry="25" fill="#0a0a24"/><ellipse cx="287" cy="779" rx="42" ry="26" fill="#080820"/><ellipse cx="287" cy="737" rx="22" ry="25" fill="#0a0a24"/><ellipse cx="265" cy="819" rx="42" ry="26" fill="#080820"/><ellipse cx="265" cy="778" rx="22" ry="25" fill="#0a0a24"/><ellipse cx="695" cy="752" rx="42" ry="26" fill="#080820"/><ellipse cx="695" cy="710" rx="22" ry="25" fill="#0a0a24"/><ellipse cx="709" cy="763" rx="42" ry="26" fill="#080820"/><ellipse cx="709" cy="721" rx="22" ry="25" fill="#0a0a24"/><ellipse cx="537" cy="790" rx="42" ry="26" fill="#080820"/><ellipse cx="537" cy="748" rx="22" ry="25" fill="#0a0a24"/><ellipse cx="1010" cy="786" rx="42" ry="26" fill="#080820"/><ellipse cx="1010" cy="744" rx="22" ry="25" fill="#0a0a24"/><ellipse cx="1676" cy="817" rx="42" ry="26" fill="#080820"/><ellipse cx="1676" cy="775" rx="22" ry="25" fill="#0a0a24"/><ellipse cx="64" cy="776" rx="42" ry="26" fill="#080820"/><ellipse cx="64" cy="734" rx="22" ry="25" fill="#0a0a24"/><ellipse cx="29" cy="808" rx="42" ry="26" fill="#080820"/><ellipse cx="29" cy="766" rx="22" ry="25" fill="#0a0a24"/><ellipse cx="1335" cy="774" rx="42" ry="26" fill="#080820"/><ellipse cx="1335" cy="732" rx="22" ry="25" fill="#0a0a24"/><ellipse cx="923" cy="792" rx="42" ry="26" fill="#080820"/><ellipse cx="923" cy="750" rx="22" ry="25" fill="#0a0a24"/><ellipse cx="510" cy="776" rx="42" ry="26" fill="#080820"/><ellipse cx="510" cy="735" rx="22" ry="25" fill="#0a0a24"/><ellipse cx="1237" cy="770" rx="42" ry="26" fill="#080820"/><ellipse cx="1237" cy="729" rx="22" ry="25" fill="#0a0a24"/><ellipse cx="394" cy="827" rx="42" ry="26" fill="#080820"/><ellipse cx="394" cy="785" rx="22" ry="25" fill="#0a0a24"/><ellipse cx="1664" cy="778" rx="42" ry="26" fill="#080820"/><ellipse cx="1664" cy="736" rx="22" ry="25" fill="#0a0a24"/><ellipse cx="841" cy="801" rx="42" ry="26" fill="#080820"/><ellipse cx="841" cy="760" rx="22" ry="25" fill="#0a0a24"/><ellipse cx="1020" cy="794" rx="42" ry="26" fill="#080820"/><ellipse cx="1020" cy="752" rx="22" ry="25" fill="#0a0a24"/><ellipse cx="1471" cy="807" rx="42" ry="26" fill="#080820"/><ellipse cx="1471" cy="765" rx="22" ry="25" fill="#0a0a24"/><ellipse cx="470" cy="766" rx="42" ry="26" fill="#080820"/><ellipse cx="470" cy="725" rx="22" ry="25" fill="#0a0a24"/><ellipse cx="1531" cy="806" rx="42" ry="26" fill="#080820"/><ellipse cx="1531" cy="764" rx="22" ry="25" fill="#0a0a24"/><ellipse cx="1595" cy="808" rx="42" ry="26" fill="#080820"/><ellipse cx="1595" cy="767" rx="22" ry="25" fill="#0a0a24"/><ellipse cx="1787" cy="820" rx="42" ry="26" fill="#080820"/><ellipse cx="1787" cy="778" rx="22" ry="25" fill="#0a0a24"/><ellipse cx="419" cy="796" rx="42" ry="26" fill="#080820"/><ellipse cx="419" cy="754" rx="22" ry="25" fill="#0a0a24"/><ellipse cx="606" cy="796" rx="42" ry="26" fill="#080820"/><ellipse cx="606" cy="754" rx="22" ry="25" fill="#0a0a24"/><ellipse cx="1441" cy="799" rx="42" ry="26" fill="#080820"/><ellipse cx="1441" cy="757" rx="22" ry="25" fill="#0a0a24"/><ellipse cx="1151" cy="783" rx="42" ry="26" fill="#080820"/><ellipse cx="1151" cy="741" rx="22" ry="25" fill="#0a0a24"/><ellipse cx="1744" cy="784" rx="42" ry="26" fill="#080820"/><ellipse cx="1744" cy="743" rx="22" ry="25" fill="#0a0a24"/><ellipse cx="1766" cy="803" rx="42" ry="26" fill="#080820"/><ellipse cx="1766" cy="761" rx="22" ry="25" fill="#0a0a24"/><ellipse cx="345" cy="827" rx="42" ry="26" fill="#080820"/><ellipse cx="345" cy="785" rx="22" ry="25" fill="#0a0a24"/><ellipse cx="1773" cy="795" rx="42" ry="26" fill="#080820"/><ellipse cx="1773" cy="753" rx="22" ry="25" fill="#0a0a24"/><ellipse cx="1024" cy="752" rx="42" ry="26" fill="#080820"/><ellipse cx="1024" cy="711" rx="22" ry="25" fill="#0a0a24"/><ellipse cx="1200" cy="768" rx="42" ry="26" fill="#080820"/><ellipse cx="1200" cy="726" rx="22" ry="25" fill="#0a0a24"/><ellipse cx="1558" cy="812" rx="42" ry="26" fill="#080820"/><ellipse cx="1558" cy="770" rx="22" ry="25" fill="#0a0a24"/><ellipse cx="452" cy="782" rx="42" ry="26" fill="#080820"/><ellipse cx="452" cy="740" rx="22" ry="25" fill="#0a0a24"/><ellipse cx="485" cy="775" rx="42" ry="26" fill="#080820"/><ellipse cx="485" cy="733" rx="22" ry="25" fill="#0a0a24"/><ellipse cx="1367" cy="773" rx="42" ry="26" fill="#080820"/><ellipse cx="1367" cy="731" rx="22" ry="25" fill="#0a0a24"/><ellipse cx="1446" cy="795" rx="42" ry="26" fill="#080820"/><ellipse cx="1446" cy="753" rx="22" ry="25" fill="#0a0a24"/><ellipse cx="-45" cy="807" rx="42" ry="26" fill="#080820"/><ellipse cx="-45" cy="765" rx="22" ry="25" fill="#0a0a24"/><ellipse cx="125" cy="820" rx="42" ry="26" fill="#080820"/><ellipse cx="125" cy="778" rx="22" ry="25" fill="#0a0a24"/><ellipse cx="1434" cy="748" rx="42" ry="26" fill="#080820"/><ellipse cx="1434" cy="706" rx="22" ry="25" fill="#0a0a24"/><ellipse cx="31" cy="869" rx="57" ry="36" fill="#06061a"/><ellipse cx="31" cy="812" rx="30" ry="34" fill="#08081e"/><ellipse cx="1200" cy="858" rx="57" ry="36" fill="#06061a"/><ellipse cx="1200" cy="801" rx="30" ry="34" fill="#08081e"/><ellipse cx="2027" cy="835" rx="57" ry="36" fill="#06061a"/><ellipse cx="2027" cy="778" rx="30" ry="34" fill="#08081e"/><ellipse cx="-35" cy="817" rx="57" ry="36" fill="#06061a"/><ellipse cx="-35" cy="760" rx="30" ry="34" fill="#08081e"/><ellipse cx="1006" cy="856" rx="57" ry="36" fill="#06061a"/><ellipse cx="1006" cy="799" rx="30" ry="34" fill="#08081e"/><ellipse cx="1406" cy="862" rx="57" ry="36" fill="#06061a"/><ellipse cx="1406" cy="805" rx="30" ry="34" fill="#08081e"/><ellipse cx="757" cy="847" rx="57" ry="36" fill="#06061a"/><ellipse cx="757" cy="790" rx="30" ry="34" fill="#08081e"/><ellipse cx="7" cy="827" rx="57" ry="36" fill="#06061a"/><ellipse cx="7" cy="770" rx="30" ry="34" fill="#08081e"/><ellipse cx="1776" cy="849" rx="57" ry="36" fill="#06061a"/><ellipse cx="1776" cy="792" rx="30" ry="34" fill="#08081e"/><ellipse cx="1141" cy="830" rx="57" ry="36" fill="#06061a"/><ellipse cx="1141" cy="773" rx="30" ry="34" fill="#08081e"/><ellipse cx="1804" cy="835" rx="57" ry="36" fill="#06061a"/><ellipse cx="1804" cy="778" rx="30" ry="34" fill="#08081e"/><ellipse cx="1612" cy="823" rx="57" ry="36" fill="#06061a"/><ellipse cx="1612" cy="766" rx="30" ry="34" fill="#08081e"/><ellipse cx="1772" cy="846" rx="57" ry="36" fill="#06061a"/><ellipse cx="1772" cy="789" rx="30" ry="34" fill="#08081e"/><ellipse cx="532" cy="819" rx="57" ry="36" fill="#06061a"/><ellipse cx="532" cy="762" rx="30" ry="34" fill="#08081e"/><ellipse cx="1069" cy="816" rx="57" ry="36" fill="#06061a"/><ellipse cx="1069" cy="759" rx="30" ry="34" fill="#08081e"/><ellipse cx="272" cy="823" rx="57" ry="36" fill="#06061a"/><ellipse cx="272" cy="766" rx="30" ry="34" fill="#08081e"/><ellipse cx="1280" cy="849" rx="57" ry="36" fill="#06061a"/><ellipse cx="1280" cy="792" rx="30" ry="34" fill="#08081e"/><ellipse cx="840" cy="865" rx="57" ry="36" fill="#06061a"/><ellipse cx="840" cy="808" rx="30" ry="34" fill="#08081e"/><ellipse cx="743" cy="827" rx="57" ry="36" fill="#06061a"/><ellipse cx="743" cy="770" rx="30" ry="34" fill="#08081e"/><ellipse cx="259" cy="856" rx="57" ry="36" fill="#06061a"/><ellipse cx="259" cy="799" rx="30" ry="34" fill="#08081e"/><ellipse cx="2029" cy="831" rx="57" ry="36" fill="#06061a"/><ellipse cx="2029" cy="774" rx="30" ry="34" fill="#08081e"/><ellipse cx="1573" cy="816" rx="57" ry="36" fill="#06061a"/><ellipse cx="1573" cy="759" rx="30" ry="34" fill="#08081e"/><ellipse cx="1508" cy="831" rx="57" ry="36" fill="#06061a"/><ellipse cx="1508" cy="774" rx="30" ry="34" fill="#08081e"/><ellipse cx="1082" cy="820" rx="57" ry="36" fill="#06061a"/><ellipse cx="1082" cy="763" rx="30" ry="34" fill="#08081e"/><ellipse cx="45" cy="844" rx="57" ry="36" fill="#06061a"/><ellipse cx="45" cy="787" rx="30" ry="34" fill="#08081e"/><ellipse cx="1453" cy="815" rx="57" ry="36" fill="#06061a"/><ellipse cx="1453" cy="758" rx="30" ry="34" fill="#08081e"/><ellipse cx="1524" cy="812" rx="57" ry="36" fill="#06061a"/><ellipse cx="1524" cy="755" rx="30" ry="34" fill="#08081e"/><ellipse cx="374" cy="865" rx="57" ry="36" fill="#06061a"/><ellipse cx="374" cy="808" rx="30" ry="34" fill="#08081e"/><ellipse cx="781" cy="825" rx="57" ry="36" fill="#06061a"/><ellipse cx="781" cy="768" rx="30" ry="34" fill="#08081e"/><ellipse cx="927" cy="857" rx="57" ry="36" fill="#06061a"/><ellipse cx="927" cy="800" rx="30" ry="34" fill="#08081e"/><ellipse cx="419" cy="843" rx="57" ry="36" fill="#06061a"/><ellipse cx="419" cy="786" rx="30" ry="34" fill="#08081e"/><ellipse cx="1482" cy="861" rx="57" ry="36" fill="#06061a"/><ellipse cx="1482" cy="804" rx="30" ry="34" fill="#08081e"/><ellipse cx="47" cy="834" rx="57" ry="36" fill="#06061a"/><ellipse cx="47" cy="777" rx="30" ry="34" fill="#08081e"/><ellipse cx="1740" cy="869" rx="57" ry="36" fill="#06061a"/><ellipse cx="1740" cy="812" rx="30" ry="34" fill="#08081e"/><ellipse cx="1188" cy="834" rx="57" ry="36" fill="#06061a"/><ellipse cx="1188" cy="777" rx="30" ry="34" fill="#08081e"/><ellipse cx="1243" cy="863" rx="57" ry="36" fill="#06061a"/><ellipse cx="1243" cy="806" rx="30" ry="34" fill="#08081e"/><ellipse cx="252" cy="839" rx="57" ry="36" fill="#06061a"/><ellipse cx="252" cy="782" rx="30" ry="34" fill="#08081e"/><ellipse cx="601" cy="843" rx="57" ry="36" fill="#06061a"/><ellipse cx="601" cy="786" rx="30" ry="34" fill="#08081e"/><ellipse cx="2033" cy="859" rx="57" ry="36" fill="#06061a"/><ellipse cx="2033" cy="802" rx="30" ry="34" fill="#08081e"/><ellipse cx="637" cy="823" rx="57" ry="36" fill="#06061a"/><ellipse cx="637" cy="766" rx="30" ry="34" fill="#08081e"/><ellipse cx="804" cy="861" rx="57" ry="36" fill="#06061a"/><ellipse cx="804" cy="804" rx="30" ry="34" fill="#08081e"/><ellipse cx="-56" cy="862" rx="57" ry="36" fill="#06061a"/><ellipse cx="-56" cy="805" rx="30" ry="34" fill="#08081e"/><ellipse cx="1721" cy="828" rx="57" ry="36" fill="#06061a"/><ellipse cx="1721" cy="771" rx="30" ry="34" fill="#08081e"/><ellipse cx="1700" cy="818" rx="57" ry="36" fill="#06061a"/><ellipse cx="1700" cy="761" rx="30" ry="34" fill="#08081e"/><ellipse cx="1102" cy="826" rx="57" ry="36" fill="#06061a"/><ellipse cx="1102" cy="769" rx="30" ry="34" fill="#08081e"/><ellipse cx="1974" cy="867" rx="57" ry="36" fill="#06061a"/><ellipse cx="1974" cy="810" rx="30" ry="34" fill="#08081e"/><ellipse cx="296" cy="859" rx="57" ry="36" fill="#06061a"/><ellipse cx="296" cy="802" rx="30" ry="34" fill="#08081e"/><ellipse cx="1976" cy="823" rx="57" ry="36" fill="#06061a"/><ellipse cx="1976" cy="766" rx="30" ry="34" fill="#08081e"/><ellipse cx="1816" cy="862" rx="57" ry="36" fill="#06061a"/><ellipse cx="1816" cy="805" rx="30" ry="34" fill="#08081e"/><ellipse cx="1162" cy="869" rx="57" ry="36" fill="#06061a"/><ellipse cx="1162" cy="812" rx="30" ry="34" fill="#08081e"/><ellipse cx="1719" cy="868" rx="57" ry="36" fill="#06061a"/><ellipse cx="1719" cy="811" rx="30" ry="34" fill="#08081e"/><ellipse cx="1446" cy="863" rx="57" ry="36" fill="#06061a"/><ellipse cx="1446" cy="806" rx="30" ry="34" fill="#08081e"/><ellipse cx="1719" cy="857" rx="57" ry="36" fill="#06061a"/><ellipse cx="1719" cy="800" rx="30" ry="34" fill="#08081e"/><ellipse cx="1791" cy="823" rx="57" ry="36" fill="#06061a"/><ellipse cx="1791" cy="766" rx="30" ry="34" fill="#08081e"/><ellipse cx="988" cy="812" rx="57" ry="36" fill="#06061a"/><ellipse cx="988" cy="755" rx="30" ry="34" fill="#08081e"/><ellipse cx="1788" cy="871" rx="57" ry="36" fill="#06061a"/><ellipse cx="1788" cy="814" rx="30" ry="34" fill="#08081e"/><ellipse cx="1036" cy="819" rx="57" ry="36" fill="#06061a"/><ellipse cx="1036" cy="762" rx="30" ry="34" fill="#08081e"/><ellipse cx="1917" cy="831" rx="57" ry="36" fill="#06061a"/><ellipse cx="1917" cy="774" rx="30" ry="34" fill="#08081e"/><ellipse cx="905" cy="921" rx="80" ry="50" fill="#050514"/><ellipse cx="905" cy="841" rx="42" ry="48" fill="#060618"/><ellipse cx="658" cy="909" rx="80" ry="50" fill="#050514"/><ellipse cx="658" cy="829" rx="42" ry="48" fill="#060618"/><ellipse cx="456" cy="945" rx="80" ry="50" fill="#050514"/><ellipse cx="456" cy="865" rx="42" ry="48" fill="#060618"/><ellipse cx="182" cy="926" rx="80" ry="50" fill="#050514"/><ellipse cx="182" cy="846" rx="42" ry="48" fill="#060618"/><ellipse cx="1275" cy="946" rx="80" ry="50" fill="#050514"/><ellipse cx="1275" cy="866" rx="42" ry="48" fill="#060618"/><ellipse cx="633" cy="944" rx="80" ry="50" fill="#050514"/><ellipse cx="633" cy="865" rx="42" ry="48" fill="#060618"/><ellipse cx="651" cy="950" rx="80" ry="50" fill="#050514"/><ellipse cx="651" cy="871" rx="42" ry="48" fill="#060618"/><ellipse cx="2035" cy="938" rx="80" ry="50" fill="#050514"/><ellipse cx="2035" cy="858" rx="42" ry="48" fill="#060618"/><ellipse cx="299" cy="943" rx="80" ry="50" fill="#050514"/><ellipse cx="299" cy="863" rx="42" ry="48" fill="#060618"/><ellipse cx="1252" cy="946" rx="80" ry="50" fill="#050514"/><ellipse cx="1252" cy="866" rx="42" ry="48" fill="#060618"/><ellipse cx="1801" cy="905" rx="80" ry="50" fill="#050514"/><ellipse cx="1801" cy="826" rx="42" ry="48" fill="#060618"/><ellipse cx="1833" cy="910" rx="80" ry="50" fill="#050514"/><ellipse cx="1833" cy="830" rx="42" ry="48" fill="#060618"/><ellipse cx="760" cy="941" rx="80" ry="50" fill="#050514"/><ellipse cx="760" cy="861" rx="42" ry="48" fill="#060618"/><ellipse cx="1024" cy="902" rx="80" ry="50" fill="#050514"/><ellipse cx="1024" cy="822" rx="42" ry="48" fill="#060618"/><ellipse cx="842" cy="896" rx="80" ry="50" fill="#050514"/><ellipse cx="842" cy="816" rx="42" ry="48" fill="#060618"/><ellipse cx="657" cy="908" rx="80" ry="50" fill="#050514"/><ellipse cx="657" cy="829" rx="42" ry="48" fill="#060618"/><ellipse cx="1140" cy="897" rx="80" ry="50" fill="#050514"/><ellipse cx="1140" cy="818" rx="42" ry="48" fill="#060618"/><ellipse cx="929" cy="945" rx="80" ry="50" fill="#050514"/><ellipse cx="929" cy="865" rx="42" ry="48" fill="#060618"/><ellipse cx="45" cy="927" rx="80" ry="50" fill="#050514"/><ellipse cx="45" cy="847" rx="42" ry="48" fill="#060618"/><ellipse cx="21" cy="901" rx="80" ry="50" fill="#050514"/><ellipse cx="21" cy="821" rx="42" ry="48" fill="#060618"/><ellipse cx="846" cy="911" rx="80" ry="50" fill="#050514"/><ellipse cx="846" cy="831" rx="42" ry="48" fill="#060618"/><ellipse cx="563" cy="925" rx="80" ry="50" fill="#050514"/><ellipse cx="563" cy="845" rx="42" ry="48" fill="#060618"/><ellipse cx="1989" cy="915" rx="80" ry="50" fill="#050514"/><ellipse cx="1989" cy="835" rx="42" ry="48" fill="#060618"/><ellipse cx="1955" cy="926" rx="80" ry="50" fill="#050514"/><ellipse cx="1955" cy="846" rx="42" ry="48" fill="#060618"/><ellipse cx="950" cy="954" rx="80" ry="50" fill="#050514"/><ellipse cx="950" cy="874" rx="42" ry="48" fill="#060618"/><ellipse cx="95" cy="950" rx="80" ry="50" fill="#050514"/><ellipse cx="95" cy="871" rx="42" ry="48" fill="#060618"/><ellipse cx="111" cy="920" rx="80" ry="50" fill="#050514"/><ellipse cx="111" cy="840" rx="42" ry="48" fill="#060618"/><ellipse cx="1642" cy="951" rx="80" ry="50" fill="#050514"/><ellipse cx="1642" cy="871" rx="42" ry="48" fill="#060618"/><ellipse cx="1189" cy="900" rx="80" ry="50" fill="#050514"/><ellipse cx="1189" cy="820" rx="42" ry="48" fill="#060618"/><ellipse cx="1654" cy="949" rx="80" ry="50" fill="#050514"/><ellipse cx="1654" cy="869" rx="42" ry="48" fill="#060618"/><ellipse cx="1434" cy="898" rx="80" ry="50" fill="#050514"/><ellipse cx="1434" cy="818" rx="42" ry="48" fill="#060618"/><ellipse cx="1887" cy="899" rx="80" ry="50" fill="#050514"/><ellipse cx="1887" cy="819" rx="42" ry="48" fill="#060618"/><ellipse cx="1553" cy="932" rx="80" ry="50" fill="#050514"/><ellipse cx="1553" cy="852" rx="42" ry="48" fill="#060618"/><ellipse cx="1999" cy="899" rx="80" ry="50" fill="#050514"/><ellipse cx="1999" cy="819" rx="42" ry="48" fill="#060618"/><ellipse cx="453" cy="934" rx="80" ry="50" fill="#050514"/><ellipse cx="453" cy="854" rx="42" ry="48" fill="#060618"/><ellipse cx="1563" cy="913" rx="80" ry="50" fill="#050514"/><ellipse cx="1563" cy="834" rx="42" ry="48" fill="#060618"/><ellipse cx="482" cy="942" rx="80" ry="50" fill="#050514"/><ellipse cx="482" cy="862" rx="42" ry="48" fill="#060618"/><ellipse cx="139" cy="921" rx="80" ry="50" fill="#050514"/><ellipse cx="139" cy="842" rx="42" ry="48" fill="#060618"/><ellipse cx="891" cy="912" rx="80" ry="50" fill="#050514"/><ellipse cx="891" cy="832" rx="42" ry="48" fill="#060618"/><ellipse cx="1779" cy="939" rx="80" ry="50" fill="#050514"/><ellipse cx="1779" cy="860" rx="42" ry="48" fill="#060618"/><ellipse cx="969" cy="920" rx="80" ry="50" fill="#050514"/><ellipse cx="969" cy="840" rx="42" ry="48" fill="#060618"/><ellipse cx="-44" cy="947" rx="80" ry="50" fill="#050514"/><ellipse cx="-44" cy="867" rx="42" ry="48" fill="#060618"/><ellipse cx="10" cy="932" rx="80" ry="50" fill="#050514"/><ellipse cx="10" cy="852" rx="42" ry="48" fill="#060618"/><ellipse cx="1977" cy="943" rx="80" ry="50" fill="#050514"/><ellipse cx="1977" cy="863" rx="42" ry="48" fill="#060618"/><ellipse cx="1593" cy="1040" rx="106" ry="67" fill="#04040f"/><ellipse cx="1593" cy="933" rx="56" ry="64" fill="#050512"/><ellipse cx="614" cy="1026" rx="106" ry="67" fill="#04040f"/><ellipse cx="614" cy="919" rx="56" ry="64" fill="#050512"/><ellipse cx="1251" cy="996" rx="106" ry="67" fill="#04040f"/><ellipse cx="1251" cy="890" rx="56" ry="64" fill="#050512"/><ellipse cx="1474" cy="1014" rx="106" ry="67" fill="#04040f"/><ellipse cx="1474" cy="908" rx="56" ry="64" fill="#050512"/><ellipse cx="480" cy="1022" rx="106" ry="67" fill="#04040f"/><ellipse cx="480" cy="916" rx="56" ry="64" fill="#050512"/><ellipse cx="630" cy="1011" rx="106" ry="67" fill="#04040f"/><ellipse cx="630" cy="905" rx="56" ry="64" fill="#050512"/><ellipse cx="537" cy="1013" rx="106" ry="67" fill="#04040f"/><ellipse cx="537" cy="907" rx="56" ry="64" fill="#050512"/><ellipse cx="156" cy="1010" rx="106" ry="67" fill="#04040f"/><ellipse cx="156" cy="903" rx="56" ry="64" fill="#050512"/><ellipse cx="1441" cy="1029" rx="106" ry="67" fill="#04040f"/><ellipse cx="1441" cy="923" rx="56" ry="64" fill="#050512"/><ellipse cx="-31" cy="1005" rx="106" ry="67" fill="#04040f"/><ellipse cx="-31" cy="899" rx="56" ry="64" fill="#050512"/><ellipse cx="1349" cy="991" rx="106" ry="67" fill="#04040f"/><ellipse cx="1349" cy="885" rx="56" ry="64" fill="#050512"/><ellipse cx="1470" cy="989" rx="106" ry="67" fill="#04040f"/><ellipse cx="1470" cy="882" rx="56" ry="64" fill="#050512"/><ellipse cx="651" cy="1011" rx="106" ry="67" fill="#04040f"/><ellipse cx="651" cy="905" rx="56" ry="64" fill="#050512"/><ellipse cx="1624" cy="1041" rx="106" ry="67" fill="#04040f"/><ellipse cx="1624" cy="935" rx="56" ry="64" fill="#050512"/><ellipse cx="1730" cy="993" rx="106" ry="67" fill="#04040f"/><ellipse cx="1730" cy="887" rx="56" ry="64" fill="#050512"/><ellipse cx="-3" cy="1032" rx="106" ry="67" fill="#04040f"/><ellipse cx="-3" cy="925" rx="56" ry="64" fill="#050512"/><ellipse cx="836" cy="1024" rx="106" ry="67" fill="#04040f"/><ellipse cx="836" cy="917" rx="56" ry="64" fill="#050512"/><ellipse cx="55" cy="1011" rx="106" ry="67" fill="#04040f"/><ellipse cx="55" cy="905" rx="56" ry="64" fill="#050512"/><ellipse cx="1217" cy="1040" rx="106" ry="67" fill="#04040f"/><ellipse cx="1217" cy="934" rx="56" ry="64" fill="#050512"/><ellipse cx="1086" cy="1014" rx="106" ry="67" fill="#04040f"/><ellipse cx="1086" cy="908" rx="56" ry="64" fill="#050512"/><ellipse cx="348" cy="1013" rx="106" ry="67" fill="#04040f"/><ellipse cx="348" cy="907" rx="56" ry="64" fill="#050512"/><ellipse cx="1370" cy="1004" rx="106" ry="67" fill="#04040f"/><ellipse cx="1370" cy="898" rx="56" ry="64" fill="#050512"/><ellipse cx="388" cy="998" rx="106" ry="67" fill="#04040f"/><ellipse cx="388" cy="891" rx="56" ry="64" fill="#050512"/><ellipse cx="1781" cy="1017" rx="106" ry="67" fill="#04040f"/><ellipse cx="1781" cy="911" rx="56" ry="64" fill="#050512"/><ellipse cx="1075" cy="993" rx="106" ry="67" fill="#04040f"/><ellipse cx="1075" cy="887" rx="56" ry="64" fill="#050512"/><ellipse cx="959" cy="993" rx="106" ry="67" fill="#04040f"/><ellipse cx="959" cy="886" rx="56" ry="64" fill="#050512"/><ellipse cx="356" cy="1045" rx="106" ry="67" fill="#04040f"/><ellipse cx="356" cy="939" rx="56" ry="64" fill="#050512"/><ellipse cx="691" cy="991" rx="106" ry="67" fill="#04040f"/><ellipse cx="691" cy="885" rx="56" ry="64" fill="#050512"/><ellipse cx="1004" cy="990" rx="106" ry="67" fill="#04040f"/><ellipse cx="1004" cy="884" rx="56" ry="64" fill="#050512"/><ellipse cx="1564" cy="1007" rx="106" ry="67" fill="#04040f"/><ellipse cx="1564" cy="900" rx="56" ry="64" fill="#050512"/><ellipse cx="1398" cy="1046" rx="106" ry="67" fill="#04040f"/><ellipse cx="1398" cy="939" rx="56" ry="64" fill="#050512"/><ellipse cx="1384" cy="1034" rx="106" ry="67" fill="#04040f"/><ellipse cx="1384" cy="928" rx="56" ry="64" fill="#050512"/><ellipse cx="46" cy="1017" rx="106" ry="67" fill="#04040f"/><ellipse cx="46" cy="911" rx="56" ry="64" fill="#050512"/><ellipse cx="1236" cy="1032" rx="106" ry="67" fill="#04040f"/><ellipse cx="1236" cy="926" rx="56" ry="64" fill="#050512"/><ellipse cx="1649" cy="1135" rx="137" ry="86" fill="#03030c"/><ellipse cx="1649" cy="998" rx="72" ry="83" fill="#04040e"/><ellipse cx="431" cy="1119" rx="137" ry="86" fill="#03030c"/><ellipse cx="431" cy="982" rx="72" ry="83" fill="#04040e"/><ellipse cx="1067" cy="1124" rx="137" ry="86" fill="#03030c"/><ellipse cx="1067" cy="987" rx="72" ry="83" fill="#04040e"/><ellipse cx="1525" cy="1093" rx="137" ry="86" fill="#03030c"/><ellipse cx="1525" cy="956" rx="72" ry="83" fill="#04040e"/><ellipse cx="1133" cy="1143" rx="137" ry="86" fill="#03030c"/><ellipse cx="1133" cy="1006" rx="72" ry="83" fill="#04040e"/><ellipse cx="1025" cy="1149" rx="137" ry="86" fill="#03030c"/><ellipse cx="1025" cy="1012" rx="72" ry="83" fill="#04040e"/><ellipse cx="1247" cy="1108" rx="137" ry="86" fill="#03030c"/><ellipse cx="1247" cy="972" rx="72" ry="83" fill="#04040e"/><ellipse cx="235" cy="1100" rx="137" ry="86" fill="#03030c"/><ellipse cx="235" cy="963" rx="72" ry="83" fill="#04040e"/><ellipse cx="882" cy="1140" rx="137" ry="86" fill="#03030c"/><ellipse cx="882" cy="1003" rx="72" ry="83" fill="#04040e"/><ellipse cx="131" cy="1119" rx="137" ry="86" fill="#03030c"/><ellipse cx="131" cy="983" rx="72" ry="83" fill="#04040e"/><ellipse cx="876" cy="1108" rx="137" ry="86" fill="#03030c"/><ellipse cx="876" cy="971" rx="72" ry="83" fill="#04040e"/><ellipse cx="35" cy="1103" rx="137" ry="86" fill="#03030c"/><ellipse cx="35" cy="966" rx="72" ry="83" fill="#04040e"/><ellipse cx="834" cy="1142" rx="137" ry="86" fill="#03030c"/><ellipse cx="834" cy="1006" rx="72" ry="83" fill="#04040e"/><ellipse cx="1320" cy="1147" rx="137" ry="86" fill="#03030c"/><ellipse cx="1320" cy="1011" rx="72" ry="83" fill="#04040e"/><ellipse cx="981" cy="1104" rx="137" ry="86" fill="#03030c"/><ellipse cx="981" cy="967" rx="72" ry="83" fill="#04040e"/><ellipse cx="488" cy="1137" rx="137" ry="86" fill="#03030c"/><ellipse cx="488" cy="1000" rx="72" ry="83" fill="#04040e"/><ellipse cx="2024" cy="1104" rx="137" ry="86" fill="#03030c"/><ellipse cx="2024" cy="967" rx="72" ry="83" fill="#04040e"/><ellipse cx="1295" cy="1099" rx="137" ry="86" fill="#03030c"/><ellipse cx="1295" cy="962" rx="72" ry="83" fill="#04040e"/><ellipse cx="648" cy="1132" rx="137" ry="86" fill="#03030c"/><ellipse cx="648" cy="995" rx="72" ry="83" fill="#04040e"/><ellipse cx="547" cy="1126" rx="137" ry="86" fill="#03030c"/><ellipse cx="547" cy="989" rx="72" ry="83" fill="#04040e"/><ellipse cx="180" cy="1094" rx="137" ry="86" fill="#03030c"/><ellipse cx="180" cy="957" rx="72" ry="83" fill="#04040e"/><ellipse cx="1952" cy="1148" rx="137" ry="86" fill="#03030c"/><ellipse cx="1952" cy="1011" rx="72" ry="83" fill="#04040e"/><ellipse cx="740" cy="1105" rx="137" ry="86" fill="#03030c"/><ellipse cx="740" cy="968" rx="72" ry="83" fill="#04040e"/><ellipse cx="1575" cy="1094" rx="137" ry="86" fill="#03030c"/><ellipse cx="1575" cy="957" rx="72" ry="83" fill="#04040e"/><ellipse cx="395" cy="1129" rx="137" ry="86" fill="#03030c"/><ellipse cx="395" cy="992" rx="72" ry="83" fill="#04040e"/><ellipse cx="676" cy="1146" rx="137" ry="86" fill="#03030c"/><ellipse cx="676" cy="1009" rx="72" ry="83" fill="#04040e"/><ellipse cx="566" cy="1101" rx="137" ry="86" fill="#03030c"/><ellipse cx="566" cy="964" rx="72" ry="83" fill="#04040e"/><ellipse cx="1217" cy="1095" rx="137" ry="86" fill="#03030c"/><ellipse cx="1217" cy="958" rx="72" ry="83" fill="#04040e"/><ellipse cx="1529" cy="1245" rx="171" ry="108" fill="#030309"/><ellipse cx="1529" cy="1074" rx="90" ry="103" fill="#03030b"/><ellipse cx="1206" cy="1232" rx="171" ry="108" fill="#030309"/><ellipse cx="1206" cy="1061" rx="90" ry="103" fill="#03030b"/><ellipse cx="983" cy="1253" rx="171" ry="108" fill="#030309"/><ellipse cx="983" cy="1082" rx="90" ry="103" fill="#03030b"/><ellipse cx="860" cy="1212" rx="171" ry="108" fill="#030309"/><ellipse cx="860" cy="1041" rx="90" ry="103" fill="#03030b"/><ellipse cx="938" cy="1216" rx="171" ry="108" fill="#030309"/><ellipse cx="938" cy="1045" rx="90" ry="103" fill="#03030b"/><ellipse cx="686" cy="1217" rx="171" ry="108" fill="#030309"/><ellipse cx="686" cy="1046" rx="90" ry="103" fill="#03030b"/><ellipse cx="691" cy="1244" rx="171" ry="108" fill="#030309"/><ellipse cx="691" cy="1073" rx="90" ry="103" fill="#03030b"/><ellipse cx="2045" cy="1257" rx="171" ry="108" fill="#030309"/><ellipse cx="2045" cy="1086" rx="90" ry="103" fill="#03030b"/><ellipse cx="903" cy="1250" rx="171" ry="108" fill="#030309"/><ellipse cx="903" cy="1079" rx="90" ry="103" fill="#03030b"/><ellipse cx="1829" cy="1264" rx="171" ry="108" fill="#030309"/><ellipse cx="1829" cy="1093" rx="90" ry="103" fill="#03030b"/><ellipse cx="625" cy="1264" rx="171" ry="108" fill="#030309"/><ellipse cx="625" cy="1093" rx="90" ry="103" fill="#03030b"/><ellipse cx="1503" cy="1254" rx="171" ry="108" fill="#030309"/><ellipse cx="1503" cy="1083" rx="90" ry="103" fill="#03030b"/><ellipse cx="954" cy="1226" rx="171" ry="108" fill="#030309"/><ellipse cx="954" cy="1055" rx="90" ry="103" fill="#03030b"/><ellipse cx="1360" cy="1207" rx="171" ry="108" fill="#030309"/><ellipse cx="1360" cy="1036" rx="90" ry="103" fill="#03030b"/><ellipse cx="1906" cy="1265" rx="171" ry="108" fill="#030309"/><ellipse cx="1906" cy="1094" rx="90" ry="103" fill="#03030b"/><ellipse cx="740" cy="1241" rx="171" ry="108" fill="#030309"/><ellipse cx="740" cy="1070" rx="90" ry="103" fill="#03030b"/><ellipse cx="1513" cy="1265" rx="171" ry="108" fill="#030309"/><ellipse cx="1513" cy="1094" rx="90" ry="103" fill="#03030b"/><ellipse cx="1109" cy="1238" rx="171" ry="108" fill="#030309"/><ellipse cx="1109" cy="1067" rx="90" ry="103" fill="#03030b"/><ellipse cx="781" cy="1248" rx="171" ry="108" fill="#030309"/><ellipse cx="781" cy="1077" rx="90" ry="103" fill="#03030b"/><ellipse cx="1215" cy="1220" rx="171" ry="108" fill="#030309"/><ellipse cx="1215" cy="1049" rx="90" ry="103" fill="#03030b"/><ellipse cx="865" cy="1238" rx="171" ry="108" fill="#030309"/><ellipse cx="865" cy="1067" rx="90" ry="103" fill="#03030b"/><ellipse cx="651" cy="1264" rx="171" ry="108" fill="#030309"/><ellipse cx="651" cy="1093" rx="90" ry="103" fill="#03030b"/><ellipse cx="1753" cy="1346" rx="205" ry="130" fill="#020207"/><ellipse cx="1753" cy="1140" rx="108" ry="124" fill="#030308"/><ellipse cx="1628" cy="1357" rx="205" ry="130" fill="#020207"/><ellipse cx="1628" cy="1152" rx="108" ry="124" fill="#030308"/><ellipse cx="27" cy="1349" rx="205" ry="130" fill="#020207"/><ellipse cx="27" cy="1144" rx="108" ry="124" fill="#030308"/><ellipse cx="1336" cy="1339" rx="205" ry="130" fill="#020207"/><ellipse cx="1336" cy="1134" rx="108" ry="124" fill="#030308"/><ellipse cx="1441" cy="1337" rx="205" ry="130" fill="#020207"/><ellipse cx="1441" cy="1132" rx="108" ry="124" fill="#030308"/><ellipse cx="1993" cy="1331" rx="205" ry="130" fill="#020207"/><ellipse cx="1993" cy="1126" rx="108" ry="124" fill="#030308"/><ellipse cx="1995" cy="1374" rx="205" ry="130" fill="#020207"/><ellipse cx="1995" cy="1169" rx="108" ry="124" fill="#030308"/><ellipse cx="915" cy="1364" rx="205" ry="130" fill="#020207"/><ellipse cx="915" cy="1159" rx="108" ry="124" fill="#030308"/><ellipse cx="698" cy="1355" rx="205" ry="130" fill="#020207"/><ellipse cx="698" cy="1150" rx="108" ry="124" fill="#030308"/><ellipse cx="170" cy="1364" rx="205" ry="130" fill="#020207"/><ellipse cx="170" cy="1159" rx="108" ry="124" fill="#030308"/><ellipse cx="612" cy="1345" rx="205" ry="130" fill="#020207"/><ellipse cx="612" cy="1140" rx="108" ry="124" fill="#030308"/><ellipse cx="1204" cy="1330" rx="205" ry="130" fill="#020207"/><ellipse cx="1204" cy="1125" rx="108" ry="124" fill="#030308"/><ellipse cx="1527" cy="1347" rx="205" ry="130" fill="#020207"/><ellipse cx="1527" cy="1142" rx="108" ry="124" fill="#030308"/><ellipse cx="1392" cy="1356" rx="205" ry="130" fill="#020207"/><ellipse cx="1392" cy="1151" rx="108" ry="124" fill="#030308"/><ellipse cx="212" cy="1340" rx="205" ry="130" fill="#020207"/><ellipse cx="212" cy="1135" rx="108" ry="124" fill="#030308"/><ellipse cx="1084" cy="1382" rx="205" ry="130" fill="#020207"/><ellipse cx="1084" cy="1177" rx="108" ry="124" fill="#030308"/><ellipse cx="351" cy="1357" rx="205" ry="130" fill="#020207"/><ellipse cx="351" cy="1152" rx="108" ry="124" fill="#030308"/><ellipse cx="-49" cy="1356" rx="205" ry="130" fill="#020207"/><ellipse cx="-49" cy="1150" rx="108" ry="124" fill="#030308"/></g></g></defs><g clip-path="url(#vclip)"><use href="#scene"/></g></svg>
<div style="position:absolute;left:620px;top:1794.14px;font-family:'Liberation Sans', sans-serif;font-size:40px;line-height:40px;color:#0f0f0f;font-weight:400;white-space:nowrap;will-change:transform;">Live konsert – Palm Springs</div>
<div style="position:absolute;left:2648px;top:703px;width:287px;height:166px;background:#ececec;border-radius:12px"></div>
<div style="position:absolute;left:2943px;top:707px;width:286px;height:32px;background:#ececec;border-radius:16.0px"></div>
<div style="position:absolute;left:2943px;top:745px;width:343px;height:32px;background:#ececec;border-radius:16.0px"></div>
<div style="position:absolute;left:2943px;top:782px;width:153px;height:26px;background:#ececec;border-radius:13.0px"></div>
<div style="position:absolute;left:2943px;top:813px;width:228px;height:26px;background:#ececec;border-radius:13.0px"></div>
<div style="position:absolute;left:2648px;top:883px;width:287px;height:166px;background:#ececec;border-radius:12px"></div>
<div style="position:absolute;left:2943px;top:887px;width:286px;height:32px;background:#ececec;border-radius:16.0px"></div>
<div style="position:absolute;left:2943px;top:925px;width:343px;height:32px;background:#ececec;border-radius:16.0px"></div>
<div style="position:absolute;left:2943px;top:962px;width:153px;height:26px;background:#ececec;border-radius:13.0px"></div>
<div style="position:absolute;left:2943px;top:993px;width:228px;height:26px;background:#ececec;border-radius:13.0px"></div>
<div style="position:absolute;left:2648px;top:1063px;width:287px;height:166px;background:#ececec;border-radius:12px"></div>
<div style="position:absolute;left:2943px;top:1067px;width:286px;height:32px;background:#ececec;border-radius:16.0px"></div>
<div style="position:absolute;left:2943px;top:1105px;width:343px;height:32px;background:#ececec;border-radius:16.0px"></div>
<div style="position:absolute;left:2943px;top:1142px;width:153px;height:26px;background:#ececec;border-radius:13.0px"></div>
<div style="position:absolute;left:2943px;top:1173px;width:228px;height:26px;background:#ececec;border-radius:13.0px"></div>
<div style="position:absolute;left:2648px;top:1243px;width:287px;height:166px;background:#ececec;border-radius:12px"></div>
<div style="position:absolute;left:2943px;top:1243px;width:287px;height:32px;background:#ececec;border-radius:16.0px"></div>
<div style="position:absolute;left:2943px;top:1280px;width:343px;height:32px;background:#ececec;border-radius:16.0px"></div>
<div style="position:absolute;left:2943px;top:1321px;width:152px;height:26px;background:#ececec;border-radius:13.0px"></div>
<div style="position:absolute;left:2943px;top:1355px;width:251px;height:26px;background:#ececec;border-radius:13.0px"></div>
<div style="position:absolute;left:2648px;top:1422px;width:287px;height:166px;background:#ececec;border-radius:12px"></div>
<div style="position:absolute;left:2943px;top:1432px;width:287px;height:32px;background:#ececec;border-radius:16.0px"></div>
<div style="position:absolute;left:2943px;top:1469px;width:208px;height:26px;background:#ececec;border-radius:13.0px"></div>
<div style="position:absolute;left:2648px;top:1601px;width:287px;height:166px;background:#ececec;border-radius:12px"></div>
<div style="position:absolute;left:2943px;top:1606px;width:355px;height:32px;background:#ececec;border-radius:16.0px"></div>
<div style="position:absolute;left:2943px;top:1644px;width:307px;height:32px;background:#ececec;border-radius:16.0px"></div>
<div style="position:absolute;left:2943px;top:1682px;width:152px;height:26px;background:#ececec;border-radius:13.0px"></div>
<div style="position:absolute;left:2943px;top:1713px;width:335px;height:26px;background:#ececec;border-radius:13.0px"></div>
<div style="position:absolute;left:2648px;top:1777px;width:287px;height:166px;background:#ececec;border-radius:12px"></div>
<div style="position:absolute;left:2943px;top:1777px;width:335px;height:32px;background:#ececec;border-radius:16.0px"></div>
<div style="position:absolute;left:2943px;top:1814px;width:307px;height:32px;background:#ececec;border-radius:16.0px"></div>
<div style="position:absolute;left:2943px;top:1853px;width:152px;height:26px;background:#ececec;border-radius:13.0px"></div>
<div style="position:absolute;left:496px;top:280px;width:2848px;height:1600px;background:rgba(32,33,36,0.5)"></div>
<div style="position:absolute;left:3116px;top:399px;width:114px;height:114px;background:#e8e9ed;border-radius:50%;box-shadow:0 4px 14px rgba(0,0,0,0.25)"></div>
<svg style="position:absolute;left:3138px;top:425px;" width="67.4" height="67.4" viewBox="0 0 24 24"><path d="M15 6H3v2h12V6zm0 4H3v2h12v-2zM3 16h8v-2H3v2zM17 6v8.18c-.31-.11-.65-.18-1-.18-1.66 0-3 1.34-3 3s1.34 3 3 3 3-1.34 3-3V8h3V6h-5z" fill="#000"/></svg>
<div style="position:absolute;left:652px;top:1602px;width:619px;height:121px;background:#202124;border-radius:60.5px"></div>
<svg style="position:absolute;left:718px;top:1635px;" width="54.8" height="54.8" viewBox="0 0 24 24"><path d="M21 3H3c-1.1 0-2 .9-2 2v3h2V5h18v14h-7v2h7c1.1 0 2-.9 2-2V5c0-1.1-.9-2-2-2zM1 18v3h3c0-1.66-1.34-3-3-3zm0-4v2c2.76 0 5 2.24 5 5h2c0-3.87-3.13-7-7-7zm0-4v2c4.97 0 9 4.03 9 9h2c0-6.08-4.93-11-11-11z" fill="#fff"/></svg>
<div style="position:absolute;left:805px;top:1645.03px;font-family:'Liberation Sans', sans-serif;font-size:36px;line-height:36px;color:#ffffff;font-weight:400;white-space:nowrap;will-change:transform;">Spiller av på en TV i stua</div>
<div style="position:absolute;left:2508px;top:557px;width:801px;height:471px;border-radius:16px;overflow:hidden;box-shadow:0 5px 22px rgba(0,0,0,0.28)"><div style="position:absolute;left:0px;top:0px;width:801px;height:264px;background:#060a14"></div><svg style="position:absolute;left:434px;top:0" width="367" height="264" viewBox="350 70 1286 929" preserveAspectRatio="xMidYMid slice"><use href="#scene"/></svg><div style="position:absolute;left:41px;top:39px;width:57px;height:16px;background:#d0d4f8;border-radius:8px"></div><div style="position:absolute;left:41px;top:88px;width:256px;height:16px;background:#d0d4f8;border-radius:8px"></div><div style="position:absolute;left:41px;top:115px;width:134px;height:18px;background:#d0d4f8;border-radius:9px"></div><svg style="position:absolute;left:0;top:182px" width="400" height="60" viewBox="0 0 400 60"><g fill="#d0d4f8" stroke="#d0d4f8" stroke-width="3" stroke-linejoin="round"><path d="M50 22.5 L66 12 L66 33 Z"/><path d="M70 22.5 L86 12 L86 33 Z"/><path d="M139 9 L161 22.5 L139 36 Z"/><path d="M209 12 L223 22.5 L209 33 Z"/><path d="M229 12 L243 22.5 L229 33 Z"/></g><rect x="276" y="-4" width="4" height="50" rx="2" fill="#d0d4f8"/><g fill="none" stroke="#d0d4f8" stroke-width="4"><path d="M328 -1 H351 V20"/><path d="M309 20 V34 H330"/><path d="M309 -1 L323 13"/><path d="M309 13 H324 V-1"/></g><rect x="334" y="23" width="19" height="13" fill="#d0d4f8"/></svg><div style="position:absolute;left:0px;top:264px;width:801px;height:207px;background:#ffffff"></div><div style="position:absolute;left:0px;top:369px;width:801px;height:1px;background:#646c82"></div><svg style="position:absolute;left:46px;top:298px;" width="48" height="38" viewBox="0 0 48 38"><rect x="2.5" y="2.5" width="42" height="33" rx="2.5" fill="none" stroke="#000" stroke-width="3.2"/><path d="M9 16.5H13M17 16.5H36M9 23.5H28M32 23.5H36" stroke="#000" stroke-width="3"/></svg><div style="position:absolute;left:125px;top:299.37px;font-family:'Liberation Sans', sans-serif;font-size:35px;line-height:35px;color:#1f1f1f;font-weight:400;white-space:nowrap;will-change:transform;">Direkteteksting</div><svg style="position:absolute;left:706px;top:303px;" width="50" height="29" viewBox="0 0 50 29"><rect x="2" y="2" width="46" height="25" rx="12.5" fill="none" stroke="#000" stroke-width="4"/><circle cx="14" cy="14.5" r="6.8" fill="#000"/></svg><svg style="position:absolute;left:46px;top:396.4px;" width="48" height="48" viewBox="0 0 48 48"><path d="M28.27 9.41 L27.58 3.46 L20.42 3.46 L19.73 9.41 L13.50 13.01 L8.00 10.63 L4.42 16.83 L9.23 20.40 L9.23 27.60 L4.42 31.17 L8.00 37.37 L13.50 34.99 L19.73 38.59 L20.42 44.54 L27.58 44.54 L28.27 38.59 L34.50 34.99 L40.00 37.37 L43.58 31.17 L38.77 27.60 L38.77 20.40 L43.58 16.83 L40.00 10.63 L34.50 13.01 Z" fill="none" stroke="#000" stroke-width="2.9" stroke-linejoin="miter"/><circle cx="24" cy="24" r="7" fill="#000"/></svg><div style="position:absolute;left:125px;top:401.87px;font-family:'Liberation Sans', sans-serif;font-size:35px;line-height:35px;color:#1f1f1f;font-weight:400;white-space:nowrap;will-change:transform;">Innstillinger for teksting</div><svg style="position:absolute;left:724px;top:398px;" width="44" height="44" viewBox="0 0 44 44"><path d="M19 3.5H5.5a2 2 0 0 0-2 2v33a2 2 0 0 0 2 2h33a2 2 0 0 0 2-2V25" fill="none" stroke="#000" stroke-width="4"/><path d="M23 3.5H40.5V20.5M40 4 L13 31" fill="none" stroke="#000" stroke-width="4"/></svg></div>
</div>
</body></html>
